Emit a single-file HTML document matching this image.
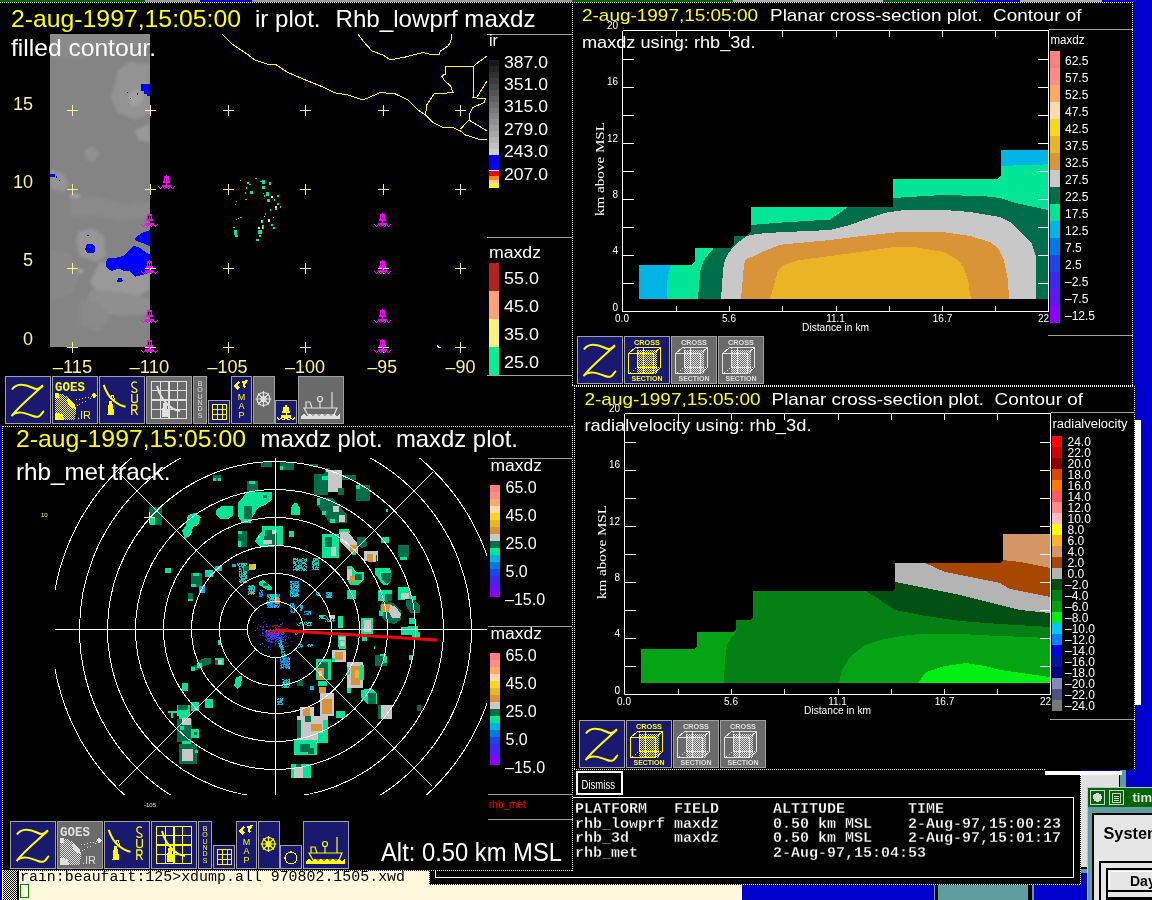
<!DOCTYPE html>
<html><head><meta charset="utf-8">
<style>
html,body{margin:0;padding:0;width:1152px;height:900px;overflow:hidden;background:#0000cd;}
svg{position:absolute;left:0;top:0;will-change:transform;}
text{font-family:"Liberation Sans",sans-serif;}
.mono{font-family:"Liberation Mono",monospace;}
</style></head><body>
<svg width="1152" height="900" viewBox="0 0 1152 900" shape-rendering="crispEdges">
<!-- defs -->
<defs>
<filter id="blur1" x="-20%" y="-20%" width="140%" height="140%"><feGaussianBlur stdDeviation="1.5"/></filter>
<filter id="blur2" x="-50%" y="-50%" width="200%" height="200%"><feGaussianBlur stdDeviation="2"/></filter>


<pattern id="dith_y" width="2" height="2" patternUnits="userSpaceOnUse"><rect width="1" height="1" fill="#ffff00"/><rect x="1" y="1" width="1" height="1" fill="#ffff00"/></pattern>
<pattern id="dith_w" width="2" height="2" patternUnits="userSpaceOnUse"><rect width="1" height="1" fill="#e0e0e0"/><rect x="1" y="1" width="1" height="1" fill="#e0e0e0"/></pattern>
<pattern id="dith_k" width="2" height="2" patternUnits="userSpaceOnUse"><rect width="2" height="2" fill="#fff8dc"/><rect width="1" height="1" fill="#000"/><rect x="1" y="1" width="1" height="1" fill="#000"/></pattern>
</defs>

<!-- bg -->
<rect x="934" y="883" width="100" height="17" fill="#5f9ea0"/>
<rect x="935" y="883" width="3" height="17" fill="#000"/>
<rect x="1028" y="883" width="4" height="17" fill="#000"/>
<rect x="0" y="870" width="742" height="30" fill="#fff8dc"/>
<rect x="3" y="870" width="14" height="30" fill="url(#dith_k)"/>
<rect x="17" y="870" width="1.5" height="30" fill="#000"/>
<text class="mono" x="20" y="881" font-size="14.9" fill="#000" textLength="385" lengthAdjust="spacingAndGlyphs">rain:beaufait:125&gt;xdump.all 970802.1505.xwd</text>
<rect x="20.5" y="884.5" width="8" height="13" fill="none" stroke="#008000" stroke-width="1"/>
<rect x="1081" y="775" width="39" height="93" fill="#e0e0e0"/>
<rect x="1081" y="867" width="7" height="2" fill="#000"/>
<rect x="1081" y="869" width="7" height="4" fill="#5f9ea0"/>
<rect x="1119" y="770" width="1" height="17" fill="#000"/>
<rect x="1120" y="770" width="5.5" height="17" fill="#5f9ea0"/>
<rect x="429" y="770" width="652" height="115" fill="#000"/>
<line x1="429" y1="884.5" x2="1081" y2="884.5" stroke="#fff" stroke-dasharray="1 1"/>
<line x1="1080.5" y1="775" x2="1080.5" y2="885" stroke="#fff" stroke-dasharray="1 1"/>
<line x1="429.5" y1="870" x2="429.5" y2="885" stroke="#fff" stroke-dasharray="1 1"/>
<path d="M435.5 797.5H1073.5V877.5H435.5Z" stroke="#fff" stroke-width="1.5" fill="none"/>
<rect x="1045" y="771" width="77" height="4" fill="#fff"/>
<rect x="577" y="772" width="44.5" height="22" fill="none" stroke="#fff" stroke-width="2"/>
<text x="581.5" y="788.5" font-size="13" fill="#fff" textLength="33.5" lengthAdjust="spacingAndGlyphs">Dismiss</text>
<text class="mono" x="575" y="813.0" font-size="15" font-weight="bold" fill="#fff" stroke="#000" stroke-width="0.3" xml:space="preserve">PLATFORM&#160;&#160;&#160;FIELD&#160;&#160;&#160;&#160;&#160;&#160;ALTITUDE&#160;&#160;&#160;&#160;&#160;&#160;&#160;TIME</text>
<text class="mono" x="575" y="827.7" font-size="15" font-weight="bold" fill="#fff" stroke="#000" stroke-width="0.3" xml:space="preserve">rhb_lowprf&#160;maxdz&#160;&#160;&#160;&#160;&#160;&#160;0.50&#160;km&#160;MSL&#160;&#160;&#160;&#160;2-Aug-97,15:00:23</text>
<text class="mono" x="575" y="842.4" font-size="15" font-weight="bold" fill="#fff" stroke="#000" stroke-width="0.3" xml:space="preserve">rhb_3d&#160;&#160;&#160;&#160;&#160;maxdz&#160;&#160;&#160;&#160;&#160;&#160;0.50&#160;km&#160;MSL&#160;&#160;&#160;&#160;2-Aug-97,15:01:17</text>
<text class="mono" x="575" y="857.1" font-size="15" font-weight="bold" fill="#fff" stroke="#000" stroke-width="0.3" xml:space="preserve">rhb_met&#160;&#160;&#160;&#160;&#160;&#160;&#160;&#160;&#160;&#160;&#160;&#160;&#160;&#160;&#160;2-Aug-97,15:04:53</text>
<!-- tl -->
<rect x="0" y="0" width="572" height="426" fill="#000"/>
<rect x="0" y="0" width="145" height="2" fill="#006400"/>
<rect x="145" y="0" width="55" height="2" fill="#fff" opacity="0.6"/>
<rect x="200" y="0" width="52" height="2" fill="#0000cd"/>
<rect x="252" y="0" width="320" height="2" fill="#fff" opacity="0.6"/>
<line x1="0" y1="2.5" x2="572" y2="2.5" stroke="#fff" stroke-dasharray="1 1"/>
<line x1="572.5" y1="2" x2="572.5" y2="426" stroke="#fff" stroke-dasharray="1 1"/>
<rect x="50" y="34" width="100" height="313" fill="#848484"/>
<defs><clipPath id="irclip"><rect x="50" y="34" width="100" height="313"/></clipPath></defs><g clip-path="url(#irclip)"><g filter="url(#blur1)" opacity="0.75"><path d="M50 34h100v8l-20 6-30 -2-20 14-30 -4z" fill="#8c8c8c"/><path d="M118 70l12-8 20 2v50l-15 6-18-8-6-14z" fill="#999"/><path d="M128 95l8-6 8 4-2 10-10 3z" fill="#aaa"/><path d="M135 130l15-6v18l-12 -2z" fill="#a0a0a0"/><path d="M85 150l8-4 6 8-5 8-8-2z" fill="#959595"/><path d="M50 170l12 2 8 12-6 8-14-4z" fill="#9a9a9a"/><path d="M70 200l25-4 30 8 25-2v15l-30 4-30-6-20 2z" fill="#8c8c8c"/><path d="M78 232l14-4 12 8 2 20-10 6-16-6-4-14z" fill="#9c9c9c"/><path d="M100 262l30 6 20 -6v28l-25 12-25-6-10-14z" fill="#a0a0a0"/><path d="M90 290l30 2 30 6v16l-30 2-35-8z" fill="#939393"/><path d="M50 250l20 4 10 20-8 20-22 6z" fill="#8a8a8a"/><path d="M80 300l20 4 10 15-12 12-18-6z" fill="#8c8c8c"/><path d="M70 194h10v4h-10z M78 269h5v4h-5z" fill="#b0b0b0"/></g></g>
<g fill="#0000ff"><path d="M141 84h9v12h-3v-2h-3v-3h-3z"/><rect x="127" y="92" width="1" height="1"/><rect x="137" y="93" width="1" height="2"/><rect x="130" y="98" width="1" height="1"/><rect x="50" y="174" width="5" height="3"/><rect x="56" y="176" width="1" height="2"/><rect x="59" y="180" width="1" height="1"/><path d="M87 244h6l2 3v5l-3 1h-5l-2-4z"/><rect x="87" y="234.5" width="2" height="1.5"/><path d="M150 230L142 232.7 135 238 136 241 145 243.7 150 246.5z"/><path d="M105.6 262L109 257.5 117.5 257.5 124 255.6 131 248.3 134 245.5 140.4 248.3 147 253 150 254.7 150 273 142 275 135 276.7 129.4 271 124 271 118.4 268.5 112 271 108.3 269.4 105.6 265.7z"/><path d="M118 278h4l1 3-3 1.5-3-1z"/></g>
<path d="M67 110.5H78M72.5 105V116" stroke="#faf096" stroke-width="1" fill="none"/>
<path d="M67 189.5H78M72.5 184V195" stroke="#faf096" stroke-width="1" fill="none"/>
<path d="M67 268.5H78M72.5 263V274" stroke="#faf096" stroke-width="1" fill="none"/>
<path d="M67 347.5H78M72.5 342V353" stroke="#faf096" stroke-width="1" fill="none"/>
<path d="M145 110.5H156M150.5 105V116" stroke="#faf096" stroke-width="1" fill="none"/>
<path d="M145 189.5H156M150.5 184V195" stroke="#faf096" stroke-width="1" fill="none"/>
<path d="M145 268.5H156M150.5 263V274" stroke="#faf096" stroke-width="1" fill="none"/>
<path d="M145 347.5H156M150.5 342V353" stroke="#faf096" stroke-width="1" fill="none"/>
<path d="M223 110.5H234M228.5 105V116" stroke="#faf096" stroke-width="1" fill="none"/>
<path d="M223 189.5H234M228.5 184V195" stroke="#faf096" stroke-width="1" fill="none"/>
<path d="M223 268.5H234M228.5 263V274" stroke="#faf096" stroke-width="1" fill="none"/>
<path d="M223 347.5H234M228.5 342V353" stroke="#faf096" stroke-width="1" fill="none"/>
<path d="M300 110.5H311M305.5 105V116" stroke="#faf096" stroke-width="1" fill="none"/>
<path d="M300 189.5H311M305.5 184V195" stroke="#faf096" stroke-width="1" fill="none"/>
<path d="M300 268.5H311M305.5 263V274" stroke="#faf096" stroke-width="1" fill="none"/>
<path d="M300 347.5H311M305.5 342V353" stroke="#faf096" stroke-width="1" fill="none"/>
<path d="M378 110.5H389M383.5 105V116" stroke="#faf096" stroke-width="1" fill="none"/>
<path d="M378 189.5H389M383.5 184V195" stroke="#faf096" stroke-width="1" fill="none"/>
<path d="M378 268.5H389M383.5 263V274" stroke="#faf096" stroke-width="1" fill="none"/>
<path d="M378 347.5H389M383.5 342V353" stroke="#faf096" stroke-width="1" fill="none"/>
<path d="M455 110.5H466M460.5 105V116" stroke="#faf096" stroke-width="1" fill="none"/>
<path d="M455 189.5H466M460.5 184V195" stroke="#faf096" stroke-width="1" fill="none"/>
<path d="M455 268.5H466M460.5 263V274" stroke="#faf096" stroke-width="1" fill="none"/>
<path d="M455 347.5H466M460.5 342V353" stroke="#faf096" stroke-width="1" fill="none"/>
<g transform="translate(166,175)"><g fill="#ff00ff">
 <rect x="0" y="0" width="1" height="1"/>
 <rect x="-2" y="1" width="5" height="6"/>
 <rect x="-1" y="3" width="1" height="3" fill="#000"/>
 <rect x="1" y="3" width="1" height="3" fill="#000"/>
 <rect x="-3" y="6" width="7" height="2"/>
 <rect x="0" y="8" width="1" height="2"/>
 <rect x="-4" y="10" width="9" height="1"/>
 <rect x="-3" y="11" width="7" height="1"/>
<rect x="-8" y="11" width="1" height="1"/><rect x="-4" y="11" width="1" height="1"/><rect x="4" y="11" width="1" height="1"/><rect x="8" y="11" width="1" height="1"/><rect x="-7" y="12" width="1" height="1"/><rect x="-5" y="12" width="1" height="1"/><rect x="-3" y="12" width="1" height="1"/><rect x="3" y="12" width="1" height="1"/><rect x="5" y="12" width="1" height="1"/><rect x="7" y="12" width="1" height="1"/><rect x="-6" y="13" width="1" height="1"/><rect x="-2" y="13" width="1" height="1"/><rect x="0" y="12" width="1" height="1"/><rect x="2" y="13" width="1" height="1"/><rect x="6" y="13" width="1" height="1"/><rect x="-1" y="12" width="1" height="1"/><rect x="1" y="12" width="1" height="1"/>
</g></g>
<g transform="translate(149,213)"><g fill="#ff00ff">
 <rect x="0" y="0" width="1" height="1"/>
 <rect x="-2" y="1" width="5" height="6"/>
 <rect x="-1" y="3" width="1" height="3" fill="#000"/>
 <rect x="1" y="3" width="1" height="3" fill="#000"/>
 <rect x="-3" y="6" width="7" height="2"/>
 <rect x="0" y="8" width="1" height="2"/>
 <rect x="-4" y="10" width="9" height="1"/>
 <rect x="-3" y="11" width="7" height="1"/>
<rect x="-8" y="11" width="1" height="1"/><rect x="-4" y="11" width="1" height="1"/><rect x="4" y="11" width="1" height="1"/><rect x="8" y="11" width="1" height="1"/><rect x="-7" y="12" width="1" height="1"/><rect x="-5" y="12" width="1" height="1"/><rect x="-3" y="12" width="1" height="1"/><rect x="3" y="12" width="1" height="1"/><rect x="5" y="12" width="1" height="1"/><rect x="7" y="12" width="1" height="1"/><rect x="-6" y="13" width="1" height="1"/><rect x="-2" y="13" width="1" height="1"/><rect x="0" y="12" width="1" height="1"/><rect x="2" y="13" width="1" height="1"/><rect x="6" y="13" width="1" height="1"/><rect x="-1" y="12" width="1" height="1"/><rect x="1" y="12" width="1" height="1"/>
</g></g>
<g transform="translate(149,260)"><g fill="#ff00ff">
 <rect x="0" y="0" width="1" height="1"/>
 <rect x="-2" y="1" width="5" height="6"/>
 <rect x="-1" y="3" width="1" height="3" fill="#000"/>
 <rect x="1" y="3" width="1" height="3" fill="#000"/>
 <rect x="-3" y="6" width="7" height="2"/>
 <rect x="0" y="8" width="1" height="2"/>
 <rect x="-4" y="10" width="9" height="1"/>
 <rect x="-3" y="11" width="7" height="1"/>
<rect x="-8" y="11" width="1" height="1"/><rect x="-4" y="11" width="1" height="1"/><rect x="4" y="11" width="1" height="1"/><rect x="8" y="11" width="1" height="1"/><rect x="-7" y="12" width="1" height="1"/><rect x="-5" y="12" width="1" height="1"/><rect x="-3" y="12" width="1" height="1"/><rect x="3" y="12" width="1" height="1"/><rect x="5" y="12" width="1" height="1"/><rect x="7" y="12" width="1" height="1"/><rect x="-6" y="13" width="1" height="1"/><rect x="-2" y="13" width="1" height="1"/><rect x="0" y="12" width="1" height="1"/><rect x="2" y="13" width="1" height="1"/><rect x="6" y="13" width="1" height="1"/><rect x="-1" y="12" width="1" height="1"/><rect x="1" y="12" width="1" height="1"/>
</g></g>
<g transform="translate(149,309)"><g fill="#ff00ff">
 <rect x="0" y="0" width="1" height="1"/>
 <rect x="-2" y="1" width="5" height="6"/>
 <rect x="-1" y="3" width="1" height="3" fill="#000"/>
 <rect x="1" y="3" width="1" height="3" fill="#000"/>
 <rect x="-3" y="6" width="7" height="2"/>
 <rect x="0" y="8" width="1" height="2"/>
 <rect x="-4" y="10" width="9" height="1"/>
 <rect x="-3" y="11" width="7" height="1"/>
<rect x="-8" y="11" width="1" height="1"/><rect x="-4" y="11" width="1" height="1"/><rect x="4" y="11" width="1" height="1"/><rect x="8" y="11" width="1" height="1"/><rect x="-7" y="12" width="1" height="1"/><rect x="-5" y="12" width="1" height="1"/><rect x="-3" y="12" width="1" height="1"/><rect x="3" y="12" width="1" height="1"/><rect x="5" y="12" width="1" height="1"/><rect x="7" y="12" width="1" height="1"/><rect x="-6" y="13" width="1" height="1"/><rect x="-2" y="13" width="1" height="1"/><rect x="0" y="12" width="1" height="1"/><rect x="2" y="13" width="1" height="1"/><rect x="6" y="13" width="1" height="1"/><rect x="-1" y="12" width="1" height="1"/><rect x="1" y="12" width="1" height="1"/>
</g></g>
<g transform="translate(149,339)"><g fill="#ff00ff">
 <rect x="0" y="0" width="1" height="1"/>
 <rect x="-2" y="1" width="5" height="6"/>
 <rect x="-1" y="3" width="1" height="3" fill="#000"/>
 <rect x="1" y="3" width="1" height="3" fill="#000"/>
 <rect x="-3" y="6" width="7" height="2"/>
 <rect x="0" y="8" width="1" height="2"/>
 <rect x="-4" y="10" width="9" height="1"/>
 <rect x="-3" y="11" width="7" height="1"/>
<rect x="-8" y="11" width="1" height="1"/><rect x="-4" y="11" width="1" height="1"/><rect x="4" y="11" width="1" height="1"/><rect x="8" y="11" width="1" height="1"/><rect x="-7" y="12" width="1" height="1"/><rect x="-5" y="12" width="1" height="1"/><rect x="-3" y="12" width="1" height="1"/><rect x="3" y="12" width="1" height="1"/><rect x="5" y="12" width="1" height="1"/><rect x="7" y="12" width="1" height="1"/><rect x="-6" y="13" width="1" height="1"/><rect x="-2" y="13" width="1" height="1"/><rect x="0" y="12" width="1" height="1"/><rect x="2" y="13" width="1" height="1"/><rect x="6" y="13" width="1" height="1"/><rect x="-1" y="12" width="1" height="1"/><rect x="1" y="12" width="1" height="1"/>
</g></g>
<g transform="translate(382,213)"><g fill="#ff00ff">
 <rect x="0" y="0" width="1" height="1"/>
 <rect x="-2" y="1" width="5" height="6"/>
 <rect x="-1" y="3" width="1" height="3" fill="#000"/>
 <rect x="1" y="3" width="1" height="3" fill="#000"/>
 <rect x="-3" y="6" width="7" height="2"/>
 <rect x="0" y="8" width="1" height="2"/>
 <rect x="-4" y="10" width="9" height="1"/>
 <rect x="-3" y="11" width="7" height="1"/>
<rect x="-8" y="11" width="1" height="1"/><rect x="-4" y="11" width="1" height="1"/><rect x="4" y="11" width="1" height="1"/><rect x="8" y="11" width="1" height="1"/><rect x="-7" y="12" width="1" height="1"/><rect x="-5" y="12" width="1" height="1"/><rect x="-3" y="12" width="1" height="1"/><rect x="3" y="12" width="1" height="1"/><rect x="5" y="12" width="1" height="1"/><rect x="7" y="12" width="1" height="1"/><rect x="-6" y="13" width="1" height="1"/><rect x="-2" y="13" width="1" height="1"/><rect x="0" y="12" width="1" height="1"/><rect x="2" y="13" width="1" height="1"/><rect x="6" y="13" width="1" height="1"/><rect x="-1" y="12" width="1" height="1"/><rect x="1" y="12" width="1" height="1"/>
</g></g>
<g transform="translate(382,260)"><g fill="#ff00ff">
 <rect x="0" y="0" width="1" height="1"/>
 <rect x="-2" y="1" width="5" height="6"/>
 <rect x="-1" y="3" width="1" height="3" fill="#000"/>
 <rect x="1" y="3" width="1" height="3" fill="#000"/>
 <rect x="-3" y="6" width="7" height="2"/>
 <rect x="0" y="8" width="1" height="2"/>
 <rect x="-4" y="10" width="9" height="1"/>
 <rect x="-3" y="11" width="7" height="1"/>
<rect x="-8" y="11" width="1" height="1"/><rect x="-4" y="11" width="1" height="1"/><rect x="4" y="11" width="1" height="1"/><rect x="8" y="11" width="1" height="1"/><rect x="-7" y="12" width="1" height="1"/><rect x="-5" y="12" width="1" height="1"/><rect x="-3" y="12" width="1" height="1"/><rect x="3" y="12" width="1" height="1"/><rect x="5" y="12" width="1" height="1"/><rect x="7" y="12" width="1" height="1"/><rect x="-6" y="13" width="1" height="1"/><rect x="-2" y="13" width="1" height="1"/><rect x="0" y="12" width="1" height="1"/><rect x="2" y="13" width="1" height="1"/><rect x="6" y="13" width="1" height="1"/><rect x="-1" y="12" width="1" height="1"/><rect x="1" y="12" width="1" height="1"/>
</g></g>
<g transform="translate(382,309)"><g fill="#ff00ff">
 <rect x="0" y="0" width="1" height="1"/>
 <rect x="-2" y="1" width="5" height="6"/>
 <rect x="-1" y="3" width="1" height="3" fill="#000"/>
 <rect x="1" y="3" width="1" height="3" fill="#000"/>
 <rect x="-3" y="6" width="7" height="2"/>
 <rect x="0" y="8" width="1" height="2"/>
 <rect x="-4" y="10" width="9" height="1"/>
 <rect x="-3" y="11" width="7" height="1"/>
<rect x="-8" y="11" width="1" height="1"/><rect x="-4" y="11" width="1" height="1"/><rect x="4" y="11" width="1" height="1"/><rect x="8" y="11" width="1" height="1"/><rect x="-7" y="12" width="1" height="1"/><rect x="-5" y="12" width="1" height="1"/><rect x="-3" y="12" width="1" height="1"/><rect x="3" y="12" width="1" height="1"/><rect x="5" y="12" width="1" height="1"/><rect x="7" y="12" width="1" height="1"/><rect x="-6" y="13" width="1" height="1"/><rect x="-2" y="13" width="1" height="1"/><rect x="0" y="12" width="1" height="1"/><rect x="2" y="13" width="1" height="1"/><rect x="6" y="13" width="1" height="1"/><rect x="-1" y="12" width="1" height="1"/><rect x="1" y="12" width="1" height="1"/>
</g></g>
<g transform="translate(382,339)"><g fill="#ff00ff">
 <rect x="0" y="0" width="1" height="1"/>
 <rect x="-2" y="1" width="5" height="6"/>
 <rect x="-1" y="3" width="1" height="3" fill="#000"/>
 <rect x="1" y="3" width="1" height="3" fill="#000"/>
 <rect x="-3" y="6" width="7" height="2"/>
 <rect x="0" y="8" width="1" height="2"/>
 <rect x="-4" y="10" width="9" height="1"/>
 <rect x="-3" y="11" width="7" height="1"/>
<rect x="-8" y="11" width="1" height="1"/><rect x="-4" y="11" width="1" height="1"/><rect x="4" y="11" width="1" height="1"/><rect x="8" y="11" width="1" height="1"/><rect x="-7" y="12" width="1" height="1"/><rect x="-5" y="12" width="1" height="1"/><rect x="-3" y="12" width="1" height="1"/><rect x="3" y="12" width="1" height="1"/><rect x="5" y="12" width="1" height="1"/><rect x="7" y="12" width="1" height="1"/><rect x="-6" y="13" width="1" height="1"/><rect x="-2" y="13" width="1" height="1"/><rect x="0" y="12" width="1" height="1"/><rect x="2" y="13" width="1" height="1"/><rect x="6" y="13" width="1" height="1"/><rect x="-1" y="12" width="1" height="1"/><rect x="1" y="12" width="1" height="1"/>
</g></g>
<g fill="#00e696"><rect x="240" y="180" width="1" height="1"/><rect x="255" y="178" width="2" height="1"/><rect x="247" y="182" width="2" height="2"/><rect x="249" y="184" width="2" height="1"/><rect x="246" y="187" width="1" height="2"/><rect x="250" y="191" width="3" height="3"/><rect x="245" y="192" width="1" height="2"/><rect x="245" y="199" width="2" height="1"/><rect x="236" y="201" width="1" height="1"/><rect x="235" y="204" width="1" height="1"/><rect x="262" y="180" width="3" height="4"/><rect x="260" y="181" width="2" height="1"/><rect x="269" y="182" width="2" height="3"/><rect x="262" y="186" width="3" height="3"/><rect x="266" y="192" width="3" height="4"/><rect x="263" y="193" width="1" height="1"/><rect x="264" y="195" width="1" height="2"/><rect x="277" y="195" width="2" height="2"/><rect x="274" y="199" width="1" height="2"/><rect x="267" y="199" width="3" height="3"/><rect x="277" y="203" width="2" height="2"/><rect x="280" y="206" width="1" height="2"/><rect x="275" y="207" width="2" height="3"/><rect x="270" y="209" width="1" height="2"/><rect x="265" y="213" width="1" height="2"/><rect x="240" y="217" width="2" height="1"/><rect x="238" y="218" width="1" height="1"/><rect x="236" y="219" width="1" height="1"/><rect x="273" y="217" width="1" height="1"/><rect x="271" y="224" width="2" height="2"/><rect x="273" y="227" width="2" height="2"/><rect x="262" y="225" width="2" height="4"/><rect x="258" y="230" width="4" height="4"/><rect x="259" y="235" width="2" height="2"/><rect x="256" y="239" width="3" height="2"/><rect x="233" y="227" width="2" height="1"/><rect x="234" y="230" width="3" height="5"/><rect x="235" y="235" width="3" height="2"/><rect x="261" y="220" width="2" height="3"/></g>
<g fill="#f0e68c"><rect x="271" y="196" width="2" height="2"/><rect x="275" y="206" width="2" height="2"/><rect x="264" y="216" width="1" height="1"/><rect x="268" y="219" width="2" height="3"/><rect x="261" y="220" width="1" height="2"/><rect x="258" y="227" width="2" height="2"/><rect x="262" y="227" width="1" height="2"/></g>
<g fill="none" stroke="#ffff00" stroke-width="1">
<polyline points="358,34 363,41 372,51 383,55 390.5,60 405.5,57 423,52.5 433,55 439,54.5 440.5,51 448,46 450.5,42.5 452,34"/>
<polyline points="222,34 232,44 247,54 255,60 267,64 275,64 287,72 303,79 320.5,86 335.5,93 348,95 363,100 380.5,92.5 395.5,94 408,100 418,110 425.5,115 433,122.5 443,127.5 453,127.5 460.5,131 465.5,135 478,139 487,139"/>
<polyline points="425.5,115 426.75,105 434,94 453,92.5 450.5,86 444,80 441.75,76 445.5,74 445.5,66 474,66 478,62.5 485.5,57 487,56"/>
<polyline points="474,66 473,97.5 485.5,99 484,102.5 473,107.5 469,115 469,120 460.5,129"/>
<polyline points="469,120 487,131"/>
<polyline points="477,97 487,81"/>
</g>
<path d="M437 345l2 3 2 -1" stroke="#ffff00" fill="none"/>
<text x="11" y="27" font-size="24" fill="#ffff00" textLength="230" lengthAdjust="spacingAndGlyphs">2-aug-1997,15:05:00</text>
<text x="255" y="27" font-size="24" fill="#fff" textLength="65.5" lengthAdjust="spacingAndGlyphs">ir plot.</text>
<text x="335.5" y="27" font-size="24" fill="#fff" textLength="200" lengthAdjust="spacingAndGlyphs">Rhb_lowprf maxdz</text>
<text x="11" y="56" font-size="24" fill="#fff" textLength="145" lengthAdjust="spacingAndGlyphs">filled contour.</text>
<text x="33" y="110" font-size="18" fill="#faf096" text-anchor="end">15</text>
<text x="33" y="188" font-size="18" fill="#faf096" text-anchor="end">10</text>
<text x="33" y="266" font-size="18" fill="#faf096" text-anchor="end">5</text>
<text x="33" y="345" font-size="18" fill="#faf096" text-anchor="end">0</text>
<text x="52.7" y="373" font-size="18" fill="#faf096" textLength="39.5" lengthAdjust="spacingAndGlyphs">&#8211;115</text>
<text x="129.6" y="373" font-size="18" fill="#faf096" textLength="39.6" lengthAdjust="spacingAndGlyphs">&#8211;110</text>
<text x="207.5" y="373" font-size="18" fill="#faf096" textLength="40.0" lengthAdjust="spacingAndGlyphs">&#8211;105</text>
<text x="285" y="373" font-size="18" fill="#faf096" textLength="40.0" lengthAdjust="spacingAndGlyphs">&#8211;100</text>
<text x="367.5" y="373" font-size="18" fill="#faf096" textLength="29.5" lengthAdjust="spacingAndGlyphs">&#8211;95</text>
<text x="445.5" y="373" font-size="18" fill="#faf096" textLength="30.0" lengthAdjust="spacingAndGlyphs">&#8211;90</text>
<rect x="487" y="34" width="85" height="1" fill="#a0a0a0"/>
<text x="489" y="46" font-size="16" fill="#fff">ir</text>
<defs><linearGradient id="irg" x1="0" y1="0" x2="0" y2="1"><stop offset="0" stop-color="#181818"/><stop offset="1" stop-color="#d0d0d0"/></linearGradient></defs>
<rect x="489" y="60.00" width="10" height="6.24" fill="rgb(24,24,24)"/>
<rect x="489" y="65.94" width="10" height="6.24" fill="rgb(36,36,36)"/>
<rect x="489" y="71.88" width="10" height="6.24" fill="rgb(48,48,48)"/>
<rect x="489" y="77.81" width="10" height="6.24" fill="rgb(60,60,60)"/>
<rect x="489" y="83.75" width="10" height="6.24" fill="rgb(72,72,72)"/>
<rect x="489" y="89.69" width="10" height="6.24" fill="rgb(84,84,84)"/>
<rect x="489" y="95.62" width="10" height="6.24" fill="rgb(96,96,96)"/>
<rect x="489" y="101.56" width="10" height="6.24" fill="rgb(108,108,108)"/>
<rect x="489" y="107.50" width="10" height="6.24" fill="rgb(120,120,120)"/>
<rect x="489" y="113.44" width="10" height="6.24" fill="rgb(132,132,132)"/>
<rect x="489" y="119.38" width="10" height="6.24" fill="rgb(144,144,144)"/>
<rect x="489" y="125.31" width="10" height="6.24" fill="rgb(156,156,156)"/>
<rect x="489" y="131.25" width="10" height="6.24" fill="rgb(168,168,168)"/>
<rect x="489" y="137.19" width="10" height="6.24" fill="rgb(180,180,180)"/>
<rect x="489" y="143.12" width="10" height="6.24" fill="rgb(192,192,192)"/>
<rect x="489" y="149.06" width="10" height="6.24" fill="rgb(205,205,205)"/>
<rect x="489" y="155" width="10" height="15" fill="#0000ff"/>
<rect x="489" y="170" width="10" height="1" fill="#fff"/>
<rect x="489" y="171" width="10" height="5" fill="#ff0000"/>
<rect x="489" y="176" width="10" height="4" fill="#ff8c00"/>
<rect x="489" y="180" width="10" height="3" fill="#ffc0cb"/>
<rect x="489" y="183" width="10" height="5" fill="#ffff00"/>
<text x="504" y="67.5" font-size="16" fill="#fff" textLength="44" lengthAdjust="spacingAndGlyphs">387.0</text>
<text x="504" y="89.9" font-size="16" fill="#fff" textLength="44" lengthAdjust="spacingAndGlyphs">351.0</text>
<text x="504" y="112.3" font-size="16" fill="#fff" textLength="44" lengthAdjust="spacingAndGlyphs">315.0</text>
<text x="504" y="134.7" font-size="16" fill="#fff" textLength="44" lengthAdjust="spacingAndGlyphs">279.0</text>
<text x="504" y="157.1" font-size="16" fill="#fff" textLength="44" lengthAdjust="spacingAndGlyphs">243.0</text>
<text x="504" y="179.5" font-size="16" fill="#fff" textLength="44" lengthAdjust="spacingAndGlyphs">207.0</text>
<rect x="487" y="237" width="85" height="1" fill="#a0a0a0"/>
<text x="489" y="257.5" font-size="16" fill="#fff" textLength="52" lengthAdjust="spacingAndGlyphs">maxdz</text>
<rect x="489" y="263" width="10" height="28" fill="#b22222"/>
<rect x="489" y="291" width="10" height="28" fill="#ffa07a"/>
<rect x="489" y="319" width="10" height="28" fill="#faf278"/>
<rect x="489" y="347" width="10" height="28" fill="#00f096"/>
<text x="504" y="284" font-size="16" fill="#fff" textLength="35" lengthAdjust="spacingAndGlyphs">55.0</text>
<text x="504" y="312" font-size="16" fill="#fff" textLength="35" lengthAdjust="spacingAndGlyphs">45.0</text>
<text x="504" y="340" font-size="16" fill="#fff" textLength="35" lengthAdjust="spacingAndGlyphs">35.0</text>
<text x="504" y="368" font-size="16" fill="#fff" textLength="35" lengthAdjust="spacingAndGlyphs">25.0</text>
<rect x="487" y="375" width="85" height="1" fill="#a0a0a0"/>
<g transform="translate(5,376)"><rect x="0.5" y="0.5" width="45" height="47" fill="#191970" stroke="#a0a0a0" stroke-width="1"/><path d="M7 13.5C11 7,20 8,27 11.5S35 11,38 9.5C28 19,14 30,6.5 40C12 34,20 37,28 40S36 37,39 35" stroke="#ffff00" stroke-width="2" fill="none" shape-rendering="auto"/></g>
<g transform="translate(52,376)"><rect x="0.5" y="0.5" width="45" height="47" fill="#191970" stroke="#a0a0a0" stroke-width="1"/><text x="3" y="15" font-size="13" font-weight="bold" fill="#ffff00" textLength="30" lengthAdjust="spacingAndGlyphs" style="font-family:Liberation Mono">GOES</text><path d="M3 17 C12 17,23 23,24 33 C24 38,23 42,22 44 H3Z" fill="url(#dith_y)"/><path d="M3 37 C7 36,12 38,12 44H3Z M3 17h4v5h-4z M14 22 C19 23,23 28,24 33 L19 32 C17 28,15 26,14 22Z" fill="#ffff00"/><path d="M24 24 L42 20 M22 31 L42 21" stroke="#ffff00" stroke-dasharray="1 2" fill="none"/><path d="M39 19l3 -2 3 2 -3 3z" fill="#ffff00"/><text x="25" y="43" font-size="10" fill="#ffff00" textLength="14" lengthAdjust="spacingAndGlyphs">.IR</text></g>
<g transform="translate(99,376)"><rect x="0.5" y="0.5" width="45" height="47" fill="#191970" stroke="#a0a0a0" stroke-width="1"/><path d="M4.7 8.9 C7 16,10 21,15 25 S22 30,26.6 30.7" stroke="#ffff00" stroke-width="2" fill="none" shape-rendering="auto"/><path d="M10 25 L8.4 39 H15.5 L13 25Z" fill="#ffff00"/><path d="M11 21 L14 19 L16 25" stroke="#ffff00" fill="none"/><g fill="none" stroke="#ffff00" stroke-width="1.3" shape-rendering="auto"><path d="M38 6.5C34 5,32 7,33 10S38 12,38 14.5 34 17,32.5 15"/><path d="M32.8 18V25C32.8 27,38.3 27,38.3 25V18"/><path d="M32.8 39V29H36.5C38.5 29,38.5 34,36.5 34H32.8M35.5 34L38.5 39"/></g></g>
<g transform="translate(146,376)"><rect x="0.5" y="0.5" width="45" height="47" fill="#6a6a6a" stroke="#a0a0a0" stroke-width="1"/><g stroke="#e0e0e0" fill="none" stroke-width="1.2"><rect x="5.5" y="5.5" width="35" height="37"/><line x1="14.2" y1="5.5" x2="14.2" y2="42.5"/><line x1="5.5" y1="14.8" x2="40.5" y2="14.8"/><line x1="23.0" y1="5.5" x2="23.0" y2="42.5"/><line x1="5.5" y1="24.0" x2="40.5" y2="24.0"/><line x1="31.8" y1="5.5" x2="31.8" y2="42.5"/><line x1="5.5" y1="33.2" x2="40.5" y2="33.2"/></g><path d="M11 10C13 18,17 24,22 29S30 34,34 35" stroke="#e0e0e0" stroke-width="2" fill="none" shape-rendering="auto"/><path d="M17 27L15.5 41H22.5L20.5 27Z" fill="#e0e0e0"/></g>
<g transform="translate(193,376)"><rect x="0.5" y="0.5" width="13" height="47" fill="#6a6a6a" stroke="#a0a0a0" stroke-width="1"/><g fill="#e0e0e0" font-size="7" text-anchor="middle"><text x="7" y="10.0">B</text><text x="7" y="16.3">O</text><text x="7" y="22.6">U</text><text x="7" y="28.9">N</text><text x="7" y="35.2">D</text><text x="7" y="41.5">S</text></g></g>
<g transform="translate(208,400)"><rect x="0.5" y="0.5" width="21" height="23" fill="#191970" stroke="#a0a0a0" stroke-width="1"/><g stroke="#ffff00" fill="none" stroke-width="1"><rect x="4.5" y="4.5" width="14" height="15"/><path d="M9.5 4.5V19.5M14 4.5V19.5M4.5 9.5H18.5M4.5 14.5H18.5"/></g></g>
<g transform="translate(231,376)"><rect x="0.5" y="0.5" width="20" height="47" fill="#191970" stroke="#a0a0a0" stroke-width="1"/><path d="M3 9 L7 5 L9 6 L7 9 L9 12 L6 14 L4 12Z M11 5 L17 4 L16 7 L14 8 L15 11 L13 12 L12 9Z" fill="#ffff00"/><g fill="#ffff00" font-size="9" text-anchor="middle"><text x="10.5" y="24">M</text><text x="10.5" y="33">A</text><text x="10.5" y="42">P</text></g></g>
<g transform="translate(253,376)"><rect x="0.5" y="0.5" width="21" height="47" fill="#6a6a6a" stroke="#a0a0a0" stroke-width="1"/><g stroke="#e0e0e0" fill="none" stroke-width="1.2" shape-rendering="auto"><circle cx="10.5" cy="23" r="6.5"/><circle cx="10.5" cy="23" r="2.5"/><path d="M10.5 15V31M2.5 23H18.5M5 17.5L16 28.5M16 17.5L5 28.5"/></g></g>
<g transform="translate(275,400)"><rect x="0.5" y="0.5" width="21" height="23" fill="#191970" stroke="#a0a0a0" stroke-width="1"/><g fill="#ffff00"><rect x="10" y="5" width="2" height="2"/><rect x="8" y="7" width="6" height="5"/><rect x="7" y="11" width="8" height="2"/><rect x="10.5" y="13" width="1" height="3"/><rect x="6" y="15" width="10" height="3"/></g><polyline points="2,17 4,20 6,18 8,20 11,18 14,20 16,18 18,20 20,17" stroke="#ffff00" fill="none"/></g>
<g transform="translate(298,376)"><rect x="0.5" y="0.5" width="45" height="47" fill="#6a6a6a" stroke="#a0a0a0" stroke-width="1"/><g stroke="#e0e0e0" fill="none" stroke-width="1.2" shape-rendering="auto"><path d="M6 32H39L36 39H10Z"/><path d="M8 32V26H12L14 32"/><circle cx="22" cy="23" r="2.5"/><path d="M22 25.5V32M34 16V32"/></g><path d="M3 40L6 38 9 40 12 38 15 40 18 38 21 40 24 38 27 40 30 38 33 40 36 38 39 40 42 38V43H3Z" fill="#e0e0e0"/></g>
<!-- tr -->
<rect x="572" y="0" width="161" height="2" fill="#006400"/>
<rect x="733" y="0" width="150" height="2" fill="#b0b0b0"/>
<rect x="883" y="0" width="91" height="2" fill="#006400"/>
<rect x="974" y="0" width="46" height="2" fill="#0000cd"/>
<rect x="1020" y="0" width="82" height="2" fill="#b0b0b0"/>
<rect x="572" y="2" width="561" height="384" fill="#000"/>
<line x1="572" y1="2.5" x2="1133" y2="2.5" stroke="#fff" stroke-dasharray="1 1"/>
<line x1="1132.5" y1="2" x2="1132.5" y2="386" stroke="#fff" stroke-dasharray="1 1"/>
<line x1="572" y1="385.5" x2="1133" y2="385.5" stroke="#fff" stroke-dasharray="1 1"/>
<line x1="572.5" y1="2" x2="572.5" y2="386" stroke="#fff" stroke-dasharray="1 1"/>
<polygon fill="#00e696" points="639,299 639,265 692,265 695,261 695,248 731,248 734,244 734,236 746,236 751,232 751,207 893,207 893,179 997,179 1001,175 1001,150 1048,150 1048,299"/>
<polygon fill="#00b4e6" points="639,265 671,265 668,275 667,285 666.5,299 639,299"/>
<polygon fill="#00b4e6" points="1001,150 1048,150 1048,164.4 1020,165 1001,166.4"/>
<polygon fill="#006e4b" points="698,299 699,285 700.5,270 703,262 708,255 713.8,248 731,248 734,244 734,236 746,236 751,232 751,225 780,222.6 830,219.5 848,207 893,207 893,198 942,195 982,196 1000,198 1016,203 1048,210 1048,299"/>
<polygon fill="#c8c8c8" points="721,299 722.7,275 723.6,266 725.3,259 728.9,252.8 732.4,248.3 736.9,243.4 742.2,239.4 746.7,235.9 753.8,234.6 764.4,233.2 780,232.3 830,230 850,225 866,219 884,213 904,210 950,210.4 970,212 1000,217 1010,222 1022,234 1032,244 1036,256 1036,299"/>
<polygon fill="#d89436" points="741,299 743.1,275 744,264.3 745.8,259 753.8,256.3 764.4,251 780,244.8 830,240 854,237 880,234 900,232 942,232 970,236 990,242 998,248 1004,260 1008,280 1009,299"/>
<polygon fill="#ebb425" points="770,299 774,285 778,270 783,265 800,260 830,256 860,252 894,247 914,247 944,252 958,260 964,268 968,280 971,299"/>
<g stroke="#fff" stroke-width="1" fill="none">
<path d="M622.5 30.5V311.5H1048.5V30.5H622.5"/>
<path d="M622.5 59.5h11M1048.5 59.5h-11"/>
<path d="M622.5 87.5h11M1048.5 87.5h-11"/>
<path d="M622.5 115.5h11M1048.5 115.5h-11"/>
<path d="M622.5 143.5h11M1048.5 143.5h-11"/>
<path d="M622.5 171.5h11M1048.5 171.5h-11"/>
<path d="M622.5 199.5h11M1048.5 199.5h-11"/>
<path d="M622.5 227.5h11M1048.5 227.5h-11"/>
<path d="M622.5 255.5h11M1048.5 255.5h-11"/>
<path d="M622.5 283.5h11M1048.5 283.5h-11"/>
<path d="M676.5 30.5v6M676.5 311.5v-6"/>
<path d="M729.5 30.5v6M729.5 311.5v-6"/>
<path d="M782.5 30.5v6M782.5 311.5v-6"/>
<path d="M836.5 30.5v6M836.5 311.5v-6"/>
<path d="M889.5 30.5v6M889.5 311.5v-6"/>
<path d="M942.5 30.5v6M942.5 311.5v-6"/>
<path d="M995.5 30.5v6M995.5 311.5v-6"/>
</g>
<text x="618" y="29.0" font-size="10" fill="#fff" text-anchor="end">20</text>
<text x="618" y="85.3" font-size="10" fill="#fff" text-anchor="end">16</text>
<text x="618" y="141.6" font-size="10" fill="#fff" text-anchor="end">12</text>
<text x="618" y="197.9" font-size="10" fill="#fff" text-anchor="end">8</text>
<text x="618" y="254.2" font-size="10" fill="#fff" text-anchor="end">4</text>
<text x="618" y="310.5" font-size="10" fill="#fff" text-anchor="end">0</text>
<text x="622" y="322" font-size="10" fill="#fff" text-anchor="middle">0.0</text>
<text x="729" y="322" font-size="10" fill="#fff" text-anchor="middle">5.6</text>
<text x="835.5" y="322" font-size="10" fill="#fff" text-anchor="middle">11.1</text>
<text x="942.5" y="322" font-size="10" fill="#fff" text-anchor="middle">16.7</text>
<text x="1038" y="322" font-size="10" fill="#fff">22</text>
<text x="802" y="331" font-size="10" fill="#fff" textLength="67" lengthAdjust="spacingAndGlyphs">Distance in km</text>
<text transform="translate(604,169) rotate(-90)" font-size="12.5" fill="#fff" text-anchor="middle" textLength="94" lengthAdjust="spacingAndGlyphs" style="font-family:Liberation Serif">km above MSL</text>
<text x="582" y="20.5" font-size="17" fill="#ffff00" textLength="176" lengthAdjust="spacingAndGlyphs">2-aug-1997,15:05:00</text>
<text x="770" y="20.5" font-size="17" fill="#fff" textLength="311.5" lengthAdjust="spacingAndGlyphs" style="white-space:pre">Planar cross-section plot.  Contour of</text>
<text x="582" y="47.5" font-size="17" fill="#fff" textLength="173.5" lengthAdjust="spacingAndGlyphs">maxdz using: rhb_3d.</text>
<rect x="1049" y="29" width="84" height="1" fill="#a0a0a0"/>
<text x="1050.5" y="44" font-size="12" fill="#fff" textLength="34" lengthAdjust="spacingAndGlyphs">maxdz</text>
<rect x="1050" y="51" width="10" height="17" fill="#ff7f7f"/>
<text x="1065" y="64.6" font-size="12" fill="#fff">62.5</text>
<rect x="1050" y="68" width="10" height="17" fill="#ff8c8c"/>
<text x="1065" y="81.6" font-size="12" fill="#fff">57.5</text>
<rect x="1050" y="85" width="10" height="17" fill="#ffaa64"/>
<text x="1065" y="98.6" font-size="12" fill="#fff">52.5</text>
<rect x="1050" y="102" width="10" height="17" fill="#ffdab0"/>
<text x="1065" y="115.6" font-size="12" fill="#fff">47.5</text>
<rect x="1050" y="119" width="10" height="17" fill="#f8d818"/>
<text x="1065" y="132.6" font-size="12" fill="#fff">42.5</text>
<rect x="1050" y="136" width="10" height="17" fill="#eab428"/>
<text x="1065" y="149.6" font-size="12" fill="#fff">37.5</text>
<rect x="1050" y="153" width="10" height="17" fill="#d89438"/>
<text x="1065" y="166.6" font-size="12" fill="#fff">32.5</text>
<rect x="1050" y="170" width="10" height="17" fill="#c8c8c8"/>
<text x="1065" y="183.6" font-size="12" fill="#fff">27.5</text>
<rect x="1050" y="187" width="10" height="17" fill="#006e4b"/>
<text x="1065" y="200.6" font-size="12" fill="#fff">22.5</text>
<rect x="1050" y="204" width="10" height="17" fill="#00e696"/>
<text x="1065" y="217.6" font-size="12" fill="#fff">17.5</text>
<rect x="1050" y="221" width="10" height="17" fill="#00b4e6"/>
<text x="1065" y="234.6" font-size="12" fill="#fff">12.5</text>
<rect x="1050" y="238" width="10" height="17" fill="#0078e6"/>
<text x="1065" y="251.6" font-size="12" fill="#fff">7.5</text>
<rect x="1050" y="255" width="10" height="17" fill="#1e46e6"/>
<text x="1065" y="268.6" font-size="12" fill="#fff">2.5</text>
<rect x="1050" y="272" width="10" height="17" fill="#3c28e6"/>
<text x="1065" y="285.6" font-size="12" fill="#fff">&#8211;2.5</text>
<rect x="1050" y="289" width="10" height="17" fill="#6414f0"/>
<text x="1065" y="302.6" font-size="12" fill="#fff">&#8211;7.5</text>
<rect x="1050" y="306" width="10" height="17" fill="#8c00ff"/>
<text x="1065" y="319.6" font-size="12" fill="#fff">&#8211;12.5</text>
<rect x="1048" y="335" width="85" height="1" fill="#a0a0a0"/>
<g transform="translate(577,336)"><rect x="0.5" y="0.5" width="45" height="47" fill="#191970" stroke="#a0a0a0" stroke-width="1"/><path d="M7 13.5C11 7,20 8,27 11.5S35 11,38 9.5C28 19,14 30,6.5 40C12 34,20 37,28 40S36 37,39 35" stroke="#ffff00" stroke-width="2" fill="none" shape-rendering="auto"/></g>
<g transform="translate(624,336)"><rect x="0.5" y="0.5" width="45" height="47" fill="#191970" stroke="#a0a0a0" stroke-width="1"/><text x="23" y="8.5" font-size="7.5" font-weight="bold" fill="#ffff00" text-anchor="middle" textLength="26" lengthAdjust="spacingAndGlyphs">CROSS</text><text x="23" y="45" font-size="7.5" font-weight="bold" fill="#ffff00" text-anchor="middle" textLength="31" lengthAdjust="spacingAndGlyphs">SECTION</text><rect x="13" y="14" width="20" height="24" fill="url(#dith_y)"/><g stroke="#ffff00" fill="none" stroke-width="1"><path d="M4.5 17.5H29.5V37.5H4.5Z M4.5 17.5L11.5 11.5H36.5L29.5 17.5 M36.5 11.5V31.5L29.5 37.5"/><path d="M13.5 11.5V31.5H36.5 M13.5 31.5L4.5 37.5" stroke-dasharray="1 1"/><path d="M19.5 11.5V37.5"/></g></g>
<g transform="translate(671,336)"><rect x="0.5" y="0.5" width="45" height="47" fill="#6a6a6a" stroke="#a0a0a0" stroke-width="1"/><text x="23" y="8.5" font-size="7.5" font-weight="bold" fill="#e0e0e0" text-anchor="middle" textLength="26" lengthAdjust="spacingAndGlyphs">CROSS</text><text x="23" y="45" font-size="7.5" font-weight="bold" fill="#e0e0e0" text-anchor="middle" textLength="31" lengthAdjust="spacingAndGlyphs">SECTION</text><rect x="13" y="14" width="20" height="24" fill="url(#dith_w)"/><g stroke="#e0e0e0" fill="none" stroke-width="1"><path d="M4.5 17.5H29.5V37.5H4.5Z M4.5 17.5L11.5 11.5H36.5L29.5 17.5 M36.5 11.5V31.5L29.5 37.5"/><path d="M13.5 11.5V31.5H36.5 M13.5 31.5L4.5 37.5" stroke-dasharray="1 1"/><path d="M19.5 11.5V37.5"/></g></g>
<g transform="translate(718,336)"><rect x="0.5" y="0.5" width="45" height="47" fill="#6a6a6a" stroke="#a0a0a0" stroke-width="1"/><text x="23" y="8.5" font-size="7.5" font-weight="bold" fill="#e0e0e0" text-anchor="middle" textLength="26" lengthAdjust="spacingAndGlyphs">CROSS</text><text x="23" y="45" font-size="7.5" font-weight="bold" fill="#e0e0e0" text-anchor="middle" textLength="31" lengthAdjust="spacingAndGlyphs">SECTION</text><rect x="13" y="14" width="20" height="24" fill="url(#dith_w)"/><g stroke="#e0e0e0" fill="none" stroke-width="1"><path d="M4.5 17.5H29.5V37.5H4.5Z M4.5 17.5L11.5 11.5H36.5L29.5 17.5 M36.5 11.5V31.5L29.5 37.5"/><path d="M13.5 11.5V31.5H36.5 M13.5 31.5L4.5 37.5" stroke-dasharray="1 1"/><path d="M19.5 11.5V37.5"/></g></g>
<!-- mr -->
<rect x="1135" y="420" width="6" height="285" fill="#fff"/>
<rect x="572" y="386" width="563" height="384" fill="#000"/>
<line x1="574" y1="386.5" x2="1135" y2="386.5" stroke="#fff" stroke-dasharray="1 1"/>
<line x1="1134.5" y1="386" x2="1134.5" y2="770" stroke="#fff" stroke-dasharray="1 1"/>
<line x1="574.5" y1="386" x2="574.5" y2="770" stroke="#fff" stroke-dasharray="1 1"/>
<line x1="574" y1="769.5" x2="1045" y2="769.5" stroke="#fff" stroke-dasharray="1 1"/>
<polygon fill="#048014" points="641,683 641,649 694,649 697,646 697,632 733,632 736,629 736,620 750,620 753,617 753,591 892,591 895,588 895,563 1000,563 1003,560 1003,534 1050,534 1050,683"/>
<polygon fill="#04a414" points="641,683 641,649 694,649 697,646 697,632 733,632 736,629 737,629 735,633 731,638 727,645 725,660 724,683"/>
<polygon fill="#04a414" points="839,683 842,670 850,657 865,645 880,640 900,636 920,634 960,634 1000,636 1050,638 1050,683"/>
<polygon fill="#00f014" points="918,683 926,672 945,666 966,663 985,666 1000,670 1050,677 1050,683"/>
<polygon fill="#035014" points="866,591 892,591 895,588 895,563 1003,563 1003,534 1050,534 1050,627 1000,624 960,621 920,615 895,610 880,600"/>
<polygon fill="#b4b4b4" points="895,582 895,563 1000,563 1003,560 1003,534 1050,534 1050,613 1020,610 1000,605 960,595 920,587"/>
<polygon fill="#a84800" points="925,563 1000,563 1003,560 1003,534 1050,534 1050,597 1030,593 1010,589 1000,583 960,575 945,572"/>
<polygon fill="#d49664" points="1003,534 1050,534 1050,568 1020,562 1003,560"/>
<g stroke="#fff" stroke-width="1" fill="none">
<path d="M624.5 413.5V694.5H1050.5V413.5H624.5"/>
<path d="M624.5 442.5h11M1050.5 442.5h-11"/>
<path d="M624.5 470.5h11M1050.5 470.5h-11"/>
<path d="M624.5 498.5h11M1050.5 498.5h-11"/>
<path d="M624.5 526.5h11M1050.5 526.5h-11"/>
<path d="M624.5 554.5h11M1050.5 554.5h-11"/>
<path d="M624.5 582.5h11M1050.5 582.5h-11"/>
<path d="M624.5 610.5h11M1050.5 610.5h-11"/>
<path d="M624.5 638.5h11M1050.5 638.5h-11"/>
<path d="M624.5 666.5h11M1050.5 666.5h-11"/>
<path d="M678.5 413.5v6M678.5 694.5v-6"/>
<path d="M731.5 413.5v6M731.5 694.5v-6"/>
<path d="M784.5 413.5v6M784.5 694.5v-6"/>
<path d="M838.5 413.5v6M838.5 694.5v-6"/>
<path d="M891.5 413.5v6M891.5 694.5v-6"/>
<path d="M944.5 413.5v6M944.5 694.5v-6"/>
<path d="M997.5 413.5v6M997.5 694.5v-6"/>
</g>
<text x="620" y="412.0" font-size="10" fill="#fff" text-anchor="end">20</text>
<text x="620" y="468.3" font-size="10" fill="#fff" text-anchor="end">16</text>
<text x="620" y="524.6" font-size="10" fill="#fff" text-anchor="end">12</text>
<text x="620" y="580.9" font-size="10" fill="#fff" text-anchor="end">8</text>
<text x="620" y="637.2" font-size="10" fill="#fff" text-anchor="end">4</text>
<text x="620" y="693.5" font-size="10" fill="#fff" text-anchor="end">0</text>
<text x="624" y="705" font-size="10" fill="#fff" text-anchor="middle">0.0</text>
<text x="731" y="705" font-size="10" fill="#fff" text-anchor="middle">5.6</text>
<text x="837.5" y="705" font-size="10" fill="#fff" text-anchor="middle">11.1</text>
<text x="944.5" y="705" font-size="10" fill="#fff" text-anchor="middle">16.7</text>
<text x="1040" y="705" font-size="10" fill="#fff">22</text>
<text x="804" y="714" font-size="10" fill="#fff" textLength="67" lengthAdjust="spacingAndGlyphs">Distance in km</text>
<text transform="translate(606,552) rotate(-90)" font-size="12.5" fill="#fff" text-anchor="middle" textLength="94" lengthAdjust="spacingAndGlyphs" style="font-family:Liberation Serif">km above MSL</text>
<text x="584.5" y="404.7" font-size="17" fill="#ffff00" textLength="176" lengthAdjust="spacingAndGlyphs">2-aug-1997,15:05:00</text>
<text x="771.5" y="404.7" font-size="17" fill="#fff" textLength="311.5" lengthAdjust="spacingAndGlyphs" style="white-space:pre">Planar cross-section plot.  Contour of</text>
<text x="584.5" y="430.8" font-size="17" fill="#fff" textLength="227" lengthAdjust="spacingAndGlyphs">radialvelocity using: rhb_3d.</text>
<rect x="1051" y="412" width="84" height="1" fill="#a0a0a0"/>
<text x="1052.5" y="427.7" font-size="12" fill="#fff" textLength="75" lengthAdjust="spacingAndGlyphs">radialvelocity</text>
<rect x="1052" y="436" width="10" height="11" fill="#ff0000"/>
<text x="1067.5" y="445.5" font-size="12" fill="#fff">24.0</text>
<rect x="1052" y="447" width="10" height="11" fill="#d00000"/>
<text x="1067.5" y="456.5" font-size="12" fill="#fff">22.0</text>
<rect x="1052" y="458" width="10" height="11" fill="#880000"/>
<text x="1067.5" y="467.5" font-size="12" fill="#fff">20.0</text>
<rect x="1052" y="469" width="10" height="11" fill="#d84800"/>
<text x="1067.5" y="478.5" font-size="12" fill="#fff">18.0</text>
<rect x="1052" y="480" width="10" height="11" fill="#ff7800"/>
<text x="1067.5" y="489.5" font-size="12" fill="#fff">16.0</text>
<rect x="1052" y="491" width="10" height="11" fill="#ff5a5a"/>
<text x="1067.5" y="500.5" font-size="12" fill="#fff">14.0</text>
<rect x="1052" y="502" width="10" height="11" fill="#ff8c8c"/>
<text x="1067.5" y="511.5" font-size="12" fill="#fff">12.0</text>
<rect x="1052" y="513" width="10" height="11" fill="#ffbebe"/>
<text x="1067.5" y="522.5" font-size="12" fill="#fff">10.0</text>
<rect x="1052" y="524" width="10" height="11" fill="#ffff00"/>
<text x="1067.5" y="533.5" font-size="12" fill="#fff">8.0</text>
<rect x="1052" y="535" width="10" height="11" fill="#ffb428"/>
<text x="1067.5" y="544.5" font-size="12" fill="#fff">6.0</text>
<rect x="1052" y="546" width="10" height="11" fill="#d49664"/>
<text x="1067.5" y="555.5" font-size="12" fill="#fff">4.0</text>
<rect x="1052" y="557" width="10" height="11" fill="#a84800"/>
<text x="1067.5" y="566.5" font-size="12" fill="#fff">2.0</text>
<rect x="1052" y="568" width="10" height="11" fill="#b4b4b4"/>
<text x="1067.5" y="577.5" font-size="12" fill="#fff">0.0</text>
<rect x="1052" y="579" width="10" height="11" fill="#005014"/>
<text x="1065" y="588.5" font-size="12" fill="#fff">&#8211;2.0</text>
<rect x="1052" y="590" width="10" height="11" fill="#008014"/>
<text x="1065" y="599.5" font-size="12" fill="#fff">&#8211;4.0</text>
<rect x="1052" y="601" width="10" height="11" fill="#00a014"/>
<text x="1065" y="610.5" font-size="12" fill="#fff">&#8211;6.0</text>
<rect x="1052" y="612" width="10" height="11" fill="#00f014"/>
<text x="1065" y="621.5" font-size="12" fill="#fff">&#8211;8.0</text>
<rect x="1052" y="623" width="10" height="11" fill="#00c8ff"/>
<text x="1065" y="632.5" font-size="12" fill="#fff">&#8211;10.0</text>
<rect x="1052" y="634" width="10" height="11" fill="#0082ff"/>
<text x="1065" y="643.5" font-size="12" fill="#fff">&#8211;12.0</text>
<rect x="1052" y="645" width="10" height="11" fill="#0000e0"/>
<text x="1065" y="654.5" font-size="12" fill="#fff">&#8211;14.0</text>
<rect x="1052" y="656" width="10" height="11" fill="#0014a0"/>
<text x="1065" y="665.5" font-size="12" fill="#fff">&#8211;16.0</text>
<rect x="1052" y="667" width="10" height="11" fill="#000080"/>
<text x="1065" y="676.5" font-size="12" fill="#fff">&#8211;18.0</text>
<rect x="1052" y="678" width="10" height="11" fill="#8888b8"/>
<text x="1065" y="687.5" font-size="12" fill="#fff">&#8211;20.0</text>
<rect x="1052" y="689" width="10" height="11" fill="#505080"/>
<text x="1065" y="698.5" font-size="12" fill="#fff">&#8211;22.0</text>
<rect x="1052" y="700" width="10" height="11" fill="#787878"/>
<text x="1065" y="709.5" font-size="12" fill="#fff">&#8211;24.0</text>
<rect x="1050" y="719" width="85" height="1" fill="#a0a0a0"/>
<g transform="translate(579,720)"><rect x="0.5" y="0.5" width="45" height="47" fill="#191970" stroke="#a0a0a0" stroke-width="1"/><path d="M7 13.5C11 7,20 8,27 11.5S35 11,38 9.5C28 19,14 30,6.5 40C12 34,20 37,28 40S36 37,39 35" stroke="#ffff00" stroke-width="2" fill="none" shape-rendering="auto"/></g>
<g transform="translate(626,720)"><rect x="0.5" y="0.5" width="45" height="47" fill="#191970" stroke="#a0a0a0" stroke-width="1"/><text x="23" y="8.5" font-size="7.5" font-weight="bold" fill="#ffff00" text-anchor="middle" textLength="26" lengthAdjust="spacingAndGlyphs">CROSS</text><text x="23" y="45" font-size="7.5" font-weight="bold" fill="#ffff00" text-anchor="middle" textLength="31" lengthAdjust="spacingAndGlyphs">SECTION</text><rect x="13" y="14" width="20" height="24" fill="url(#dith_y)"/><g stroke="#ffff00" fill="none" stroke-width="1"><path d="M4.5 17.5H29.5V37.5H4.5Z M4.5 17.5L11.5 11.5H36.5L29.5 17.5 M36.5 11.5V31.5L29.5 37.5"/><path d="M13.5 11.5V31.5H36.5 M13.5 31.5L4.5 37.5" stroke-dasharray="1 1"/><path d="M19.5 11.5V37.5"/></g></g>
<g transform="translate(673,720)"><rect x="0.5" y="0.5" width="45" height="47" fill="#6a6a6a" stroke="#a0a0a0" stroke-width="1"/><text x="23" y="8.5" font-size="7.5" font-weight="bold" fill="#e0e0e0" text-anchor="middle" textLength="26" lengthAdjust="spacingAndGlyphs">CROSS</text><text x="23" y="45" font-size="7.5" font-weight="bold" fill="#e0e0e0" text-anchor="middle" textLength="31" lengthAdjust="spacingAndGlyphs">SECTION</text><rect x="13" y="14" width="20" height="24" fill="url(#dith_w)"/><g stroke="#e0e0e0" fill="none" stroke-width="1"><path d="M4.5 17.5H29.5V37.5H4.5Z M4.5 17.5L11.5 11.5H36.5L29.5 17.5 M36.5 11.5V31.5L29.5 37.5"/><path d="M13.5 11.5V31.5H36.5 M13.5 31.5L4.5 37.5" stroke-dasharray="1 1"/><path d="M19.5 11.5V37.5"/></g></g>
<g transform="translate(720,720)"><rect x="0.5" y="0.5" width="45" height="47" fill="#6a6a6a" stroke="#a0a0a0" stroke-width="1"/><text x="23" y="8.5" font-size="7.5" font-weight="bold" fill="#e0e0e0" text-anchor="middle" textLength="26" lengthAdjust="spacingAndGlyphs">CROSS</text><text x="23" y="45" font-size="7.5" font-weight="bold" fill="#e0e0e0" text-anchor="middle" textLength="31" lengthAdjust="spacingAndGlyphs">SECTION</text><rect x="13" y="14" width="20" height="24" fill="url(#dith_w)"/><g stroke="#e0e0e0" fill="none" stroke-width="1"><path d="M4.5 17.5H29.5V37.5H4.5Z M4.5 17.5L11.5 11.5H36.5L29.5 17.5 M36.5 11.5V31.5L29.5 37.5"/><path d="M13.5 11.5V31.5H36.5 M13.5 31.5L4.5 37.5" stroke-dasharray="1 1"/><path d="M19.5 11.5V37.5"/></g></g>
<!-- bl -->
<rect x="0" y="426" width="573" height="445" fill="#000"/>
<line x1="3" y1="426.5" x2="573" y2="426.5" stroke="#fff" stroke-dasharray="1 1"/>
<line x1="2.5" y1="426" x2="2.5" y2="871" stroke="#fff" stroke-dasharray="1 1"/>
<line x1="572.5" y1="426" x2="572.5" y2="871" stroke="#fff" stroke-dasharray="1 1"/>
<line x1="3" y1="870.5" x2="573" y2="870.5" stroke="#fff" stroke-dasharray="1 1"/>
<rect x="0" y="426" width="2" height="474" fill="#0000cd"/>
<g>
<rect x="280.0" y="462.0" width="14.0" height="8.0" fill="#006e4b"/>
<rect x="280.0" y="466.0" width="3.0" height="4.0" fill="#00e696"/>
<rect x="261.0" y="462.0" width="11.0" height="5.0" fill="#006e4b"/>
<rect x="308.0" y="464.0" width="10.0" height="2.0" fill="#006e4b"/>
<rect x="213.0" y="475.0" width="8.0" height="6.0" fill="#006e4b"/>
<rect x="213.0" y="478.0" width="3.0" height="3.0" fill="#00e696"/>
<rect x="218.0" y="478.0" width="3.0" height="3.0" fill="#00e696"/>
<rect x="247.0" y="481.0" width="11.0" height="11.0" fill="#006e4b"/>
<rect x="249.0" y="481.0" width="6.0" height="3.0" fill="#00e696"/>
<polygon fill="#00e696" points="247,492 272,492 272,500 265,505 258,508 252,518 251,523 242,523 238,516 238,502 243,497"/>
<rect x="243.5" y="506.0" width="8.5" height="13.0" fill="#006e4b"/>
<rect x="263.0" y="495.0" width="4.0" height="3.0" fill="#006e4b"/>
<polygon fill="#00e696" points="216,510 222,506 233,506 233,516 228,519 220,519 216,514"/>
<polygon fill="#00e696" points="188,515 195,513 201,517 198,525 193,527 191,535 185,539 182,531 186,525"/>
<polygon fill="#00e696" points="291,508 294,503 297,503 300,508 300,515 291,515"/>
<polygon fill="#006e4b" points="318,475 324,475 326,468 330,468 330,491 325,491 321,488 314,487 314,479"/>
<rect x="317.0" y="475.0" width="4.0" height="4.0" fill="#00e696"/>
<rect x="314.0" y="479.0" width="3.0" height="6.0" fill="#00e696"/>
<rect x="326.0" y="470.0" width="2.0" height="2.0" fill="#c8c8c8"/>
<rect x="328.0" y="470.0" width="14.0" height="22.0" fill="#c8c8c8"/>
<rect x="314.0" y="474.0" width="14.0" height="21.0" fill="#006e4b"/>
<rect x="342.0" y="475.0" width="14.0" height="5.0" fill="#006e4b"/>
<rect x="338.0" y="488.0" width="6.0" height="7.0" fill="#006e4b"/>
<rect x="322.0" y="476.0" width="6.0" height="4.0" fill="#00e696"/>
<rect x="356.0" y="485.0" width="14.0" height="16.0" fill="#006e4b"/>
<rect x="356.0" y="485.0" width="4.0" height="4.0" fill="#00e696"/>
<polygon fill="#006e4b" points="317,498 333,498 347,515 347,523 330,523 317,505"/>
<rect x="333.0" y="506.0" width="6.0" height="6.0" fill="#c8c8c8"/>
<rect x="339.0" y="515.0" width="6.0" height="7.0" fill="#c8c8c8"/>
<rect x="322.0" y="511.0" width="4.0" height="4.0" fill="#00e696"/>
<rect x="330.0" y="519.0" width="5.0" height="4.0" fill="#00e696"/>
<rect x="317.0" y="498.0" width="3.0" height="7.0" fill="#00e696"/>
<rect x="386.0" y="509.0" width="2.0" height="3.0" fill="#00e696"/>
<rect x="276.0" y="526.0" width="7.0" height="19.0" fill="#00e696"/>
<rect x="276.0" y="530.0" width="3.0" height="5.0" fill="#006e4b"/>
<rect x="289.0" y="531.0" width="5.0" height="6.0" fill="#00e696"/>
<rect x="322.0" y="534.0" width="17.0" height="24.0" fill="#00e696"/>
<rect x="325.0" y="537.0" width="7.0" height="10.0" fill="#006e4b"/>
<rect x="331.0" y="547.0" width="5.0" height="9.0" fill="#c8c8c8"/>
<polygon fill="#00e696" points="339,529 349,529 350,533 339,534"/>
<polygon fill="#c8c8c8" points="340,532 348,532 358,544 358,553 351,553 340,541"/>
<rect x="350.0" y="545.0" width="7.0" height="7.0" fill="#d89436"/>
<polygon fill="#006e4b" points="357,537 366,537 367,546 362,548 357,546"/>
<rect x="352.0" y="552.0" width="4.0" height="3.0" fill="#00e696"/>
<rect x="381.0" y="537.0" width="8.0" height="6.0" fill="#00e696"/>
<rect x="398.0" y="545.0" width="11.0" height="12.0" fill="#006e4b"/>
<rect x="400.0" y="557.0" width="7.0" height="3.0" fill="#00e696"/>
<rect x="364.0" y="551.0" width="14.0" height="10.0" fill="#c8c8c8"/>
<rect x="367.0" y="554.0" width="6.0" height="7.0" fill="#d89436"/>
<rect x="373.0" y="555.0" width="4.0" height="6.0" fill="#006e4b"/>
<rect x="238.0" y="531.0" width="9.0" height="16.0" fill="#006e4b"/>
<rect x="238.0" y="531.0" width="4.0" height="3.0" fill="#00e696"/>
<rect x="238.0" y="541.0" width="3.0" height="6.0" fill="#00e696"/>
<polygon fill="#00e696" points="262,526 276,526 280,530 283,530 283,534 280,535 280,546 268,547 259,546 255,541 258,536 262,531"/>
<polygon fill="#006e4b" points="265,530 272,530 277,533 277,545 270,545 263,541 265,535"/>
<rect x="272.0" y="530.0" width="3.0" height="4.0" fill="#c8c8c8"/>
<rect x="263.0" y="540.0" width="9.0" height="4.0" fill="#c8c8c8"/>
<rect x="258.0" y="536.0" width="2.0" height="2.0" fill="#c8c8c8"/>
<rect x="148.6" y="507.0" width="13.8" height="18.0" fill="#006e4b"/>
<rect x="150.0" y="517.0" width="5.0" height="8.0" fill="#00e696"/>
<rect x="165.0" y="568.0" width="6.0" height="5.0" fill="#00e696"/>
<rect x="191.0" y="573.0" width="11.0" height="14.0" fill="#006e4b"/>
<rect x="193.0" y="573.0" width="6.0" height="3.0" fill="#00e696"/>
<rect x="191.0" y="584.0" width="5.0" height="3.0" fill="#00e696"/>
<rect x="188.0" y="593.0" width="5.0" height="8.0" fill="#006e4b"/>
<rect x="188.0" y="599.0" width="5.0" height="2.0" fill="#00e696"/>
<rect x="205.0" y="570.0" width="8.0" height="7.0" fill="#00e696"/>
<rect x="205.0" y="573.0" width="2.0" height="4.0" fill="#00b4e6"/>
<rect x="215.0" y="566.0" width="6.5" height="5.0" fill="#00b4e6"/>
<rect x="217.0" y="567.0" width="3.0" height="3.0" fill="#00e696"/>
<rect x="199.0" y="585.5" width="5.5" height="7.5" fill="#00b4e6"/>
<rect x="239" y="563" width="1" height="1" fill="#00e696"/>
<rect x="240" y="563" width="1" height="1" fill="#00b4e6"/>
<rect x="241" y="563" width="1" height="1" fill="#00e696"/>
<rect x="242" y="563" width="1" height="1" fill="#00b4e6"/>
<rect x="243" y="563" width="1" height="1" fill="#00e696"/>
<rect x="244" y="563" width="1" height="1" fill="#00b4e6"/>
<rect x="245" y="563" width="1" height="1" fill="#00b4e6"/>
<rect x="246" y="563" width="1" height="1" fill="#00e696"/>
<rect x="239" y="564" width="1" height="1" fill="#00e696"/>
<rect x="241" y="564" width="1" height="1" fill="#00e696"/>
<rect x="242" y="564" width="1" height="1" fill="#00e696"/>
<rect x="243" y="564" width="1" height="1" fill="#00e696"/>
<rect x="244" y="564" width="1" height="1" fill="#00e696"/>
<rect x="246" y="564" width="1" height="1" fill="#00b4e6"/>
<rect x="241" y="565" width="1" height="1" fill="#00b4e6"/>
<rect x="243" y="565" width="1" height="1" fill="#00b4e6"/>
<rect x="244" y="565" width="1" height="1" fill="#00e696"/>
<rect x="245" y="565" width="1" height="1" fill="#00b4e6"/>
<rect x="239" y="566" width="1" height="1" fill="#00b4e6"/>
<rect x="240" y="566" width="1" height="1" fill="#00b4e6"/>
<rect x="241" y="566" width="1" height="1" fill="#00b4e6"/>
<rect x="242" y="566" width="1" height="1" fill="#00b4e6"/>
<rect x="243" y="566" width="1" height="1" fill="#00e696"/>
<rect x="246" y="566" width="1" height="1" fill="#00e696"/>
<rect x="239" y="567" width="1" height="1" fill="#00b4e6"/>
<rect x="242" y="567" width="1" height="1" fill="#00e696"/>
<rect x="243" y="567" width="1" height="1" fill="#00b4e6"/>
<rect x="244" y="567" width="1" height="1" fill="#00e696"/>
<rect x="245" y="567" width="1" height="1" fill="#00b4e6"/>
<rect x="246" y="567" width="1" height="1" fill="#00e696"/>
<rect x="239" y="568" width="1" height="1" fill="#00e696"/>
<rect x="240" y="568" width="1" height="1" fill="#00b4e6"/>
<rect x="243" y="568" width="1" height="1" fill="#00e696"/>
<rect x="244" y="568" width="1" height="1" fill="#00b4e6"/>
<rect x="245" y="568" width="1" height="1" fill="#00b4e6"/>
<rect x="246" y="568" width="1" height="1" fill="#00e696"/>
<rect x="239" y="569" width="1" height="1" fill="#00e696"/>
<rect x="240" y="569" width="1" height="1" fill="#00e696"/>
<rect x="243" y="569" width="1" height="1" fill="#00b4e6"/>
<rect x="244" y="569" width="1" height="1" fill="#00e696"/>
<rect x="246" y="569" width="1" height="1" fill="#00b4e6"/>
<rect x="241" y="570" width="1" height="1" fill="#00b4e6"/>
<rect x="243" y="570" width="1" height="1" fill="#00e696"/>
<rect x="244" y="570" width="1" height="1" fill="#00b4e6"/>
<rect x="245" y="570" width="1" height="1" fill="#00e696"/>
<rect x="239" y="571" width="1" height="1" fill="#00b4e6"/>
<rect x="240" y="571" width="1" height="1" fill="#00b4e6"/>
<rect x="241" y="571" width="1" height="1" fill="#00b4e6"/>
<rect x="243" y="571" width="1" height="1" fill="#00b4e6"/>
<rect x="244" y="571" width="1" height="1" fill="#00e696"/>
<rect x="245" y="571" width="1" height="1" fill="#00b4e6"/>
<rect x="246" y="571" width="1" height="1" fill="#00b4e6"/>
<rect x="239" y="572" width="1" height="1" fill="#00b4e6"/>
<rect x="241" y="572" width="1" height="1" fill="#00e696"/>
<rect x="243" y="572" width="1" height="1" fill="#00b4e6"/>
<rect x="244" y="572" width="1" height="1" fill="#00b4e6"/>
<rect x="245" y="572" width="1" height="1" fill="#00b4e6"/>
<rect x="246" y="572" width="1" height="1" fill="#00e696"/>
<rect x="239" y="573" width="1" height="1" fill="#00b4e6"/>
<rect x="241" y="573" width="1" height="1" fill="#00b4e6"/>
<rect x="242" y="573" width="1" height="1" fill="#00e696"/>
<rect x="244" y="573" width="1" height="1" fill="#00e696"/>
<rect x="245" y="573" width="1" height="1" fill="#00e696"/>
<rect x="246" y="573" width="1" height="1" fill="#00b4e6"/>
<rect x="239" y="574" width="1" height="1" fill="#00e696"/>
<rect x="240" y="574" width="1" height="1" fill="#00e696"/>
<rect x="241" y="574" width="1" height="1" fill="#00b4e6"/>
<rect x="243" y="574" width="1" height="1" fill="#00e696"/>
<rect x="244" y="574" width="1" height="1" fill="#00e696"/>
<rect x="245" y="574" width="1" height="1" fill="#00e696"/>
<rect x="239" y="575" width="1" height="1" fill="#00e696"/>
<rect x="241" y="575" width="1" height="1" fill="#00e696"/>
<rect x="242" y="575" width="1" height="1" fill="#00e696"/>
<rect x="244" y="575" width="1" height="1" fill="#00e696"/>
<rect x="246" y="575" width="1" height="1" fill="#00e696"/>
<rect x="239" y="576" width="1" height="1" fill="#00b4e6"/>
<rect x="240" y="576" width="1" height="1" fill="#00b4e6"/>
<rect x="241" y="576" width="1" height="1" fill="#00b4e6"/>
<rect x="242" y="576" width="1" height="1" fill="#00b4e6"/>
<rect x="243" y="576" width="1" height="1" fill="#00e696"/>
<rect x="244" y="576" width="1" height="1" fill="#00b4e6"/>
<rect x="245" y="576" width="1" height="1" fill="#00e696"/>
<rect x="246" y="576" width="1" height="1" fill="#00b4e6"/>
<rect x="240" y="577" width="1" height="1" fill="#00b4e6"/>
<rect x="241" y="577" width="1" height="1" fill="#00e696"/>
<rect x="245" y="577" width="1" height="1" fill="#00e696"/>
<rect x="246" y="577" width="1" height="1" fill="#00e696"/>
<rect x="241" y="578" width="1" height="1" fill="#00e696"/>
<rect x="242" y="578" width="1" height="1" fill="#00e696"/>
<rect x="243" y="578" width="1" height="1" fill="#00b4e6"/>
<rect x="244" y="578" width="1" height="1" fill="#00e696"/>
<rect x="245" y="578" width="1" height="1" fill="#00b4e6"/>
<rect x="246" y="578" width="1" height="1" fill="#00e696"/>
<rect x="239" y="579" width="1" height="1" fill="#00b4e6"/>
<rect x="241" y="579" width="1" height="1" fill="#00e696"/>
<rect x="242" y="579" width="1" height="1" fill="#00e696"/>
<rect x="243" y="579" width="1" height="1" fill="#00e696"/>
<rect x="244" y="579" width="1" height="1" fill="#00b4e6"/>
<rect x="240" y="580" width="1" height="1" fill="#00b4e6"/>
<rect x="241" y="580" width="1" height="1" fill="#00b4e6"/>
<rect x="242" y="580" width="1" height="1" fill="#00b4e6"/>
<rect x="243" y="580" width="1" height="1" fill="#00b4e6"/>
<rect x="245" y="580" width="1" height="1" fill="#00e696"/>
<rect x="239" y="581" width="1" height="1" fill="#00e696"/>
<rect x="240" y="581" width="1" height="1" fill="#00e696"/>
<rect x="242" y="581" width="1" height="1" fill="#00b4e6"/>
<rect x="243" y="581" width="1" height="1" fill="#00b4e6"/>
<rect x="244" y="581" width="1" height="1" fill="#00b4e6"/>
<rect x="245" y="581" width="1" height="1" fill="#00b4e6"/>
<rect x="246" y="581" width="1" height="1" fill="#00e696"/>
<rect x="240" y="582" width="1" height="1" fill="#00e696"/>
<rect x="241" y="582" width="1" height="1" fill="#00b4e6"/>
<rect x="243" y="582" width="1" height="1" fill="#00e696"/>
<rect x="244" y="582" width="1" height="1" fill="#00b4e6"/>
<rect x="245" y="582" width="1" height="1" fill="#00e696"/>
<rect x="246" y="582" width="1" height="1" fill="#00b4e6"/>
<rect x="243.5" y="566.0" width="5.5" height="5.0" fill="#006e4b"/>
<rect x="237" y="563" width="1" height="1" fill="#00b4e6"/>
<rect x="239" y="563" width="1" height="1" fill="#00b4e6"/>
<rect x="237" y="564" width="1" height="1" fill="#00b4e6"/>
<rect x="238" y="564" width="1" height="1" fill="#00b4e6"/>
<rect x="239" y="564" width="1" height="1" fill="#00b4e6"/>
<rect x="238" y="565" width="1" height="1" fill="#00b4e6"/>
<rect x="249.0" y="564.0" width="6.0" height="6.0" fill="#eab428"/>
<rect x="254.0" y="564.0" width="2.0" height="5.0" fill="#c8c8c8"/>
<rect x="232.0" y="564.0" width="4.0" height="3.0" fill="#00b4e6"/>
<polygon fill="#00e696" points="259,582 263,580 272,587 272,590 268,590 259,585"/>
<rect x="263.0" y="583.0" width="5.0" height="3.0" fill="#006e4b"/>
<rect x="249" y="585" width="1" height="1" fill="#00e696"/>
<rect x="251" y="585" width="1" height="1" fill="#00b4e6"/>
<rect x="252" y="585" width="1" height="1" fill="#00e696"/>
<rect x="253" y="585" width="1" height="1" fill="#00e696"/>
<rect x="248" y="586" width="1" height="1" fill="#00e696"/>
<rect x="249" y="586" width="1" height="1" fill="#00e696"/>
<rect x="250" y="586" width="1" height="1" fill="#00e696"/>
<rect x="251" y="586" width="1" height="1" fill="#00b4e6"/>
<rect x="252" y="586" width="1" height="1" fill="#00b4e6"/>
<rect x="253" y="586" width="1" height="1" fill="#00b4e6"/>
<rect x="254" y="586" width="1" height="1" fill="#00e696"/>
<rect x="249" y="587" width="1" height="1" fill="#00b4e6"/>
<rect x="250" y="587" width="1" height="1" fill="#00b4e6"/>
<rect x="251" y="587" width="1" height="1" fill="#00b4e6"/>
<rect x="252" y="587" width="1" height="1" fill="#00e696"/>
<rect x="254" y="587" width="1" height="1" fill="#00b4e6"/>
<rect x="248" y="588" width="1" height="1" fill="#00e696"/>
<rect x="249" y="588" width="1" height="1" fill="#00e696"/>
<rect x="250" y="588" width="1" height="1" fill="#00e696"/>
<rect x="251" y="588" width="1" height="1" fill="#00e696"/>
<rect x="252" y="588" width="1" height="1" fill="#00b4e6"/>
<rect x="254" y="588" width="1" height="1" fill="#00b4e6"/>
<rect x="248" y="589" width="1" height="1" fill="#00b4e6"/>
<rect x="249" y="589" width="1" height="1" fill="#00b4e6"/>
<rect x="250" y="589" width="1" height="1" fill="#00b4e6"/>
<rect x="251" y="589" width="1" height="1" fill="#00e696"/>
<rect x="252" y="589" width="1" height="1" fill="#00b4e6"/>
<rect x="253" y="589" width="1" height="1" fill="#00b4e6"/>
<rect x="254" y="589" width="1" height="1" fill="#00b4e6"/>
<rect x="249" y="590" width="1" height="1" fill="#00e696"/>
<rect x="251" y="590" width="1" height="1" fill="#00e696"/>
<rect x="253" y="590" width="1" height="1" fill="#00e696"/>
<rect x="254" y="590" width="1" height="1" fill="#00b4e6"/>
<rect x="248" y="591" width="1" height="1" fill="#00b4e6"/>
<rect x="249" y="591" width="1" height="1" fill="#00b4e6"/>
<rect x="250" y="591" width="1" height="1" fill="#00e696"/>
<rect x="251" y="591" width="1" height="1" fill="#00b4e6"/>
<rect x="252" y="591" width="1" height="1" fill="#00b4e6"/>
<rect x="253" y="591" width="1" height="1" fill="#00b4e6"/>
<rect x="254" y="591" width="1" height="1" fill="#00e696"/>
<rect x="248" y="592" width="1" height="1" fill="#00b4e6"/>
<rect x="250" y="592" width="1" height="1" fill="#00b4e6"/>
<rect x="251" y="592" width="1" height="1" fill="#00b4e6"/>
<rect x="252" y="592" width="1" height="1" fill="#00e696"/>
<rect x="253" y="592" width="1" height="1" fill="#00b4e6"/>
<rect x="248" y="593" width="1" height="1" fill="#00b4e6"/>
<rect x="249" y="593" width="1" height="1" fill="#00b4e6"/>
<rect x="250" y="593" width="1" height="1" fill="#00e696"/>
<rect x="251" y="593" width="1" height="1" fill="#00b4e6"/>
<rect x="252" y="593" width="1" height="1" fill="#00b4e6"/>
<rect x="253" y="593" width="1" height="1" fill="#00e696"/>
<rect x="254" y="593" width="1" height="1" fill="#00e696"/>
<rect x="248" y="594" width="1" height="1" fill="#00e696"/>
<rect x="251" y="594" width="1" height="1" fill="#00b4e6"/>
<rect x="253" y="594" width="1" height="1" fill="#00b4e6"/>
<rect x="250.0" y="592.0" width="4.0" height="2.0" fill="#d89436"/>
<rect x="260" y="590" width="1" height="1" fill="#00b4e6"/>
<rect x="262" y="590" width="1" height="1" fill="#00b4e6"/>
<rect x="261" y="591" width="1" height="1" fill="#00b4e6"/>
<rect x="259" y="592" width="1" height="1" fill="#00b4e6"/>
<rect x="261" y="592" width="1" height="1" fill="#00b4e6"/>
<rect x="262" y="592" width="1" height="1" fill="#0078e6"/>
<rect x="259" y="593" width="1" height="1" fill="#00b4e6"/>
<rect x="260" y="593" width="1" height="1" fill="#0078e6"/>
<rect x="262" y="593" width="1" height="1" fill="#0078e6"/>
<rect x="259" y="594" width="1" height="1" fill="#0078e6"/>
<rect x="260" y="594" width="1" height="1" fill="#0078e6"/>
<rect x="261" y="594" width="1" height="1" fill="#0078e6"/>
<rect x="262" y="594" width="1" height="1" fill="#00b4e6"/>
<rect x="259" y="595" width="1" height="1" fill="#0078e6"/>
<rect x="260" y="595" width="1" height="1" fill="#0078e6"/>
<rect x="261" y="595" width="1" height="1" fill="#0078e6"/>
<rect x="262" y="595" width="1" height="1" fill="#0078e6"/>
<rect x="259" y="596" width="1" height="1" fill="#0078e6"/>
<rect x="260" y="596" width="1" height="1" fill="#0078e6"/>
<rect x="261" y="596" width="1" height="1" fill="#0078e6"/>
<rect x="267" y="594" width="1" height="1" fill="#00b4e6"/>
<rect x="268" y="594" width="1" height="1" fill="#0078e6"/>
<rect x="269" y="594" width="1" height="1" fill="#0078e6"/>
<rect x="270" y="594" width="1" height="1" fill="#00b4e6"/>
<rect x="271" y="594" width="1" height="1" fill="#00b4e6"/>
<rect x="272" y="594" width="1" height="1" fill="#0078e6"/>
<rect x="273" y="594" width="1" height="1" fill="#0078e6"/>
<rect x="274" y="594" width="1" height="1" fill="#00b4e6"/>
<rect x="275" y="594" width="1" height="1" fill="#00b4e6"/>
<rect x="276" y="594" width="1" height="1" fill="#00b4e6"/>
<rect x="277" y="594" width="1" height="1" fill="#0078e6"/>
<rect x="279" y="594" width="1" height="1" fill="#00b4e6"/>
<rect x="267" y="595" width="1" height="1" fill="#00b4e6"/>
<rect x="268" y="595" width="1" height="1" fill="#0078e6"/>
<rect x="269" y="595" width="1" height="1" fill="#00b4e6"/>
<rect x="270" y="595" width="1" height="1" fill="#00b4e6"/>
<rect x="271" y="595" width="1" height="1" fill="#00b4e6"/>
<rect x="272" y="595" width="1" height="1" fill="#0078e6"/>
<rect x="274" y="595" width="1" height="1" fill="#00b4e6"/>
<rect x="275" y="595" width="1" height="1" fill="#00b4e6"/>
<rect x="276" y="595" width="1" height="1" fill="#00b4e6"/>
<rect x="277" y="595" width="1" height="1" fill="#00b4e6"/>
<rect x="278" y="595" width="1" height="1" fill="#0078e6"/>
<rect x="279" y="595" width="1" height="1" fill="#00b4e6"/>
<rect x="267" y="596" width="1" height="1" fill="#00b4e6"/>
<rect x="268" y="596" width="1" height="1" fill="#00b4e6"/>
<rect x="270" y="596" width="1" height="1" fill="#0078e6"/>
<rect x="272" y="596" width="1" height="1" fill="#00b4e6"/>
<rect x="273" y="596" width="1" height="1" fill="#00b4e6"/>
<rect x="274" y="596" width="1" height="1" fill="#00b4e6"/>
<rect x="275" y="596" width="1" height="1" fill="#00b4e6"/>
<rect x="276" y="596" width="1" height="1" fill="#00b4e6"/>
<rect x="277" y="596" width="1" height="1" fill="#00b4e6"/>
<rect x="278" y="596" width="1" height="1" fill="#0078e6"/>
<rect x="279" y="596" width="1" height="1" fill="#0078e6"/>
<rect x="268" y="597" width="1" height="1" fill="#00b4e6"/>
<rect x="269" y="597" width="1" height="1" fill="#0078e6"/>
<rect x="271" y="597" width="1" height="1" fill="#00b4e6"/>
<rect x="272" y="597" width="1" height="1" fill="#00b4e6"/>
<rect x="274" y="597" width="1" height="1" fill="#0078e6"/>
<rect x="275" y="597" width="1" height="1" fill="#0078e6"/>
<rect x="278" y="597" width="1" height="1" fill="#00b4e6"/>
<rect x="267" y="598" width="1" height="1" fill="#0078e6"/>
<rect x="269" y="598" width="1" height="1" fill="#0078e6"/>
<rect x="271" y="598" width="1" height="1" fill="#00b4e6"/>
<rect x="272" y="598" width="1" height="1" fill="#00b4e6"/>
<rect x="273" y="598" width="1" height="1" fill="#00b4e6"/>
<rect x="275" y="598" width="1" height="1" fill="#0078e6"/>
<rect x="276" y="598" width="1" height="1" fill="#00b4e6"/>
<rect x="277" y="598" width="1" height="1" fill="#00b4e6"/>
<rect x="279" y="598" width="1" height="1" fill="#00b4e6"/>
<rect x="269" y="599" width="1" height="1" fill="#0078e6"/>
<rect x="272" y="599" width="1" height="1" fill="#00b4e6"/>
<rect x="273" y="599" width="1" height="1" fill="#00b4e6"/>
<rect x="274" y="599" width="1" height="1" fill="#00b4e6"/>
<rect x="275" y="599" width="1" height="1" fill="#00b4e6"/>
<rect x="276" y="599" width="1" height="1" fill="#00b4e6"/>
<rect x="278" y="599" width="1" height="1" fill="#0078e6"/>
<rect x="279" y="599" width="1" height="1" fill="#00b4e6"/>
<rect x="267" y="600" width="1" height="1" fill="#00b4e6"/>
<rect x="269" y="600" width="1" height="1" fill="#00b4e6"/>
<rect x="270" y="600" width="1" height="1" fill="#0078e6"/>
<rect x="272" y="600" width="1" height="1" fill="#00b4e6"/>
<rect x="274" y="600" width="1" height="1" fill="#00b4e6"/>
<rect x="275" y="600" width="1" height="1" fill="#00b4e6"/>
<rect x="277" y="600" width="1" height="1" fill="#00b4e6"/>
<rect x="278" y="600" width="1" height="1" fill="#0078e6"/>
<rect x="279" y="600" width="1" height="1" fill="#00b4e6"/>
<rect x="267" y="601" width="1" height="1" fill="#0078e6"/>
<rect x="268" y="601" width="1" height="1" fill="#0078e6"/>
<rect x="269" y="601" width="1" height="1" fill="#0078e6"/>
<rect x="270" y="601" width="1" height="1" fill="#00b4e6"/>
<rect x="271" y="601" width="1" height="1" fill="#00b4e6"/>
<rect x="272" y="601" width="1" height="1" fill="#00b4e6"/>
<rect x="273" y="601" width="1" height="1" fill="#0078e6"/>
<rect x="275" y="601" width="1" height="1" fill="#0078e6"/>
<rect x="276" y="601" width="1" height="1" fill="#00b4e6"/>
<rect x="279" y="601" width="1" height="1" fill="#0078e6"/>
<rect x="267" y="602" width="1" height="1" fill="#0078e6"/>
<rect x="268" y="602" width="1" height="1" fill="#00b4e6"/>
<rect x="269" y="602" width="1" height="1" fill="#00b4e6"/>
<rect x="270" y="602" width="1" height="1" fill="#00b4e6"/>
<rect x="271" y="602" width="1" height="1" fill="#00b4e6"/>
<rect x="272" y="602" width="1" height="1" fill="#00b4e6"/>
<rect x="273" y="602" width="1" height="1" fill="#0078e6"/>
<rect x="274" y="602" width="1" height="1" fill="#00b4e6"/>
<rect x="275" y="602" width="1" height="1" fill="#0078e6"/>
<rect x="276" y="602" width="1" height="1" fill="#00b4e6"/>
<rect x="277" y="602" width="1" height="1" fill="#00b4e6"/>
<rect x="278" y="602" width="1" height="1" fill="#0078e6"/>
<rect x="279" y="602" width="1" height="1" fill="#00b4e6"/>
<rect x="267" y="603" width="1" height="1" fill="#0078e6"/>
<rect x="268" y="603" width="1" height="1" fill="#00b4e6"/>
<rect x="269" y="603" width="1" height="1" fill="#00b4e6"/>
<rect x="270" y="603" width="1" height="1" fill="#00b4e6"/>
<rect x="271" y="603" width="1" height="1" fill="#00b4e6"/>
<rect x="272" y="603" width="1" height="1" fill="#0078e6"/>
<rect x="275" y="603" width="1" height="1" fill="#00b4e6"/>
<rect x="276" y="603" width="1" height="1" fill="#0078e6"/>
<rect x="277" y="603" width="1" height="1" fill="#0078e6"/>
<rect x="278" y="603" width="1" height="1" fill="#00b4e6"/>
<rect x="279" y="603" width="1" height="1" fill="#00b4e6"/>
<rect x="267" y="604" width="1" height="1" fill="#00b4e6"/>
<rect x="268" y="604" width="1" height="1" fill="#00b4e6"/>
<rect x="269" y="604" width="1" height="1" fill="#00b4e6"/>
<rect x="270" y="604" width="1" height="1" fill="#0078e6"/>
<rect x="271" y="604" width="1" height="1" fill="#00b4e6"/>
<rect x="272" y="604" width="1" height="1" fill="#0078e6"/>
<rect x="273" y="604" width="1" height="1" fill="#0078e6"/>
<rect x="274" y="604" width="1" height="1" fill="#0078e6"/>
<rect x="277" y="604" width="1" height="1" fill="#0078e6"/>
<rect x="279" y="604" width="1" height="1" fill="#0078e6"/>
<rect x="267" y="605" width="1" height="1" fill="#0078e6"/>
<rect x="268" y="605" width="1" height="1" fill="#0078e6"/>
<rect x="269" y="605" width="1" height="1" fill="#0078e6"/>
<rect x="270" y="605" width="1" height="1" fill="#00b4e6"/>
<rect x="271" y="605" width="1" height="1" fill="#0078e6"/>
<rect x="272" y="605" width="1" height="1" fill="#00b4e6"/>
<rect x="274" y="605" width="1" height="1" fill="#00b4e6"/>
<rect x="275" y="605" width="1" height="1" fill="#00b4e6"/>
<rect x="276" y="605" width="1" height="1" fill="#0078e6"/>
<rect x="277" y="605" width="1" height="1" fill="#0078e6"/>
<rect x="279" y="605" width="1" height="1" fill="#0078e6"/>
<rect x="268" y="606" width="1" height="1" fill="#00b4e6"/>
<rect x="270" y="606" width="1" height="1" fill="#0078e6"/>
<rect x="271" y="606" width="1" height="1" fill="#00b4e6"/>
<rect x="272" y="606" width="1" height="1" fill="#00b4e6"/>
<rect x="274" y="606" width="1" height="1" fill="#00b4e6"/>
<rect x="275" y="606" width="1" height="1" fill="#00b4e6"/>
<rect x="276" y="606" width="1" height="1" fill="#00b4e6"/>
<rect x="278" y="606" width="1" height="1" fill="#00b4e6"/>
<rect x="267" y="607" width="1" height="1" fill="#00b4e6"/>
<rect x="268" y="607" width="1" height="1" fill="#0078e6"/>
<rect x="269" y="607" width="1" height="1" fill="#00b4e6"/>
<rect x="270" y="607" width="1" height="1" fill="#00b4e6"/>
<rect x="271" y="607" width="1" height="1" fill="#0078e6"/>
<rect x="272" y="607" width="1" height="1" fill="#00b4e6"/>
<rect x="274" y="607" width="1" height="1" fill="#00b4e6"/>
<rect x="275" y="607" width="1" height="1" fill="#00b4e6"/>
<rect x="277" y="607" width="1" height="1" fill="#00b4e6"/>
<rect x="278" y="607" width="1" height="1" fill="#0078e6"/>
<rect x="275.0" y="597.0" width="4.0" height="7.0" fill="#d89436"/>
<rect x="270" y="594" width="1" height="1" fill="#00e696"/>
<rect x="271" y="594" width="1" height="1" fill="#00e696"/>
<rect x="273" y="594" width="1" height="1" fill="#00e696"/>
<rect x="270" y="595" width="1" height="1" fill="#00e696"/>
<rect x="271" y="595" width="1" height="1" fill="#00e696"/>
<rect x="272" y="595" width="1" height="1" fill="#00e696"/>
<rect x="273" y="595" width="1" height="1" fill="#00e696"/>
<rect x="270" y="596" width="1" height="1" fill="#00e696"/>
<rect x="271" y="596" width="1" height="1" fill="#00e696"/>
<rect x="272" y="596" width="1" height="1" fill="#00e696"/>
<rect x="273" y="596" width="1" height="1" fill="#00e696"/>
<rect x="271" y="597" width="1" height="1" fill="#00e696"/>
<rect x="273" y="597" width="1" height="1" fill="#00e696"/>
<rect x="270" y="598" width="1" height="1" fill="#00e696"/>
<rect x="271" y="598" width="1" height="1" fill="#00e696"/>
<rect x="272" y="598" width="1" height="1" fill="#00e696"/>
<rect x="270" y="599" width="1" height="1" fill="#00e696"/>
<rect x="271" y="599" width="1" height="1" fill="#00e696"/>
<rect x="272" y="599" width="1" height="1" fill="#00e696"/>
<rect x="273" y="599" width="1" height="1" fill="#00e696"/>
<rect x="217.5" y="640.0" width="3.5" height="5.0" fill="#00e696"/>
<rect x="293" y="558" width="1" height="1" fill="#00b4e6"/>
<rect x="294" y="558" width="1" height="1" fill="#00b4e6"/>
<rect x="295" y="558" width="1" height="1" fill="#00e696"/>
<rect x="297" y="558" width="1" height="1" fill="#00e696"/>
<rect x="302" y="558" width="1" height="1" fill="#00b4e6"/>
<rect x="303" y="558" width="1" height="1" fill="#00e696"/>
<rect x="306" y="558" width="1" height="1" fill="#00b4e6"/>
<rect x="293" y="559" width="1" height="1" fill="#00e696"/>
<rect x="294" y="559" width="1" height="1" fill="#00e696"/>
<rect x="295" y="559" width="1" height="1" fill="#00e696"/>
<rect x="296" y="559" width="1" height="1" fill="#00e696"/>
<rect x="297" y="559" width="1" height="1" fill="#00e696"/>
<rect x="299" y="559" width="1" height="1" fill="#00e696"/>
<rect x="300" y="559" width="1" height="1" fill="#00b4e6"/>
<rect x="301" y="559" width="1" height="1" fill="#00b4e6"/>
<rect x="304" y="559" width="1" height="1" fill="#00e696"/>
<rect x="305" y="559" width="1" height="1" fill="#00b4e6"/>
<rect x="306" y="559" width="1" height="1" fill="#00e696"/>
<rect x="293" y="560" width="1" height="1" fill="#00b4e6"/>
<rect x="297" y="560" width="1" height="1" fill="#00e696"/>
<rect x="298" y="560" width="1" height="1" fill="#00b4e6"/>
<rect x="299" y="560" width="1" height="1" fill="#00e696"/>
<rect x="300" y="560" width="1" height="1" fill="#00b4e6"/>
<rect x="301" y="560" width="1" height="1" fill="#00b4e6"/>
<rect x="302" y="560" width="1" height="1" fill="#00b4e6"/>
<rect x="304" y="560" width="1" height="1" fill="#00e696"/>
<rect x="306" y="560" width="1" height="1" fill="#00e696"/>
<rect x="293" y="561" width="1" height="1" fill="#00e696"/>
<rect x="294" y="561" width="1" height="1" fill="#00e696"/>
<rect x="296" y="561" width="1" height="1" fill="#00b4e6"/>
<rect x="297" y="561" width="1" height="1" fill="#00b4e6"/>
<rect x="299" y="561" width="1" height="1" fill="#00e696"/>
<rect x="300" y="561" width="1" height="1" fill="#00b4e6"/>
<rect x="301" y="561" width="1" height="1" fill="#00b4e6"/>
<rect x="305" y="561" width="1" height="1" fill="#00b4e6"/>
<rect x="306" y="561" width="1" height="1" fill="#00b4e6"/>
<rect x="293" y="562" width="1" height="1" fill="#00b4e6"/>
<rect x="294" y="562" width="1" height="1" fill="#00e696"/>
<rect x="295" y="562" width="1" height="1" fill="#00e696"/>
<rect x="298" y="562" width="1" height="1" fill="#00e696"/>
<rect x="301" y="562" width="1" height="1" fill="#00b4e6"/>
<rect x="302" y="562" width="1" height="1" fill="#00b4e6"/>
<rect x="303" y="562" width="1" height="1" fill="#00e696"/>
<rect x="304" y="562" width="1" height="1" fill="#00e696"/>
<rect x="293" y="563" width="1" height="1" fill="#00b4e6"/>
<rect x="294" y="563" width="1" height="1" fill="#00e696"/>
<rect x="295" y="563" width="1" height="1" fill="#00e696"/>
<rect x="298" y="563" width="1" height="1" fill="#00b4e6"/>
<rect x="300" y="563" width="1" height="1" fill="#00b4e6"/>
<rect x="302" y="563" width="1" height="1" fill="#00e696"/>
<rect x="303" y="563" width="1" height="1" fill="#00e696"/>
<rect x="304" y="563" width="1" height="1" fill="#00b4e6"/>
<rect x="305" y="563" width="1" height="1" fill="#00e696"/>
<rect x="295" y="564" width="1" height="1" fill="#00e696"/>
<rect x="296" y="564" width="1" height="1" fill="#00b4e6"/>
<rect x="299" y="564" width="1" height="1" fill="#00b4e6"/>
<rect x="301" y="564" width="1" height="1" fill="#00b4e6"/>
<rect x="305" y="564" width="1" height="1" fill="#00b4e6"/>
<rect x="306" y="564" width="1" height="1" fill="#00b4e6"/>
<rect x="294" y="565" width="1" height="1" fill="#00e696"/>
<rect x="295" y="565" width="1" height="1" fill="#00e696"/>
<rect x="297" y="565" width="1" height="1" fill="#00b4e6"/>
<rect x="298" y="565" width="1" height="1" fill="#00e696"/>
<rect x="299" y="565" width="1" height="1" fill="#00b4e6"/>
<rect x="300" y="565" width="1" height="1" fill="#00e696"/>
<rect x="301" y="565" width="1" height="1" fill="#00e696"/>
<rect x="304" y="565" width="1" height="1" fill="#00e696"/>
<rect x="293" y="566" width="1" height="1" fill="#00b4e6"/>
<rect x="296" y="566" width="1" height="1" fill="#00b4e6"/>
<rect x="297" y="566" width="1" height="1" fill="#00b4e6"/>
<rect x="298" y="566" width="1" height="1" fill="#00e696"/>
<rect x="299" y="566" width="1" height="1" fill="#00b4e6"/>
<rect x="301" y="566" width="1" height="1" fill="#00e696"/>
<rect x="303" y="566" width="1" height="1" fill="#00b4e6"/>
<rect x="305" y="566" width="1" height="1" fill="#00e696"/>
<rect x="306" y="566" width="1" height="1" fill="#00e696"/>
<rect x="293" y="567" width="1" height="1" fill="#00e696"/>
<rect x="295" y="567" width="1" height="1" fill="#00e696"/>
<rect x="296" y="567" width="1" height="1" fill="#00b4e6"/>
<rect x="298" y="567" width="1" height="1" fill="#00e696"/>
<rect x="300" y="567" width="1" height="1" fill="#00e696"/>
<rect x="301" y="567" width="1" height="1" fill="#00b4e6"/>
<rect x="302" y="567" width="1" height="1" fill="#00b4e6"/>
<rect x="306" y="567" width="1" height="1" fill="#00b4e6"/>
<rect x="295" y="568" width="1" height="1" fill="#00b4e6"/>
<rect x="296" y="568" width="1" height="1" fill="#00b4e6"/>
<rect x="297" y="568" width="1" height="1" fill="#00b4e6"/>
<rect x="298" y="568" width="1" height="1" fill="#00b4e6"/>
<rect x="299" y="568" width="1" height="1" fill="#00b4e6"/>
<rect x="300" y="568" width="1" height="1" fill="#00b4e6"/>
<rect x="301" y="568" width="1" height="1" fill="#00b4e6"/>
<rect x="302" y="568" width="1" height="1" fill="#00b4e6"/>
<rect x="304" y="568" width="1" height="1" fill="#00b4e6"/>
<rect x="293" y="569" width="1" height="1" fill="#00e696"/>
<rect x="294" y="569" width="1" height="1" fill="#00e696"/>
<rect x="295" y="569" width="1" height="1" fill="#00e696"/>
<rect x="296" y="569" width="1" height="1" fill="#00e696"/>
<rect x="297" y="569" width="1" height="1" fill="#00e696"/>
<rect x="298" y="569" width="1" height="1" fill="#00e696"/>
<rect x="302" y="569" width="1" height="1" fill="#00b4e6"/>
<rect x="303" y="569" width="1" height="1" fill="#00b4e6"/>
<rect x="304" y="569" width="1" height="1" fill="#00e696"/>
<rect x="305" y="569" width="1" height="1" fill="#00b4e6"/>
<rect x="293" y="570" width="1" height="1" fill="#00b4e6"/>
<rect x="296" y="570" width="1" height="1" fill="#00b4e6"/>
<rect x="297" y="570" width="1" height="1" fill="#00e696"/>
<rect x="299" y="570" width="1" height="1" fill="#00b4e6"/>
<rect x="301" y="570" width="1" height="1" fill="#00b4e6"/>
<rect x="303" y="570" width="1" height="1" fill="#00b4e6"/>
<rect x="304" y="570" width="1" height="1" fill="#00e696"/>
<rect x="306" y="570" width="1" height="1" fill="#00b4e6"/>
<rect x="313" y="558" width="1" height="1" fill="#00e696"/>
<rect x="314" y="558" width="1" height="1" fill="#00e696"/>
<rect x="315" y="558" width="1" height="1" fill="#00e696"/>
<rect x="316" y="558" width="1" height="1" fill="#00b4e6"/>
<rect x="317" y="558" width="1" height="1" fill="#00b4e6"/>
<rect x="318" y="558" width="1" height="1" fill="#00e696"/>
<rect x="313" y="559" width="1" height="1" fill="#00e696"/>
<rect x="315" y="559" width="1" height="1" fill="#00e696"/>
<rect x="316" y="559" width="1" height="1" fill="#00e696"/>
<rect x="317" y="559" width="1" height="1" fill="#00e696"/>
<rect x="313" y="560" width="1" height="1" fill="#00e696"/>
<rect x="314" y="560" width="1" height="1" fill="#00b4e6"/>
<rect x="315" y="560" width="1" height="1" fill="#00b4e6"/>
<rect x="316" y="560" width="1" height="1" fill="#00b4e6"/>
<rect x="318" y="560" width="1" height="1" fill="#00e696"/>
<rect x="312" y="561" width="1" height="1" fill="#00b4e6"/>
<rect x="313" y="561" width="1" height="1" fill="#00e696"/>
<rect x="314" y="561" width="1" height="1" fill="#00e696"/>
<rect x="318" y="561" width="1" height="1" fill="#00b4e6"/>
<rect x="312" y="562" width="1" height="1" fill="#00e696"/>
<rect x="313" y="562" width="1" height="1" fill="#00b4e6"/>
<rect x="315" y="562" width="1" height="1" fill="#00b4e6"/>
<rect x="316" y="562" width="1" height="1" fill="#00b4e6"/>
<rect x="317" y="562" width="1" height="1" fill="#00b4e6"/>
<rect x="318" y="562" width="1" height="1" fill="#00e696"/>
<rect x="312" y="563" width="1" height="1" fill="#00e696"/>
<rect x="314" y="563" width="1" height="1" fill="#00e696"/>
<rect x="315" y="563" width="1" height="1" fill="#00b4e6"/>
<rect x="316" y="563" width="1" height="1" fill="#00e696"/>
<rect x="317" y="563" width="1" height="1" fill="#00e696"/>
<rect x="318" y="563" width="1" height="1" fill="#00b4e6"/>
<rect x="312" y="564" width="1" height="1" fill="#00b4e6"/>
<rect x="313" y="564" width="1" height="1" fill="#00e696"/>
<rect x="314" y="564" width="1" height="1" fill="#00b4e6"/>
<rect x="315" y="564" width="1" height="1" fill="#00e696"/>
<rect x="316" y="564" width="1" height="1" fill="#00b4e6"/>
<rect x="318" y="564" width="1" height="1" fill="#00e696"/>
<rect x="313" y="565" width="1" height="1" fill="#00e696"/>
<rect x="314" y="565" width="1" height="1" fill="#00e696"/>
<rect x="316" y="565" width="1" height="1" fill="#00b4e6"/>
<rect x="318" y="565" width="1" height="1" fill="#00b4e6"/>
<rect x="312" y="566" width="1" height="1" fill="#00b4e6"/>
<rect x="313" y="566" width="1" height="1" fill="#00e696"/>
<rect x="316" y="566" width="1" height="1" fill="#00e696"/>
<rect x="312" y="567" width="1" height="1" fill="#00b4e6"/>
<rect x="313" y="567" width="1" height="1" fill="#00e696"/>
<rect x="315" y="567" width="1" height="1" fill="#00e696"/>
<rect x="316" y="567" width="1" height="1" fill="#00e696"/>
<rect x="317" y="567" width="1" height="1" fill="#00b4e6"/>
<rect x="318" y="567" width="1" height="1" fill="#00e696"/>
<rect x="313" y="568" width="1" height="1" fill="#00e696"/>
<rect x="315" y="568" width="1" height="1" fill="#00b4e6"/>
<rect x="317" y="568" width="1" height="1" fill="#00e696"/>
<rect x="312" y="569" width="1" height="1" fill="#00b4e6"/>
<rect x="313" y="569" width="1" height="1" fill="#00b4e6"/>
<rect x="314" y="569" width="1" height="1" fill="#00b4e6"/>
<rect x="315" y="569" width="1" height="1" fill="#00e696"/>
<rect x="316" y="569" width="1" height="1" fill="#00b4e6"/>
<rect x="317" y="569" width="1" height="1" fill="#00e696"/>
<rect x="318" y="569" width="1" height="1" fill="#00e696"/>
<polygon fill="#00e696" points="347,566 352,566 356,572 364,572 364,580 358,585 350,585 347,578"/>
<rect x="347.0" y="569.0" width="5.0" height="11.0" fill="#c8c8c8"/>
<rect x="350.0" y="576.0" width="6.0" height="6.0" fill="#d89436"/>
<rect x="355.0" y="574.0" width="7.0" height="6.0" fill="#006e4b"/>
<rect x="367.5" y="555.0" width="7.5" height="7.0" fill="#d89436"/>
<rect x="373.0" y="555.0" width="3.0" height="7.0" fill="#c8c8c8"/>
<polygon fill="#00e696" points="375,568 390,568 392,575 388,585 383,585 375,574"/>
<polygon fill="#006e4b" points="381,573 392,573 391,582 386,584 382,580"/>
<rect x="347.0" y="590.0" width="9.0" height="9.0" fill="#00e696"/>
<rect x="378.0" y="590.0" width="14.0" height="11.0" fill="#00e696"/>
<rect x="385.0" y="594.0" width="7.0" height="7.0" fill="#006e4b"/>
<polygon fill="#006e4b" points="381,603 386,601 394,603 401,611 401,620 394,624 386,622 379,613"/>
<rect x="381.0" y="604.0" width="10.0" height="8.0" fill="#d89436"/>
<polygon fill="#c8c8c8" points="390,605 396,607 401,614 400,618 392,618 389,612"/>
<rect x="379.0" y="611.0" width="4.0" height="5.0" fill="#00e696"/>
<polygon fill="#00e696" points="398,587 408,587 411,592 411,599 398,600"/>
<rect x="401.0" y="593.0" width="8.0" height="6.0" fill="#c8c8c8"/>
<polygon fill="#006e4b" points="406,600 413,599 420,606 420,613 410,613 406,606"/>
<rect x="412.0" y="596.0" width="4.0" height="4.0" fill="#00e696"/>
<rect x="409.0" y="617.6" width="6.0" height="6.4" fill="#00e696"/>
<rect x="401.0" y="627.0" width="8.0" height="8.0" fill="#00e696"/>
<rect x="412.0" y="632.0" width="8.0" height="8.0" fill="#00e696"/>
<rect x="290" y="581" width="1" height="1" fill="#00b4e6"/>
<rect x="291" y="581" width="1" height="1" fill="#00e696"/>
<rect x="292" y="581" width="1" height="1" fill="#00b4e6"/>
<rect x="293" y="581" width="1" height="1" fill="#0078e6"/>
<rect x="294" y="581" width="1" height="1" fill="#0078e6"/>
<rect x="295" y="581" width="1" height="1" fill="#00b4e6"/>
<rect x="296" y="581" width="1" height="1" fill="#0078e6"/>
<rect x="297" y="581" width="1" height="1" fill="#0078e6"/>
<rect x="298" y="581" width="1" height="1" fill="#00b4e6"/>
<rect x="290" y="582" width="1" height="1" fill="#00e696"/>
<rect x="291" y="582" width="1" height="1" fill="#00b4e6"/>
<rect x="294" y="582" width="1" height="1" fill="#0078e6"/>
<rect x="295" y="582" width="1" height="1" fill="#0078e6"/>
<rect x="297" y="582" width="1" height="1" fill="#00b4e6"/>
<rect x="298" y="582" width="1" height="1" fill="#0078e6"/>
<rect x="291" y="583" width="1" height="1" fill="#0078e6"/>
<rect x="292" y="583" width="1" height="1" fill="#00b4e6"/>
<rect x="293" y="583" width="1" height="1" fill="#00e696"/>
<rect x="294" y="583" width="1" height="1" fill="#0078e6"/>
<rect x="295" y="583" width="1" height="1" fill="#00e696"/>
<rect x="296" y="583" width="1" height="1" fill="#0078e6"/>
<rect x="297" y="583" width="1" height="1" fill="#00e696"/>
<rect x="298" y="583" width="1" height="1" fill="#0078e6"/>
<rect x="290" y="584" width="1" height="1" fill="#00e696"/>
<rect x="291" y="584" width="1" height="1" fill="#00b4e6"/>
<rect x="292" y="584" width="1" height="1" fill="#0078e6"/>
<rect x="293" y="584" width="1" height="1" fill="#00b4e6"/>
<rect x="294" y="584" width="1" height="1" fill="#0078e6"/>
<rect x="295" y="584" width="1" height="1" fill="#0078e6"/>
<rect x="298" y="584" width="1" height="1" fill="#00e696"/>
<rect x="291" y="585" width="1" height="1" fill="#00e696"/>
<rect x="293" y="585" width="1" height="1" fill="#0078e6"/>
<rect x="294" y="585" width="1" height="1" fill="#00e696"/>
<rect x="295" y="585" width="1" height="1" fill="#00e696"/>
<rect x="296" y="585" width="1" height="1" fill="#00b4e6"/>
<rect x="297" y="585" width="1" height="1" fill="#00b4e6"/>
<rect x="298" y="585" width="1" height="1" fill="#00e696"/>
<rect x="290" y="586" width="1" height="1" fill="#00e696"/>
<rect x="291" y="586" width="1" height="1" fill="#00e696"/>
<rect x="293" y="586" width="1" height="1" fill="#0078e6"/>
<rect x="294" y="586" width="1" height="1" fill="#00b4e6"/>
<rect x="296" y="586" width="1" height="1" fill="#00e696"/>
<rect x="297" y="586" width="1" height="1" fill="#00b4e6"/>
<rect x="298" y="586" width="1" height="1" fill="#0078e6"/>
<rect x="290" y="587" width="1" height="1" fill="#0078e6"/>
<rect x="291" y="587" width="1" height="1" fill="#00b4e6"/>
<rect x="292" y="587" width="1" height="1" fill="#0078e6"/>
<rect x="293" y="587" width="1" height="1" fill="#00e696"/>
<rect x="295" y="587" width="1" height="1" fill="#00e696"/>
<rect x="296" y="587" width="1" height="1" fill="#00e696"/>
<rect x="297" y="587" width="1" height="1" fill="#00e696"/>
<rect x="298" y="587" width="1" height="1" fill="#00e696"/>
<rect x="290" y="588" width="1" height="1" fill="#00b4e6"/>
<rect x="291" y="588" width="1" height="1" fill="#00e696"/>
<rect x="292" y="588" width="1" height="1" fill="#00e696"/>
<rect x="294" y="588" width="1" height="1" fill="#0078e6"/>
<rect x="297" y="588" width="1" height="1" fill="#00b4e6"/>
<rect x="291" y="589" width="1" height="1" fill="#00b4e6"/>
<rect x="292" y="589" width="1" height="1" fill="#0078e6"/>
<rect x="293" y="589" width="1" height="1" fill="#00b4e6"/>
<rect x="294" y="589" width="1" height="1" fill="#00e696"/>
<rect x="295" y="589" width="1" height="1" fill="#00b4e6"/>
<rect x="296" y="589" width="1" height="1" fill="#00b4e6"/>
<rect x="297" y="589" width="1" height="1" fill="#0078e6"/>
<rect x="298" y="589" width="1" height="1" fill="#0078e6"/>
<rect x="290" y="590" width="1" height="1" fill="#00e696"/>
<rect x="291" y="590" width="1" height="1" fill="#0078e6"/>
<rect x="292" y="590" width="1" height="1" fill="#0078e6"/>
<rect x="293" y="590" width="1" height="1" fill="#00e696"/>
<rect x="294" y="590" width="1" height="1" fill="#0078e6"/>
<rect x="295" y="590" width="1" height="1" fill="#00e696"/>
<rect x="296" y="590" width="1" height="1" fill="#00b4e6"/>
<rect x="297" y="590" width="1" height="1" fill="#0078e6"/>
<rect x="298" y="590" width="1" height="1" fill="#00b4e6"/>
<rect x="290" y="591" width="1" height="1" fill="#00b4e6"/>
<rect x="292" y="591" width="1" height="1" fill="#00e696"/>
<rect x="293" y="591" width="1" height="1" fill="#0078e6"/>
<rect x="294" y="591" width="1" height="1" fill="#0078e6"/>
<rect x="296" y="591" width="1" height="1" fill="#00b4e6"/>
<rect x="297" y="591" width="1" height="1" fill="#0078e6"/>
<rect x="298" y="591" width="1" height="1" fill="#00e696"/>
<rect x="290" y="592" width="1" height="1" fill="#00b4e6"/>
<rect x="291" y="592" width="1" height="1" fill="#00e696"/>
<rect x="292" y="592" width="1" height="1" fill="#0078e6"/>
<rect x="293" y="592" width="1" height="1" fill="#00e696"/>
<rect x="294" y="592" width="1" height="1" fill="#0078e6"/>
<rect x="295" y="592" width="1" height="1" fill="#0078e6"/>
<rect x="296" y="592" width="1" height="1" fill="#00b4e6"/>
<rect x="297" y="592" width="1" height="1" fill="#0078e6"/>
<rect x="290" y="593" width="1" height="1" fill="#00e696"/>
<rect x="291" y="593" width="1" height="1" fill="#0078e6"/>
<rect x="292" y="593" width="1" height="1" fill="#00e696"/>
<rect x="293" y="593" width="1" height="1" fill="#00b4e6"/>
<rect x="294" y="593" width="1" height="1" fill="#0078e6"/>
<rect x="295" y="593" width="1" height="1" fill="#00b4e6"/>
<rect x="296" y="593" width="1" height="1" fill="#00e696"/>
<rect x="297" y="593" width="1" height="1" fill="#00e696"/>
<rect x="290" y="594" width="1" height="1" fill="#00b4e6"/>
<rect x="292" y="594" width="1" height="1" fill="#0078e6"/>
<rect x="293" y="594" width="1" height="1" fill="#0078e6"/>
<rect x="294" y="594" width="1" height="1" fill="#0078e6"/>
<rect x="295" y="594" width="1" height="1" fill="#00e696"/>
<rect x="296" y="594" width="1" height="1" fill="#00b4e6"/>
<rect x="297" y="594" width="1" height="1" fill="#00b4e6"/>
<rect x="298" y="594" width="1" height="1" fill="#00e696"/>
<rect x="290" y="595" width="1" height="1" fill="#00e696"/>
<rect x="292" y="595" width="1" height="1" fill="#0078e6"/>
<rect x="293" y="595" width="1" height="1" fill="#00e696"/>
<rect x="294" y="595" width="1" height="1" fill="#00e696"/>
<rect x="295" y="595" width="1" height="1" fill="#00e696"/>
<rect x="296" y="595" width="1" height="1" fill="#00e696"/>
<rect x="297" y="595" width="1" height="1" fill="#00e696"/>
<rect x="298" y="595" width="1" height="1" fill="#0078e6"/>
<rect x="290" y="596" width="1" height="1" fill="#0078e6"/>
<rect x="291" y="596" width="1" height="1" fill="#0078e6"/>
<rect x="292" y="596" width="1" height="1" fill="#00e696"/>
<rect x="294" y="596" width="1" height="1" fill="#00e696"/>
<rect x="295" y="596" width="1" height="1" fill="#00b4e6"/>
<rect x="296" y="596" width="1" height="1" fill="#0078e6"/>
<rect x="298" y="596" width="1" height="1" fill="#0078e6"/>
<rect x="326" y="592" width="1" height="1" fill="#00b4e6"/>
<rect x="327" y="592" width="1" height="1" fill="#00b4e6"/>
<rect x="328" y="592" width="1" height="1" fill="#00b4e6"/>
<rect x="329" y="592" width="1" height="1" fill="#00b4e6"/>
<rect x="330" y="592" width="1" height="1" fill="#00b4e6"/>
<rect x="331" y="592" width="1" height="1" fill="#00b4e6"/>
<rect x="326" y="593" width="1" height="1" fill="#00b4e6"/>
<rect x="327" y="593" width="1" height="1" fill="#00b4e6"/>
<rect x="329" y="593" width="1" height="1" fill="#00b4e6"/>
<rect x="330" y="593" width="1" height="1" fill="#00b4e6"/>
<rect x="331" y="593" width="1" height="1" fill="#00b4e6"/>
<rect x="327" y="594" width="1" height="1" fill="#00b4e6"/>
<rect x="328" y="594" width="1" height="1" fill="#00b4e6"/>
<rect x="329" y="594" width="1" height="1" fill="#00b4e6"/>
<rect x="330" y="594" width="1" height="1" fill="#00b4e6"/>
<rect x="331" y="594" width="1" height="1" fill="#00b4e6"/>
<rect x="326" y="595" width="1" height="1" fill="#00b4e6"/>
<rect x="328" y="595" width="1" height="1" fill="#00b4e6"/>
<rect x="329" y="595" width="1" height="1" fill="#00b4e6"/>
<rect x="330" y="595" width="1" height="1" fill="#00b4e6"/>
<rect x="331" y="595" width="1" height="1" fill="#00b4e6"/>
<rect x="326" y="596" width="1" height="1" fill="#00b4e6"/>
<rect x="327" y="596" width="1" height="1" fill="#00b4e6"/>
<rect x="328" y="596" width="1" height="1" fill="#00b4e6"/>
<rect x="329" y="596" width="1" height="1" fill="#00b4e6"/>
<rect x="330" y="596" width="1" height="1" fill="#00b4e6"/>
<rect x="326" y="597" width="1" height="1" fill="#00b4e6"/>
<rect x="327" y="597" width="1" height="1" fill="#00b4e6"/>
<rect x="328" y="597" width="1" height="1" fill="#00b4e6"/>
<rect x="329" y="597" width="1" height="1" fill="#00b4e6"/>
<rect x="330" y="597" width="1" height="1" fill="#00b4e6"/>
<rect x="331" y="597" width="1" height="1" fill="#00b4e6"/>
<rect x="316" y="592" width="1" height="1" fill="#00b4e6"/>
<rect x="317" y="592" width="1" height="1" fill="#00b4e6"/>
<rect x="318" y="592" width="1" height="1" fill="#00b4e6"/>
<rect x="316" y="593" width="1" height="1" fill="#00b4e6"/>
<rect x="318" y="593" width="1" height="1" fill="#00b4e6"/>
<rect x="319" y="593" width="1" height="1" fill="#00b4e6"/>
<rect x="316" y="594" width="1" height="1" fill="#00b4e6"/>
<rect x="317" y="594" width="1" height="1" fill="#00b4e6"/>
<rect x="318" y="594" width="1" height="1" fill="#00b4e6"/>
<rect x="319" y="594" width="1" height="1" fill="#00b4e6"/>
<rect x="317" y="595" width="1" height="1" fill="#00b4e6"/>
<rect x="318" y="595" width="1" height="1" fill="#00b4e6"/>
<rect x="319" y="595" width="1" height="1" fill="#00b4e6"/>
<rect x="290" y="603" width="1" height="1" fill="#0078e6"/>
<rect x="291" y="603" width="1" height="1" fill="#0078e6"/>
<rect x="292" y="603" width="1" height="1" fill="#0078e6"/>
<rect x="293" y="603" width="1" height="1" fill="#00b4e6"/>
<rect x="290" y="604" width="1" height="1" fill="#00b4e6"/>
<rect x="292" y="604" width="1" height="1" fill="#00b4e6"/>
<rect x="293" y="604" width="1" height="1" fill="#00b4e6"/>
<rect x="290" y="605" width="1" height="1" fill="#00b4e6"/>
<rect x="292" y="605" width="1" height="1" fill="#00b4e6"/>
<rect x="293" y="605" width="1" height="1" fill="#0078e6"/>
<rect x="294" y="605" width="1" height="1" fill="#0078e6"/>
<rect x="290" y="606" width="1" height="1" fill="#00b4e6"/>
<rect x="291" y="606" width="1" height="1" fill="#00b4e6"/>
<rect x="292" y="606" width="1" height="1" fill="#0078e6"/>
<rect x="293" y="606" width="1" height="1" fill="#0078e6"/>
<rect x="294" y="606" width="1" height="1" fill="#00b4e6"/>
<rect x="290" y="607" width="1" height="1" fill="#00b4e6"/>
<rect x="291" y="607" width="1" height="1" fill="#0078e6"/>
<rect x="292" y="607" width="1" height="1" fill="#00b4e6"/>
<rect x="294" y="607" width="1" height="1" fill="#00b4e6"/>
<rect x="290" y="608" width="1" height="1" fill="#0078e6"/>
<rect x="293" y="608" width="1" height="1" fill="#0078e6"/>
<rect x="294" y="608" width="1" height="1" fill="#0078e6"/>
<rect x="291" y="609" width="1" height="1" fill="#00b4e6"/>
<rect x="294" y="609" width="1" height="1" fill="#0078e6"/>
<rect x="290" y="610" width="1" height="1" fill="#0078e6"/>
<rect x="291" y="610" width="1" height="1" fill="#00b4e6"/>
<rect x="294" y="610" width="1" height="1" fill="#00b4e6"/>
<rect x="290" y="611" width="1" height="1" fill="#0078e6"/>
<rect x="291" y="611" width="1" height="1" fill="#0078e6"/>
<rect x="292" y="611" width="1" height="1" fill="#0078e6"/>
<rect x="294" y="611" width="1" height="1" fill="#0078e6"/>
<rect x="291" y="612" width="1" height="1" fill="#00b4e6"/>
<rect x="292" y="612" width="1" height="1" fill="#0078e6"/>
<rect x="293" y="612" width="1" height="1" fill="#00b4e6"/>
<rect x="294" y="612" width="1" height="1" fill="#00b4e6"/>
<rect x="300" y="605" width="1" height="1" fill="#00b4e6"/>
<rect x="301" y="605" width="1" height="1" fill="#00b4e6"/>
<rect x="302" y="605" width="1" height="1" fill="#00b4e6"/>
<rect x="300" y="606" width="1" height="1" fill="#00b4e6"/>
<rect x="301" y="606" width="1" height="1" fill="#00b4e6"/>
<rect x="302" y="606" width="1" height="1" fill="#00b4e6"/>
<rect x="300" y="607" width="1" height="1" fill="#00b4e6"/>
<rect x="301" y="607" width="1" height="1" fill="#00b4e6"/>
<rect x="302" y="607" width="1" height="1" fill="#00b4e6"/>
<rect x="301" y="608" width="1" height="1" fill="#00b4e6"/>
<rect x="302" y="608" width="1" height="1" fill="#00b4e6"/>
<rect x="300" y="609" width="1" height="1" fill="#00b4e6"/>
<rect x="301" y="609" width="1" height="1" fill="#00b4e6"/>
<rect x="300" y="610" width="1" height="1" fill="#00b4e6"/>
<rect x="301" y="610" width="1" height="1" fill="#00b4e6"/>
<rect x="304" y="611" width="1" height="1" fill="#00b4e6"/>
<rect x="305" y="611" width="1" height="1" fill="#0078e6"/>
<rect x="306" y="611" width="1" height="1" fill="#00b4e6"/>
<rect x="307" y="611" width="1" height="1" fill="#0078e6"/>
<rect x="308" y="611" width="1" height="1" fill="#0078e6"/>
<rect x="309" y="611" width="1" height="1" fill="#00b4e6"/>
<rect x="310" y="611" width="1" height="1" fill="#00b4e6"/>
<rect x="304" y="612" width="1" height="1" fill="#0078e6"/>
<rect x="308" y="612" width="1" height="1" fill="#00b4e6"/>
<rect x="309" y="612" width="1" height="1" fill="#00b4e6"/>
<rect x="310" y="612" width="1" height="1" fill="#00b4e6"/>
<rect x="306" y="613" width="1" height="1" fill="#0078e6"/>
<rect x="307" y="613" width="1" height="1" fill="#0078e6"/>
<rect x="308" y="613" width="1" height="1" fill="#0078e6"/>
<rect x="310" y="613" width="1" height="1" fill="#00b4e6"/>
<rect x="304" y="614" width="1" height="1" fill="#0078e6"/>
<rect x="305" y="614" width="1" height="1" fill="#00b4e6"/>
<rect x="306" y="614" width="1" height="1" fill="#0078e6"/>
<rect x="307" y="614" width="1" height="1" fill="#00b4e6"/>
<rect x="308" y="614" width="1" height="1" fill="#00b4e6"/>
<rect x="310" y="614" width="1" height="1" fill="#0078e6"/>
<rect x="300" y="622" width="1" height="1" fill="#00e696"/>
<rect x="301" y="622" width="1" height="1" fill="#00e696"/>
<rect x="302" y="622" width="1" height="1" fill="#00e696"/>
<rect x="304" y="622" width="1" height="1" fill="#00e696"/>
<rect x="306" y="622" width="1" height="1" fill="#00b4e6"/>
<rect x="308" y="622" width="1" height="1" fill="#00e696"/>
<rect x="309" y="622" width="1" height="1" fill="#00e696"/>
<rect x="310" y="622" width="1" height="1" fill="#00e696"/>
<rect x="311" y="622" width="1" height="1" fill="#00e696"/>
<rect x="299" y="623" width="1" height="1" fill="#00b4e6"/>
<rect x="300" y="623" width="1" height="1" fill="#00e696"/>
<rect x="302" y="623" width="1" height="1" fill="#00e696"/>
<rect x="304" y="623" width="1" height="1" fill="#00b4e6"/>
<rect x="307" y="623" width="1" height="1" fill="#00e696"/>
<rect x="308" y="623" width="1" height="1" fill="#00b4e6"/>
<rect x="310" y="623" width="1" height="1" fill="#00e696"/>
<rect x="297" y="624" width="1" height="1" fill="#00e696"/>
<rect x="302" y="624" width="1" height="1" fill="#00b4e6"/>
<rect x="305" y="624" width="1" height="1" fill="#00b4e6"/>
<rect x="306" y="624" width="1" height="1" fill="#00e696"/>
<rect x="310" y="624" width="1" height="1" fill="#00b4e6"/>
<rect x="298" y="625" width="1" height="1" fill="#00b4e6"/>
<rect x="299" y="625" width="1" height="1" fill="#00b4e6"/>
<rect x="302" y="625" width="1" height="1" fill="#00e696"/>
<rect x="303" y="625" width="1" height="1" fill="#00b4e6"/>
<rect x="307" y="625" width="1" height="1" fill="#00e696"/>
<rect x="308" y="625" width="1" height="1" fill="#00e696"/>
<rect x="309" y="625" width="1" height="1" fill="#00e696"/>
<rect x="310" y="625" width="1" height="1" fill="#00b4e6"/>
<rect x="311" y="625" width="1" height="1" fill="#00b4e6"/>
<rect x="319" y="615" width="1" height="1" fill="#00e696"/>
<rect x="320" y="615" width="1" height="1" fill="#00e696"/>
<rect x="321" y="615" width="1" height="1" fill="#00e696"/>
<rect x="322" y="615" width="1" height="1" fill="#00e696"/>
<rect x="323" y="615" width="1" height="1" fill="#00e696"/>
<rect x="324" y="615" width="1" height="1" fill="#00e696"/>
<rect x="319" y="616" width="1" height="1" fill="#00e696"/>
<rect x="320" y="616" width="1" height="1" fill="#00e696"/>
<rect x="321" y="616" width="1" height="1" fill="#00e696"/>
<rect x="322" y="616" width="1" height="1" fill="#00e696"/>
<rect x="323" y="616" width="1" height="1" fill="#00e696"/>
<rect x="320" y="617" width="1" height="1" fill="#00e696"/>
<rect x="321" y="617" width="1" height="1" fill="#00e696"/>
<rect x="322" y="617" width="1" height="1" fill="#00e696"/>
<rect x="319" y="618" width="1" height="1" fill="#00e696"/>
<rect x="321" y="618" width="1" height="1" fill="#00e696"/>
<rect x="322" y="618" width="1" height="1" fill="#00e696"/>
<rect x="323" y="618" width="1" height="1" fill="#00e696"/>
<rect x="324" y="618" width="1" height="1" fill="#00e696"/>
<rect x="325" y="615" width="1" height="1" fill="#00b4e6"/>
<rect x="329" y="615" width="1" height="1" fill="#00b4e6"/>
<rect x="331" y="615" width="1" height="1" fill="#00b4e6"/>
<rect x="326" y="616" width="1" height="1" fill="#00b4e6"/>
<rect x="329" y="616" width="1" height="1" fill="#00b4e6"/>
<rect x="330" y="616" width="1" height="1" fill="#00b4e6"/>
<rect x="331" y="616" width="1" height="1" fill="#00b4e6"/>
<rect x="332" y="616" width="1" height="1" fill="#00b4e6"/>
<rect x="333" y="616" width="1" height="1" fill="#00b4e6"/>
<rect x="334" y="616" width="1" height="1" fill="#00b4e6"/>
<rect x="327" y="617" width="1" height="1" fill="#00b4e6"/>
<rect x="329" y="617" width="1" height="1" fill="#00b4e6"/>
<rect x="333" y="617" width="1" height="1" fill="#00b4e6"/>
<rect x="334" y="617" width="1" height="1" fill="#00b4e6"/>
<rect x="325" y="618" width="1" height="1" fill="#00b4e6"/>
<rect x="327" y="618" width="1" height="1" fill="#00b4e6"/>
<rect x="333" y="618" width="1" height="1" fill="#00b4e6"/>
<rect x="334" y="618" width="1" height="1" fill="#00b4e6"/>
<rect x="326" y="619" width="1" height="1" fill="#00b4e6"/>
<rect x="328" y="619" width="1" height="1" fill="#00b4e6"/>
<rect x="330" y="619" width="1" height="1" fill="#00b4e6"/>
<rect x="331" y="619" width="1" height="1" fill="#00b4e6"/>
<rect x="333" y="619" width="1" height="1" fill="#00b4e6"/>
<rect x="327" y="620" width="1" height="1" fill="#00b4e6"/>
<rect x="329" y="620" width="1" height="1" fill="#00b4e6"/>
<rect x="332" y="620" width="1" height="1" fill="#00b4e6"/>
<rect x="333" y="620" width="1" height="1" fill="#00b4e6"/>
<rect x="334" y="620" width="1" height="1" fill="#00b4e6"/>
<rect x="325" y="621" width="1" height="1" fill="#00b4e6"/>
<rect x="327" y="621" width="1" height="1" fill="#00b4e6"/>
<rect x="328" y="621" width="1" height="1" fill="#00b4e6"/>
<rect x="329" y="621" width="1" height="1" fill="#00b4e6"/>
<rect x="330" y="621" width="1" height="1" fill="#00b4e6"/>
<rect x="331" y="621" width="1" height="1" fill="#00b4e6"/>
<rect x="333" y="621" width="1" height="1" fill="#00b4e6"/>
<rect x="330.0" y="615.0" width="5.0" height="4.0" fill="#c8c8c8"/>
<rect x="338.0" y="616.0" width="5.0" height="12.0" fill="#00e696"/>
<rect x="361.0" y="618.0" width="12.0" height="16.0" fill="#00e696"/>
<rect x="364.0" y="620.0" width="7.0" height="12.0" fill="#c8c8c8"/>
<rect x="361.5" y="634.0" width="5.5" height="6.7" fill="#00e696"/>
<rect x="338.0" y="635.0" width="8.0" height="12.0" fill="#00e696"/>
<rect x="339.0" y="637.0" width="6.0" height="8.0" fill="#c8c8c8"/>
<rect x="308" y="644" width="1" height="1" fill="#00b4e6"/>
<rect x="309" y="644" width="1" height="1" fill="#00b4e6"/>
<rect x="311" y="644" width="1" height="1" fill="#00b4e6"/>
<rect x="312" y="644" width="1" height="1" fill="#00b4e6"/>
<rect x="307" y="645" width="1" height="1" fill="#00b4e6"/>
<rect x="308" y="645" width="1" height="1" fill="#00b4e6"/>
<rect x="310" y="645" width="1" height="1" fill="#00b4e6"/>
<rect x="311" y="645" width="1" height="1" fill="#00b4e6"/>
<rect x="312" y="645" width="1" height="1" fill="#00b4e6"/>
<rect x="308" y="646" width="1" height="1" fill="#00b4e6"/>
<rect x="310" y="646" width="1" height="1" fill="#00b4e6"/>
<rect x="298" y="644" width="1" height="1" fill="#00b4e6"/>
<rect x="299" y="644" width="1" height="1" fill="#00b4e6"/>
<rect x="300" y="644" width="1" height="1" fill="#00b4e6"/>
<rect x="301" y="644" width="1" height="1" fill="#00b4e6"/>
<rect x="298" y="645" width="1" height="1" fill="#00b4e6"/>
<rect x="300" y="645" width="1" height="1" fill="#00b4e6"/>
<rect x="302" y="645" width="1" height="1" fill="#00b4e6"/>
<rect x="300" y="646" width="1" height="1" fill="#00b4e6"/>
<rect x="301" y="646" width="1" height="1" fill="#00b4e6"/>
<rect x="302" y="646" width="1" height="1" fill="#00b4e6"/>
<rect x="298" y="647" width="1" height="1" fill="#00b4e6"/>
<rect x="299" y="647" width="1" height="1" fill="#00b4e6"/>
<rect x="301" y="647" width="1" height="1" fill="#00b4e6"/>
<rect x="295" y="633" width="1" height="1" fill="#00b4e6"/>
<rect x="297" y="633" width="1" height="1" fill="#00b4e6"/>
<rect x="295" y="634" width="1" height="1" fill="#00b4e6"/>
<rect x="296" y="634" width="1" height="1" fill="#00b4e6"/>
<rect x="373.5" y="646.0" width="1.9" height="3.0" fill="#00e696"/>
<rect x="375.0" y="654.6" width="11.0" height="10.4" fill="#006e4b"/>
<rect x="380.0" y="654.0" width="6.0" height="6.0" fill="#00e696"/>
<rect x="409.0" y="654.6" width="3.5" height="5.4" fill="#00e696"/>
<rect x="164.5" y="568.0" width="6.3" height="4.0" fill="#00e696"/>
<polygon fill="#006e4b" points="199,660 205,658 211,658 211,664 204,666 200,669 191,671 191,666 197,665"/>
<rect x="197.0" y="663.0" width="5.0" height="5.0" fill="#00e696"/>
<rect x="191.0" y="667.0" width="4.0" height="4.0" fill="#00e696"/>
<rect x="215.0" y="658.0" width="9.0" height="7.0" fill="#00e696"/>
<rect x="218.0" y="660.0" width="4.0" height="4.0" fill="#c8c8c8"/>
<rect x="215.0" y="660.0" width="3.0" height="5.0" fill="#006e4b"/>
<polygon fill="#00e696" points="236,677 242,676 241,686 237,689 234,686"/>
<rect x="182.0" y="683.0" width="6.0" height="8.0" fill="#00e696"/>
<rect x="205.0" y="699.0" width="8.0" height="9.0" fill="#00e696"/>
<rect x="191.0" y="702.0" width="8.0" height="8.6" fill="#00e696"/>
<rect x="177.0" y="705.0" width="13.0" height="11.0" fill="#00e696"/>
<rect x="178.0" y="705.0" width="10.0" height="5.0" fill="#006e4b"/>
<rect x="168.0" y="711.0" width="12.0" height="2.0" fill="#00e696"/>
<rect x="171.0" y="713.0" width="2.0" height="5.0" fill="#00e696"/>
<rect x="179.0" y="712.0" width="8.5" height="7.0" fill="#00e696"/>
<rect x="177.0" y="719.0" width="15.0" height="22.5" fill="#006e4b"/>
<rect x="182.0" y="718.0" width="9.0" height="7.0" fill="#c8c8c8"/>
<rect x="191.0" y="729.0" width="8.0" height="9.0" fill="#00e696"/>
<rect x="194.0" y="732.0" width="3.0" height="3.0" fill="#006e4b"/>
<rect x="180.0" y="726.0" width="4.0" height="4.0" fill="#00e696"/>
<rect x="182.0" y="741.0" width="9.0" height="4.0" fill="#00e696"/>
<rect x="179.0" y="744.0" width="18.0" height="20.0" fill="#006e4b"/>
<rect x="182.0" y="749.0" width="11.0" height="11.5" fill="#c8c8c8"/>
<rect x="195.0" y="750.0" width="3.0" height="3.0" fill="#00e696"/>
<rect x="278" y="698" width="1" height="1" fill="#00b4e6"/>
<rect x="280" y="698" width="1" height="1" fill="#00b4e6"/>
<rect x="282" y="698" width="1" height="1" fill="#00b4e6"/>
<rect x="277" y="699" width="1" height="1" fill="#00b4e6"/>
<rect x="278" y="699" width="1" height="1" fill="#00b4e6"/>
<rect x="280" y="699" width="1" height="1" fill="#00b4e6"/>
<rect x="281" y="699" width="1" height="1" fill="#00b4e6"/>
<rect x="282" y="699" width="1" height="1" fill="#00b4e6"/>
<rect x="280" y="700" width="1" height="1" fill="#00b4e6"/>
<rect x="281" y="700" width="1" height="1" fill="#00b4e6"/>
<rect x="282" y="700" width="1" height="1" fill="#00b4e6"/>
<rect x="277" y="701" width="1" height="1" fill="#00b4e6"/>
<rect x="278" y="701" width="1" height="1" fill="#00b4e6"/>
<rect x="279" y="701" width="1" height="1" fill="#00b4e6"/>
<rect x="280" y="701" width="1" height="1" fill="#00b4e6"/>
<rect x="281" y="701" width="1" height="1" fill="#00b4e6"/>
<rect x="277" y="702" width="1" height="1" fill="#00b4e6"/>
<rect x="278" y="702" width="1" height="1" fill="#00b4e6"/>
<rect x="279" y="702" width="1" height="1" fill="#00b4e6"/>
<rect x="280" y="702" width="1" height="1" fill="#00b4e6"/>
<rect x="281" y="702" width="1" height="1" fill="#00b4e6"/>
<rect x="278" y="703" width="1" height="1" fill="#00b4e6"/>
<rect x="282" y="703" width="1" height="1" fill="#00b4e6"/>
<rect x="277" y="704" width="1" height="1" fill="#00b4e6"/>
<rect x="278" y="704" width="1" height="1" fill="#00b4e6"/>
<rect x="279" y="704" width="1" height="1" fill="#00b4e6"/>
<rect x="280" y="704" width="1" height="1" fill="#00b4e6"/>
<rect x="281" y="704" width="1" height="1" fill="#00b4e6"/>
<rect x="282" y="704" width="1" height="1" fill="#00b4e6"/>
<rect x="282" y="679" width="1" height="1" fill="#00e696"/>
<rect x="283" y="679" width="1" height="1" fill="#00e696"/>
<rect x="286" y="679" width="1" height="1" fill="#00b4e6"/>
<rect x="288" y="679" width="1" height="1" fill="#00b4e6"/>
<rect x="289" y="679" width="1" height="1" fill="#00b4e6"/>
<rect x="284" y="680" width="1" height="1" fill="#00e696"/>
<rect x="285" y="680" width="1" height="1" fill="#00b4e6"/>
<rect x="286" y="680" width="1" height="1" fill="#00b4e6"/>
<rect x="287" y="680" width="1" height="1" fill="#00b4e6"/>
<rect x="289" y="680" width="1" height="1" fill="#00b4e6"/>
<rect x="283" y="681" width="1" height="1" fill="#00b4e6"/>
<rect x="284" y="681" width="1" height="1" fill="#00b4e6"/>
<rect x="286" y="681" width="1" height="1" fill="#00b4e6"/>
<rect x="288" y="681" width="1" height="1" fill="#00b4e6"/>
<rect x="289" y="681" width="1" height="1" fill="#00e696"/>
<rect x="282" y="682" width="1" height="1" fill="#00b4e6"/>
<rect x="283" y="682" width="1" height="1" fill="#00e696"/>
<rect x="284" y="682" width="1" height="1" fill="#00b4e6"/>
<rect x="285" y="682" width="1" height="1" fill="#00b4e6"/>
<rect x="286" y="682" width="1" height="1" fill="#00b4e6"/>
<rect x="288" y="682" width="1" height="1" fill="#00e696"/>
<rect x="289" y="682" width="1" height="1" fill="#00e696"/>
<rect x="283" y="683" width="1" height="1" fill="#00b4e6"/>
<rect x="284" y="683" width="1" height="1" fill="#00b4e6"/>
<rect x="286" y="683" width="1" height="1" fill="#00e696"/>
<rect x="287" y="683" width="1" height="1" fill="#00e696"/>
<rect x="288" y="683" width="1" height="1" fill="#00b4e6"/>
<rect x="289" y="683" width="1" height="1" fill="#00e696"/>
<rect x="282" y="684" width="1" height="1" fill="#00e696"/>
<rect x="284" y="684" width="1" height="1" fill="#00b4e6"/>
<rect x="289" y="684" width="1" height="1" fill="#00e696"/>
<rect x="282" y="685" width="1" height="1" fill="#00e696"/>
<rect x="284" y="685" width="1" height="1" fill="#00b4e6"/>
<rect x="285" y="685" width="1" height="1" fill="#00e696"/>
<rect x="286" y="685" width="1" height="1" fill="#00e696"/>
<rect x="289" y="685" width="1" height="1" fill="#00e696"/>
<rect x="283" y="686" width="1" height="1" fill="#00e696"/>
<rect x="284" y="686" width="1" height="1" fill="#00b4e6"/>
<rect x="285" y="686" width="1" height="1" fill="#00e696"/>
<rect x="286" y="686" width="1" height="1" fill="#00e696"/>
<rect x="288" y="686" width="1" height="1" fill="#00b4e6"/>
<rect x="282" y="687" width="1" height="1" fill="#00e696"/>
<rect x="284" y="687" width="1" height="1" fill="#00e696"/>
<rect x="285" y="687" width="1" height="1" fill="#00b4e6"/>
<rect x="286" y="687" width="1" height="1" fill="#00e696"/>
<rect x="287" y="687" width="1" height="1" fill="#00e696"/>
<rect x="288" y="687" width="1" height="1" fill="#00b4e6"/>
<rect x="338.7" y="640.0" width="6.9" height="8.6" fill="#00e696"/>
<rect x="340.0" y="641.0" width="5.0" height="5.0" fill="#c8c8c8"/>
<rect x="332.0" y="650.0" width="13.6" height="12.0" fill="#c8c8c8"/>
<rect x="335.0" y="652.0" width="8.0" height="8.0" fill="#d89436"/>
<rect x="332.0" y="658.0" width="3.0" height="4.0" fill="#00e696"/>
<rect x="347.0" y="662.0" width="16.0" height="26.0" fill="#c8c8c8"/>
<rect x="351.0" y="666.0" width="9.0" height="19.0" fill="#d89436"/>
<rect x="355.0" y="670.0" width="4.0" height="8.0" fill="#eab428"/>
<rect x="360.0" y="665.0" width="4.0" height="15.0" fill="#00e696"/>
<rect x="347.0" y="667.0" width="3.0" height="8.0" fill="#00e696"/>
<rect x="347.0" y="688.0" width="3.7" height="5.0" fill="#00e696"/>
<polygon fill="#00e696" points="361,690 372,688 377,694 377,704 367,704 361,698"/>
<rect x="368.0" y="693.0" width="8.0" height="11.0" fill="#006e4b"/>
<rect x="375.0" y="655.5" width="12.0" height="10.5" fill="#006e4b"/>
<rect x="383.0" y="656.0" width="4.0" height="7.0" fill="#00e696"/>
<rect x="378.0" y="705.0" width="14.0" height="14.0" fill="#c8c8c8"/>
<rect x="378.0" y="705.0" width="3.0" height="14.0" fill="#006e4b"/>
<rect x="297.0" y="679.6" width="6.0" height="6.0" fill="#006e4b"/>
<rect x="310.0" y="685.6" width="3.7" height="4.4" fill="#00b4e6"/>
<rect x="316.0" y="659.0" width="15.0" height="21.0" fill="#00e696"/>
<rect x="318.0" y="662.0" width="10.0" height="17.0" fill="#006e4b"/>
<rect x="317.0" y="668.0" width="7.0" height="12.0" fill="#d89436"/>
<rect x="319.0" y="671.0" width="3.0" height="5.0" fill="#c8c8c8"/>
<rect x="319.0" y="686.5" width="7.0" height="6.0" fill="#d89436"/>
<rect x="318.0" y="681.0" width="9.0" height="5.0" fill="#00e696"/>
<rect x="319.7" y="693.0" width="13.8" height="23.0" fill="#c8c8c8"/>
<rect x="322.0" y="698.5" width="10.0" height="15.5" fill="#d89436"/>
<rect x="336.0" y="710.6" width="9.0" height="7.4" fill="#00e696"/>
<rect x="300.0" y="707.0" width="13.7" height="9.6" fill="#c8c8c8"/>
<rect x="302.5" y="708.0" width="7.5" height="8.0" fill="#d89436"/>
<rect x="297.0" y="716.0" width="31.0" height="27.0" fill="#c8c8c8"/>
<rect x="311.0" y="724.0" width="10.5" height="7.0" fill="#d89436"/>
<rect x="297.0" y="720.0" width="4.0" height="18.0" fill="#006e4b"/>
<rect x="305.0" y="716.0" width="6.0" height="6.0" fill="#006e4b"/>
<rect x="323.0" y="720.0" width="5.0" height="13.0" fill="#00e696"/>
<rect x="318.0" y="733.0" width="10.0" height="10.0" fill="#00e696"/>
<rect x="294.0" y="740.0" width="23.0" height="14.5" fill="#00e696"/>
<rect x="300.0" y="744.0" width="10.0" height="8.0" fill="#006e4b"/>
<rect x="308.0" y="748.0" width="6.0" height="6.0" fill="#006e4b"/>
<rect x="291.0" y="764.0" width="20.0" height="13.7" fill="#00e696"/>
<rect x="294.0" y="767.0" width="9.0" height="10.7" fill="#c8c8c8"/>
<rect x="296.0" y="764.0" width="5.0" height="3.0" fill="#006e4b"/>
<rect x="417.0" y="705.0" width="3.5" height="5.6" fill="#006e4b"/>
<rect x="408.0" y="626.0" width="10.0" height="9.0" fill="#00e696"/>
<rect x="266" y="630" width="1" height="1" fill="#0078e6"/>
<rect x="269" y="630" width="1" height="1" fill="#0078e6"/>
<rect x="270" y="630" width="1" height="1" fill="#0078e6"/>
<rect x="271" y="630" width="1" height="1" fill="#0078e6"/>
<rect x="273" y="630" width="1" height="1" fill="#1e46e6"/>
<rect x="274" y="630" width="1" height="1" fill="#0078e6"/>
<rect x="277" y="630" width="1" height="1" fill="#3c28e6"/>
<rect x="281" y="630" width="1" height="1" fill="#3c28e6"/>
<rect x="283" y="630" width="1" height="1" fill="#3c28e6"/>
<rect x="266" y="631" width="1" height="1" fill="#6414f0"/>
<rect x="269" y="631" width="1" height="1" fill="#0078e6"/>
<rect x="273" y="631" width="1" height="1" fill="#3c28e6"/>
<rect x="274" y="631" width="1" height="1" fill="#1e46e6"/>
<rect x="275" y="631" width="1" height="1" fill="#0078e6"/>
<rect x="279" y="631" width="1" height="1" fill="#6414f0"/>
<rect x="281" y="631" width="1" height="1" fill="#0078e6"/>
<rect x="283" y="631" width="1" height="1" fill="#1e46e6"/>
<rect x="266" y="632" width="1" height="1" fill="#3c28e6"/>
<rect x="268" y="632" width="1" height="1" fill="#6414f0"/>
<rect x="270" y="632" width="1" height="1" fill="#3c28e6"/>
<rect x="272" y="632" width="1" height="1" fill="#3c28e6"/>
<rect x="274" y="632" width="1" height="1" fill="#1e46e6"/>
<rect x="275" y="632" width="1" height="1" fill="#1e46e6"/>
<rect x="276" y="632" width="1" height="1" fill="#3c28e6"/>
<rect x="278" y="632" width="1" height="1" fill="#6414f0"/>
<rect x="280" y="632" width="1" height="1" fill="#3c28e6"/>
<rect x="282" y="632" width="1" height="1" fill="#0078e6"/>
<rect x="283" y="632" width="1" height="1" fill="#0078e6"/>
<rect x="266" y="633" width="1" height="1" fill="#6414f0"/>
<rect x="267" y="633" width="1" height="1" fill="#3c28e6"/>
<rect x="268" y="633" width="1" height="1" fill="#3c28e6"/>
<rect x="270" y="633" width="1" height="1" fill="#0078e6"/>
<rect x="271" y="633" width="1" height="1" fill="#3c28e6"/>
<rect x="272" y="633" width="1" height="1" fill="#3c28e6"/>
<rect x="276" y="633" width="1" height="1" fill="#6414f0"/>
<rect x="277" y="633" width="1" height="1" fill="#1e46e6"/>
<rect x="278" y="633" width="1" height="1" fill="#0078e6"/>
<rect x="279" y="633" width="1" height="1" fill="#1e46e6"/>
<rect x="280" y="633" width="1" height="1" fill="#3c28e6"/>
<rect x="281" y="633" width="1" height="1" fill="#0078e6"/>
<rect x="283" y="633" width="1" height="1" fill="#1e46e6"/>
<rect x="266" y="634" width="1" height="1" fill="#3c28e6"/>
<rect x="267" y="634" width="1" height="1" fill="#0078e6"/>
<rect x="268" y="634" width="1" height="1" fill="#0078e6"/>
<rect x="269" y="634" width="1" height="1" fill="#3c28e6"/>
<rect x="270" y="634" width="1" height="1" fill="#6414f0"/>
<rect x="271" y="634" width="1" height="1" fill="#6414f0"/>
<rect x="273" y="634" width="1" height="1" fill="#6414f0"/>
<rect x="274" y="634" width="1" height="1" fill="#0078e6"/>
<rect x="275" y="634" width="1" height="1" fill="#3c28e6"/>
<rect x="278" y="634" width="1" height="1" fill="#3c28e6"/>
<rect x="279" y="634" width="1" height="1" fill="#0078e6"/>
<rect x="281" y="634" width="1" height="1" fill="#3c28e6"/>
<rect x="282" y="634" width="1" height="1" fill="#0078e6"/>
<rect x="283" y="634" width="1" height="1" fill="#0078e6"/>
<rect x="266" y="635" width="1" height="1" fill="#3c28e6"/>
<rect x="267" y="635" width="1" height="1" fill="#3c28e6"/>
<rect x="271" y="635" width="1" height="1" fill="#6414f0"/>
<rect x="273" y="635" width="1" height="1" fill="#3c28e6"/>
<rect x="274" y="635" width="1" height="1" fill="#3c28e6"/>
<rect x="275" y="635" width="1" height="1" fill="#1e46e6"/>
<rect x="276" y="635" width="1" height="1" fill="#0078e6"/>
<rect x="278" y="635" width="1" height="1" fill="#6414f0"/>
<rect x="266" y="636" width="1" height="1" fill="#3c28e6"/>
<rect x="268" y="636" width="1" height="1" fill="#1e46e6"/>
<rect x="271" y="636" width="1" height="1" fill="#3c28e6"/>
<rect x="272" y="636" width="1" height="1" fill="#1e46e6"/>
<rect x="273" y="636" width="1" height="1" fill="#3c28e6"/>
<rect x="274" y="636" width="1" height="1" fill="#0078e6"/>
<rect x="275" y="636" width="1" height="1" fill="#3c28e6"/>
<rect x="281" y="636" width="1" height="1" fill="#3c28e6"/>
<rect x="266" y="637" width="1" height="1" fill="#3c28e6"/>
<rect x="270" y="637" width="1" height="1" fill="#0078e6"/>
<rect x="271" y="637" width="1" height="1" fill="#3c28e6"/>
<rect x="272" y="637" width="1" height="1" fill="#3c28e6"/>
<rect x="276" y="637" width="1" height="1" fill="#0078e6"/>
<rect x="277" y="637" width="1" height="1" fill="#3c28e6"/>
<rect x="279" y="637" width="1" height="1" fill="#0078e6"/>
<rect x="280" y="637" width="1" height="1" fill="#0078e6"/>
<rect x="281" y="637" width="1" height="1" fill="#3c28e6"/>
<rect x="282" y="637" width="1" height="1" fill="#3c28e6"/>
<rect x="283" y="637" width="1" height="1" fill="#0078e6"/>
<rect x="267" y="638" width="1" height="1" fill="#3c28e6"/>
<rect x="268" y="638" width="1" height="1" fill="#6414f0"/>
<rect x="270" y="638" width="1" height="1" fill="#6414f0"/>
<rect x="272" y="638" width="1" height="1" fill="#3c28e6"/>
<rect x="273" y="638" width="1" height="1" fill="#6414f0"/>
<rect x="274" y="638" width="1" height="1" fill="#1e46e6"/>
<rect x="275" y="638" width="1" height="1" fill="#3c28e6"/>
<rect x="278" y="638" width="1" height="1" fill="#6414f0"/>
<rect x="279" y="638" width="1" height="1" fill="#0078e6"/>
<rect x="281" y="638" width="1" height="1" fill="#6414f0"/>
<rect x="282" y="638" width="1" height="1" fill="#3c28e6"/>
<rect x="267" y="639" width="1" height="1" fill="#6414f0"/>
<rect x="268" y="639" width="1" height="1" fill="#3c28e6"/>
<rect x="269" y="639" width="1" height="1" fill="#6414f0"/>
<rect x="271" y="639" width="1" height="1" fill="#0078e6"/>
<rect x="272" y="639" width="1" height="1" fill="#1e46e6"/>
<rect x="276" y="639" width="1" height="1" fill="#3c28e6"/>
<rect x="277" y="639" width="1" height="1" fill="#0078e6"/>
<rect x="278" y="639" width="1" height="1" fill="#1e46e6"/>
<rect x="280" y="639" width="1" height="1" fill="#0078e6"/>
<rect x="281" y="639" width="1" height="1" fill="#6414f0"/>
<rect x="282" y="639" width="1" height="1" fill="#6414f0"/>
<rect x="283" y="639" width="1" height="1" fill="#1e46e6"/>
<rect x="266" y="640" width="1" height="1" fill="#6414f0"/>
<rect x="269" y="640" width="1" height="1" fill="#3c28e6"/>
<rect x="275" y="640" width="1" height="1" fill="#3c28e6"/>
<rect x="276" y="640" width="1" height="1" fill="#3c28e6"/>
<rect x="279" y="640" width="1" height="1" fill="#6414f0"/>
<rect x="280" y="640" width="1" height="1" fill="#1e46e6"/>
<rect x="267" y="641" width="1" height="1" fill="#6414f0"/>
<rect x="268" y="641" width="1" height="1" fill="#3c28e6"/>
<rect x="269" y="641" width="1" height="1" fill="#3c28e6"/>
<rect x="270" y="641" width="1" height="1" fill="#3c28e6"/>
<rect x="271" y="641" width="1" height="1" fill="#0078e6"/>
<rect x="275" y="641" width="1" height="1" fill="#1e46e6"/>
<rect x="277" y="641" width="1" height="1" fill="#3c28e6"/>
<rect x="278" y="641" width="1" height="1" fill="#3c28e6"/>
<rect x="283" y="641" width="1" height="1" fill="#3c28e6"/>
<rect x="263" y="626" width="1" height="1" fill="#3c28e6"/>
<rect x="266" y="626" width="1" height="1" fill="#6414f0"/>
<rect x="267" y="626" width="1" height="1" fill="#6414f0"/>
<rect x="263" y="627" width="1" height="1" fill="#3c28e6"/>
<rect x="262" y="630" width="1" height="1" fill="#3c28e6"/>
<rect x="267" y="630" width="1" height="1" fill="#6414f0"/>
<rect x="265" y="631" width="1" height="1" fill="#6414f0"/>
<rect x="262" y="632" width="1" height="1" fill="#6414f0"/>
<rect x="263" y="633" width="1" height="1" fill="#3c28e6"/>
<rect x="267" y="633" width="1" height="1" fill="#3c28e6"/>
<rect x="262" y="635" width="1" height="1" fill="#3c28e6"/>
<rect x="265" y="635" width="1" height="1" fill="#6414f0"/>
<rect x="266" y="635" width="1" height="1" fill="#6414f0"/>
<rect x="267" y="635" width="1" height="1" fill="#3c28e6"/>
<rect x="272.0" y="642.0" width="1.0" height="1.0" fill="#6414f0"/>
<rect x="265.0" y="636.0" width="1.0" height="1.0" fill="#6414f0"/>
<rect x="281.0" y="640.0" width="1.0" height="1.0" fill="#3c28e6"/>
<rect x="275.0" y="635.0" width="1.0" height="1.0" fill="#3c28e6"/>
<rect x="288.0" y="637.0" width="1.0" height="1.0" fill="#6414f0"/>
<rect x="283.0" y="645.0" width="1.0" height="1.0" fill="#3c28e6"/>
<rect x="280.0" y="631.0" width="1.0" height="1.0" fill="#3c28e6"/>
<rect x="276.0" y="635.0" width="1.0" height="1.0" fill="#6414f0"/>
<rect x="263.0" y="629.0" width="1.0" height="1.0" fill="#0078e6"/>
<rect x="282.0" y="623.0" width="1.0" height="1.0" fill="#3c28e6"/>
<rect x="272.0" y="642.0" width="1.0" height="1.0" fill="#3c28e6"/>
<rect x="279.0" y="619.0" width="1.0" height="1.0" fill="#3c28e6"/>
<rect x="279.0" y="633.0" width="1.0" height="1.0" fill="#0078e6"/>
<rect x="280.0" y="638.0" width="1.0" height="1.0" fill="#3c28e6"/>
<rect x="280.0" y="638.0" width="1.0" height="1.0" fill="#0078e6"/>
<rect x="282.0" y="641.0" width="1.0" height="1.0" fill="#3c28e6"/>
<rect x="275.0" y="635.0" width="1.0" height="1.0" fill="#6414f0"/>
<rect x="274.0" y="632.0" width="1.0" height="1.0" fill="#1e46e6"/>
<rect x="288.0" y="645.0" width="1.0" height="1.0" fill="#6414f0"/>
<rect x="276.0" y="635.0" width="1.0" height="1.0" fill="#3c28e6"/>
<rect x="276.0" y="634.0" width="1.0" height="1.0" fill="#6414f0"/>
<rect x="275.0" y="635.0" width="1.0" height="1.0" fill="#6414f0"/>
<rect x="274.0" y="636.0" width="1.0" height="1.0" fill="#3c28e6"/>
<rect x="278.0" y="632.0" width="1.0" height="1.0" fill="#1e46e6"/>
<rect x="278.0" y="634.0" width="1.0" height="1.0" fill="#0078e6"/>
<rect x="274.0" y="636.0" width="1.0" height="1.0" fill="#6414f0"/>
<rect x="270.0" y="644.0" width="1.0" height="1.0" fill="#3c28e6"/>
<rect x="276.0" y="637.0" width="1.0" height="1.0" fill="#1e46e6"/>
<rect x="281.0" y="636.0" width="1.0" height="1.0" fill="#3c28e6"/>
<rect x="260.0" y="644.0" width="1.0" height="1.0" fill="#1e46e6"/>
<rect x="275.0" y="631.0" width="1.0" height="1.0" fill="#3c28e6"/>
<rect x="279.0" y="637.0" width="1.0" height="1.0" fill="#6414f0"/>
<rect x="268.0" y="647.0" width="1.0" height="1.0" fill="#0078e6"/>
<rect x="284.0" y="633.0" width="1.0" height="1.0" fill="#6414f0"/>
<rect x="253.0" y="622.0" width="1.0" height="1.0" fill="#1e46e6"/>
<rect x="275.0" y="636.0" width="1.0" height="1.0" fill="#6414f0"/>
<rect x="275.0" y="633.0" width="1.0" height="1.0" fill="#3c28e6"/>
<rect x="287.0" y="646.0" width="1.0" height="1.0" fill="#1e46e6"/>
<rect x="280.0" y="632.0" width="1.0" height="1.0" fill="#3c28e6"/>
<rect x="262.0" y="643.0" width="1.0" height="1.0" fill="#0078e6"/>
<rect x="276.0" y="637.0" width="1.0" height="1.0" fill="#6414f0"/>
<rect x="284.0" y="636.0" width="1.0" height="1.0" fill="#1e46e6"/>
<rect x="278.0" y="635.0" width="1.0" height="1.0" fill="#1e46e6"/>
<rect x="277.0" y="635.0" width="1.0" height="1.0" fill="#0078e6"/>
<rect x="275.0" y="637.0" width="1.0" height="1.0" fill="#3c28e6"/>
<rect x="266.0" y="634.0" width="1.0" height="1.0" fill="#3c28e6"/>
<rect x="269.0" y="635.0" width="1.0" height="1.0" fill="#6414f0"/>
<rect x="276.0" y="635.0" width="1.0" height="1.0" fill="#6414f0"/>
<rect x="288.0" y="637.0" width="1.0" height="1.0" fill="#1e46e6"/>
<rect x="265.0" y="639.0" width="1.0" height="1.0" fill="#6414f0"/>
<rect x="279.0" y="636.0" width="1.0" height="1.0" fill="#6414f0"/>
<rect x="275.0" y="643.0" width="1.0" height="1.0" fill="#1e46e6"/>
<rect x="285.0" y="630.0" width="1.0" height="1.0" fill="#6414f0"/>
<rect x="272.0" y="634.0" width="1.0" height="1.0" fill="#6414f0"/>
<rect x="275.0" y="635.0" width="1.0" height="1.0" fill="#6414f0"/>
<rect x="274.0" y="633.0" width="1.0" height="1.0" fill="#6414f0"/>
<rect x="269.0" y="640.0" width="1.0" height="1.0" fill="#3c28e6"/>
<rect x="278.0" y="633.0" width="1.0" height="1.0" fill="#6414f0"/>
<rect x="258.0" y="624.0" width="1.0" height="1.0" fill="#3c28e6"/>
<rect x="274.0" y="642.0" width="1.0" height="1.0" fill="#3c28e6"/>
<rect x="271.0" y="633.0" width="1.0" height="1.0" fill="#0078e6"/>
<rect x="275.0" y="640.0" width="1.0" height="1.0" fill="#1e46e6"/>
<rect x="275.0" y="635.0" width="1.0" height="1.0" fill="#3c28e6"/>
<rect x="274.0" y="635.0" width="1.0" height="1.0" fill="#0078e6"/>
<rect x="276.0" y="636.0" width="1.0" height="1.0" fill="#1e46e6"/>
<rect x="275.0" y="627.0" width="1.0" height="1.0" fill="#6414f0"/>
<rect x="274.0" y="635.0" width="1.0" height="1.0" fill="#3c28e6"/>
<rect x="268.0" y="639.0" width="1.0" height="1.0" fill="#3c28e6"/>
<rect x="275.0" y="636.0" width="1.0" height="1.0" fill="#6414f0"/>
<rect x="278.0" y="635.0" width="1.0" height="1.0" fill="#0078e6"/>
<rect x="289.0" y="629.0" width="1.0" height="1.0" fill="#3c28e6"/>
<rect x="260.0" y="626.0" width="1.0" height="1.0" fill="#6414f0"/>
<rect x="280.0" y="637.0" width="1.0" height="1.0" fill="#6414f0"/>
<rect x="274.0" y="637.0" width="1.0" height="1.0" fill="#3c28e6"/>
<rect x="285.0" y="643.0" width="1.0" height="1.0" fill="#3c28e6"/>
<rect x="271.0" y="633.0" width="1.0" height="1.0" fill="#0078e6"/>
<rect x="262.0" y="629.0" width="1.0" height="1.0" fill="#6414f0"/>
<rect x="279.0" y="629.0" width="1.0" height="1.0" fill="#3c28e6"/>
<rect x="276.0" y="635.0" width="1.0" height="1.0" fill="#6414f0"/>
<rect x="268.0" y="635.0" width="1.0" height="1.0" fill="#1e46e6"/>
<rect x="277.0" y="630.0" width="1.0" height="1.0" fill="#1e46e6"/>
<rect x="270.0" y="632.0" width="1.0" height="1.0" fill="#0078e6"/>
<rect x="265.0" y="632.0" width="1.0" height="1.0" fill="#3c28e6"/>
<rect x="278.0" y="641.0" width="1.0" height="1.0" fill="#3c28e6"/>
<rect x="272.0" y="635.0" width="1.0" height="1.0" fill="#0078e6"/>
<rect x="281.0" y="637.0" width="1.0" height="1.0" fill="#6414f0"/>
<rect x="276.0" y="636.0" width="1.0" height="1.0" fill="#6414f0"/>
<rect x="277.0" y="637.0" width="1.0" height="1.0" fill="#6414f0"/>
<rect x="275.0" y="636.0" width="1.0" height="1.0" fill="#3c28e6"/>
<rect x="255.0" y="630.0" width="1.0" height="1.0" fill="#0078e6"/>
<rect x="285.0" y="635.0" width="1.0" height="1.0" fill="#1e46e6"/>
<rect x="275.0" y="636.0" width="1.0" height="1.0" fill="#0078e6"/>
<rect x="284.0" y="643.0" width="1.0" height="1.0" fill="#3c28e6"/>
<rect x="280.0" y="626.0" width="1.0" height="1.0" fill="#6414f0"/>
<rect x="276.0" y="635.0" width="1.0" height="1.0" fill="#0078e6"/>
<rect x="275.0" y="644.0" width="1.0" height="1.0" fill="#3c28e6"/>
<rect x="264.0" y="646.0" width="1.0" height="1.0" fill="#1e46e6"/>
<rect x="269.0" y="655.0" width="1.0" height="1.0" fill="#0078e6"/>
<rect x="278.0" y="631.0" width="1.0" height="1.0" fill="#6414f0"/>
<rect x="286.0" y="642.0" width="1.0" height="1.0" fill="#1e46e6"/>
<rect x="285.0" y="640.0" width="1.0" height="1.0" fill="#3c28e6"/>
<rect x="278.0" y="631.0" width="1.0" height="1.0" fill="#3c28e6"/>
<rect x="275.0" y="636.0" width="1.0" height="1.0" fill="#3c28e6"/>
<rect x="279.0" y="634.0" width="1.0" height="1.0" fill="#6414f0"/>
<rect x="280.0" y="638.0" width="1.0" height="1.0" fill="#0078e6"/>
<rect x="268.0" y="646.0" width="1.0" height="1.0" fill="#3c28e6"/>
<rect x="276.0" y="639.0" width="1.0" height="1.0" fill="#6414f0"/>
<rect x="272.0" y="641.0" width="1.0" height="1.0" fill="#3c28e6"/>
<rect x="257.0" y="628.0" width="1.0" height="1.0" fill="#1e46e6"/>
<rect x="265.0" y="639.0" width="1.0" height="1.0" fill="#1e46e6"/>
<rect x="271.0" y="636.0" width="1.0" height="1.0" fill="#0078e6"/>
<rect x="296.0" y="623.0" width="1.0" height="1.0" fill="#3c28e6"/>
<rect x="276.0" y="636.0" width="1.0" height="1.0" fill="#0078e6"/>
<rect x="274.0" y="636.0" width="1.0" height="1.0" fill="#3c28e6"/>
<rect x="276.0" y="635.0" width="1.0" height="1.0" fill="#3c28e6"/>
<rect x="266.0" y="634.0" width="1.0" height="1.0" fill="#6414f0"/>
<rect x="269.0" y="633.0" width="1.0" height="1.0" fill="#1e46e6"/>
<rect x="281.0" y="624.0" width="1.0" height="1.0" fill="#3c28e6"/>
<rect x="263.0" y="635.0" width="1.0" height="1.0" fill="#6414f0"/>
<rect x="273.0" y="633.0" width="1.0" height="1.0" fill="#3c28e6"/>
<rect x="291.0" y="641.0" width="1.0" height="1.0" fill="#6414f0"/>
<rect x="273.0" y="639.0" width="1.0" height="1.0" fill="#1e46e6"/>
<rect x="275.0" y="633.0" width="1.0" height="1.0" fill="#0078e6"/>
<rect x="274.0" y="634.0" width="1.0" height="1.0" fill="#6414f0"/>
<rect x="275.0" y="632.0" width="1.0" height="1.0" fill="#3c28e6"/>
<rect x="270.0" y="636.0" width="1.0" height="1.0" fill="#6414f0"/>
<rect x="271.0" y="642.0" width="1.0" height="1.0" fill="#1e46e6"/>
<rect x="274.0" y="634.0" width="1.0" height="1.0" fill="#3c28e6"/>
<rect x="274.0" y="636.0" width="1.0" height="1.0" fill="#6414f0"/>
<rect x="279.0" y="634.0" width="1.0" height="1.0" fill="#3c28e6"/>
<rect x="276.0" y="628.0" width="1.0" height="1.0" fill="#6414f0"/>
<rect x="276.0" y="635.0" width="1.0" height="1.0" fill="#6414f0"/>
<rect x="286.0" y="628.0" width="1.0" height="1.0" fill="#6414f0"/>
<rect x="273.0" y="638.0" width="1.0" height="1.0" fill="#6414f0"/>
<rect x="278.0" y="628.0" width="1.0" height="1.0" fill="#3c28e6"/>
<rect x="276.0" y="639.0" width="1.0" height="1.0" fill="#3c28e6"/>
<rect x="280.0" y="635.0" width="1.0" height="1.0" fill="#3c28e6"/>
<rect x="272.0" y="638.0" width="1.0" height="1.0" fill="#6414f0"/>
<rect x="275.0" y="638.0" width="1.0" height="1.0" fill="#1e46e6"/>
<rect x="275.0" y="635.0" width="1.0" height="1.0" fill="#1e46e6"/>
<rect x="275.0" y="635.0" width="1.0" height="1.0" fill="#6414f0"/>
<rect x="276.0" y="630.0" width="1.0" height="1.0" fill="#6414f0"/>
<rect x="274.0" y="635.0" width="1.0" height="1.0" fill="#6414f0"/>
<rect x="276.0" y="637.0" width="1.0" height="1.0" fill="#1e46e6"/>
<rect x="276.0" y="637.0" width="1.0" height="1.0" fill="#6414f0"/>
<rect x="260.0" y="635.0" width="1.0" height="1.0" fill="#3c28e6"/>
<rect x="276.0" y="636.0" width="1.0" height="1.0" fill="#1e46e6"/>
<rect x="271.0" y="632.0" width="1.0" height="1.0" fill="#6414f0"/>
<rect x="274.0" y="636.0" width="1.0" height="1.0" fill="#1e46e6"/>
<rect x="264.0" y="621.0" width="1.0" height="1.0" fill="#6414f0"/>
<rect x="275.0" y="636.0" width="1.0" height="1.0" fill="#3c28e6"/>
<rect x="276.0" y="633.0" width="1.0" height="1.0" fill="#3c28e6"/>
<rect x="280.0" y="635.0" width="1.0" height="1.0" fill="#6414f0"/>
<rect x="266.0" y="624.0" width="1.0" height="1.0" fill="#3c28e6"/>
<rect x="287.0" y="628.0" width="1.0" height="1.0" fill="#3c28e6"/>
<rect x="280.0" y="624.0" width="1.0" height="1.0" fill="#0078e6"/>
<rect x="269.0" y="638.0" width="1.0" height="1.0" fill="#1e46e6"/>
<rect x="280.0" y="640.0" width="1.0" height="1.0" fill="#6414f0"/>
<rect x="276.0" y="636.0" width="1.0" height="1.0" fill="#6414f0"/>
<rect x="262.0" y="633.0" width="1.0" height="1.0" fill="#3c28e6"/>
<rect x="273.0" y="634.0" width="1.0" height="1.0" fill="#3c28e6"/>
<rect x="278.0" y="631.0" width="1.0" height="1.0" fill="#6414f0"/>
<rect x="270.0" y="641.0" width="1.0" height="1.0" fill="#3c28e6"/>
<rect x="273.0" y="629.0" width="1.0" height="1.0" fill="#6414f0"/>
<rect x="292.0" y="632.0" width="1.0" height="1.0" fill="#1e46e6"/>
<rect x="286.0" y="636.0" width="1.0" height="1.0" fill="#3c28e6"/>
<rect x="272.0" y="637.0" width="1.0" height="1.0" fill="#3c28e6"/>
<rect x="276.0" y="637.0" width="1.0" height="1.0" fill="#6414f0"/>
<rect x="255.0" y="646.0" width="1.0" height="1.0" fill="#1e46e6"/>
<rect x="275.0" y="636.0" width="1.0" height="1.0" fill="#3c28e6"/>
<rect x="279.0" y="637.0" width="1.0" height="1.0" fill="#0078e6"/>
<rect x="285.0" y="639.0" width="1.0" height="1.0" fill="#6414f0"/>
<rect x="272.0" y="630.0" width="1.0" height="1.0" fill="#3c28e6"/>
<rect x="275.0" y="631.0" width="1.0" height="1.0" fill="#6414f0"/>
<rect x="270.0" y="629.0" width="1.0" height="1.0" fill="#0078e6"/>
<rect x="275.0" y="636.0" width="1.0" height="1.0" fill="#1e46e6"/>
<rect x="274.0" y="635.0" width="1.0" height="1.0" fill="#0078e6"/>
<rect x="276.0" y="636.0" width="1.0" height="1.0" fill="#6414f0"/>
<rect x="285.0" y="646.0" width="1.0" height="1.0" fill="#0078e6"/>
<rect x="270.0" y="649.0" width="1.0" height="1.0" fill="#1e46e6"/>
<rect x="276.0" y="632.0" width="1.0" height="1.0" fill="#3c28e6"/>
<rect x="276.0" y="637.0" width="1.0" height="1.0" fill="#0078e6"/>
<rect x="278.0" y="637.0" width="1.0" height="1.0" fill="#3c28e6"/>
<rect x="274.0" y="630.0" width="1.0" height="1.0" fill="#1e46e6"/>
<rect x="272.0" y="636.0" width="1.0" height="1.0" fill="#6414f0"/>
<rect x="278.0" y="637.0" width="1.0" height="1.0" fill="#0078e6"/>
<rect x="274.0" y="634.0" width="1.0" height="1.0" fill="#6414f0"/>
<rect x="279.0" y="631.0" width="1.0" height="1.0" fill="#6414f0"/>
<rect x="275.0" y="634.0" width="1.0" height="1.0" fill="#6414f0"/>
<rect x="274.0" y="636.0" width="1.0" height="1.0" fill="#6414f0"/>
<rect x="270.0" y="642.0" width="1.0" height="1.0" fill="#3c28e6"/>
<rect x="263.0" y="622.0" width="1.0" height="1.0" fill="#3c28e6"/>
<rect x="278.0" y="631.0" width="1.0" height="1.0" fill="#3c28e6"/>
<rect x="271.0" y="632.0" width="1.0" height="1.0" fill="#0078e6"/>
<rect x="268.0" y="640.0" width="1.0" height="1.0" fill="#3c28e6"/>
<rect x="261.0" y="617.0" width="1.0" height="1.0" fill="#6414f0"/>
<rect x="275.0" y="635.0" width="1.0" height="1.0" fill="#1e46e6"/>
<rect x="272.0" y="631.0" width="1.0" height="1.0" fill="#6414f0"/>
<rect x="273.0" y="635.0" width="1.0" height="1.0" fill="#1e46e6"/>
<rect x="279.0" y="629.0" width="1.0" height="1.0" fill="#6414f0"/>
<rect x="279" y="640" width="1" height="1" fill="#00b4e6"/>
<rect x="280" y="640" width="1" height="1" fill="#00b4e6"/>
<rect x="281" y="640" width="1" height="1" fill="#0078e6"/>
<rect x="278" y="641" width="1" height="1" fill="#0078e6"/>
<rect x="280" y="641" width="1" height="1" fill="#0078e6"/>
<rect x="281" y="641" width="1" height="1" fill="#00b4e6"/>
<rect x="278" y="642" width="1" height="1" fill="#0078e6"/>
<rect x="280" y="642" width="1" height="1" fill="#00e696"/>
<rect x="281" y="642" width="1" height="1" fill="#00b4e6"/>
<rect x="278" y="643" width="1" height="1" fill="#00b4e6"/>
<rect x="279" y="643" width="1" height="1" fill="#00b4e6"/>
<rect x="280" y="643" width="1" height="1" fill="#0078e6"/>
<rect x="281" y="643" width="1" height="1" fill="#00b4e6"/>
<rect x="279" y="644" width="1" height="1" fill="#00b4e6"/>
<rect x="280" y="644" width="1" height="1" fill="#00b4e6"/>
<rect x="281" y="644" width="1" height="1" fill="#00b4e6"/>
<rect x="279" y="645" width="1" height="1" fill="#00b4e6"/>
<rect x="280" y="645" width="1" height="1" fill="#00b4e6"/>
<rect x="282" y="645" width="1" height="1" fill="#00b4e6"/>
<rect x="279" y="646" width="1" height="1" fill="#00e696"/>
<rect x="280" y="646" width="1" height="1" fill="#0078e6"/>
<rect x="281" y="646" width="1" height="1" fill="#00e696"/>
<rect x="282" y="646" width="1" height="1" fill="#00b4e6"/>
<rect x="280" y="647" width="1" height="1" fill="#00e696"/>
<rect x="281" y="647" width="1" height="1" fill="#0078e6"/>
<rect x="282" y="647" width="1" height="1" fill="#00b4e6"/>
<rect x="283" y="647" width="1" height="1" fill="#0078e6"/>
<rect x="280" y="648" width="1" height="1" fill="#0078e6"/>
<rect x="281" y="648" width="1" height="1" fill="#00b4e6"/>
<rect x="282" y="648" width="1" height="1" fill="#00b4e6"/>
<rect x="281" y="649" width="1" height="1" fill="#00e696"/>
<rect x="282" y="649" width="1" height="1" fill="#00e696"/>
<rect x="283" y="649" width="1" height="1" fill="#00e696"/>
<rect x="281" y="650" width="1" height="1" fill="#00e696"/>
<rect x="281" y="651" width="1" height="1" fill="#00e696"/>
<rect x="282" y="651" width="1" height="1" fill="#00b4e6"/>
<rect x="284" y="651" width="1" height="1" fill="#00e696"/>
<rect x="281" y="652" width="1" height="1" fill="#00b4e6"/>
<rect x="282" y="652" width="1" height="1" fill="#00b4e6"/>
<rect x="283" y="652" width="1" height="1" fill="#00e696"/>
<rect x="281" y="653" width="1" height="1" fill="#00b4e6"/>
<rect x="284" y="653" width="1" height="1" fill="#00e696"/>
<rect x="282" y="654" width="1" height="1" fill="#00e696"/>
<rect x="284" y="654" width="1" height="1" fill="#00b4e6"/>
<rect x="285" y="654" width="1" height="1" fill="#0078e6"/>
<rect x="282" y="655" width="1" height="1" fill="#00e696"/>
<rect x="284" y="656" width="1" height="1" fill="#00e696"/>
<rect x="285" y="656" width="1" height="1" fill="#0078e6"/>
<rect x="282" y="657" width="1" height="1" fill="#00e696"/>
<rect x="283" y="657" width="1" height="1" fill="#00b4e6"/>
<rect x="284" y="657" width="1" height="1" fill="#0078e6"/>
<rect x="285" y="657" width="1" height="1" fill="#00e696"/>
<rect x="283" y="658" width="1" height="1" fill="#0078e6"/>
<rect x="285" y="658" width="1" height="1" fill="#0078e6"/>
<rect x="286" y="658" width="1" height="1" fill="#00e696"/>
<rect x="284" y="659" width="1" height="1" fill="#00b4e6"/>
<rect x="285" y="659" width="1" height="1" fill="#0078e6"/>
<rect x="286" y="659" width="1" height="1" fill="#00b4e6"/>
<rect x="283" y="660" width="1" height="1" fill="#00b4e6"/>
<rect x="284" y="660" width="1" height="1" fill="#00e696"/>
<rect x="285" y="660" width="1" height="1" fill="#00e696"/>
<rect x="284" y="661" width="1" height="1" fill="#00b4e6"/>
<rect x="285" y="661" width="1" height="1" fill="#00b4e6"/>
<rect x="287" y="661" width="1" height="1" fill="#0078e6"/>
<rect x="284" y="662" width="1" height="1" fill="#0078e6"/>
<rect x="285" y="662" width="1" height="1" fill="#00b4e6"/>
<rect x="286" y="662" width="1" height="1" fill="#00b4e6"/>
<rect x="284" y="663" width="1" height="1" fill="#00b4e6"/>
<rect x="287" y="663" width="1" height="1" fill="#00e696"/>
<rect x="284" y="664" width="1" height="1" fill="#0078e6"/>
<rect x="285" y="664" width="1" height="1" fill="#00b4e6"/>
<rect x="286" y="664" width="1" height="1" fill="#0078e6"/>
<rect x="287" y="664" width="1" height="1" fill="#0078e6"/>
<rect x="285" y="665" width="1" height="1" fill="#00b4e6"/>
<rect x="287" y="665" width="1" height="1" fill="#00b4e6"/>
<rect x="288" y="665" width="1" height="1" fill="#0078e6"/>
<rect x="287" y="666" width="1" height="1" fill="#0078e6"/>
<rect x="288" y="666" width="1" height="1" fill="#00b4e6"/>
<rect x="285" y="667" width="1" height="1" fill="#00b4e6"/>
<rect x="286" y="667" width="1" height="1" fill="#00b4e6"/>
<rect x="287" y="667" width="1" height="1" fill="#00b4e6"/>
<rect x="288" y="667" width="1" height="1" fill="#00b4e6"/>
<rect x="280" y="657" width="1" height="1" fill="#00b4e6"/>
<rect x="282" y="657" width="1" height="1" fill="#00b4e6"/>
<rect x="284" y="657" width="1" height="1" fill="#0078e6"/>
<rect x="285" y="657" width="1" height="1" fill="#0078e6"/>
<rect x="286" y="657" width="1" height="1" fill="#0078e6"/>
<rect x="288" y="657" width="1" height="1" fill="#00b4e6"/>
<rect x="280" y="658" width="1" height="1" fill="#0078e6"/>
<rect x="282" y="658" width="1" height="1" fill="#0078e6"/>
<rect x="283" y="658" width="1" height="1" fill="#00b4e6"/>
<rect x="284" y="658" width="1" height="1" fill="#00b4e6"/>
<rect x="286" y="658" width="1" height="1" fill="#0078e6"/>
<rect x="287" y="658" width="1" height="1" fill="#0078e6"/>
<rect x="288" y="658" width="1" height="1" fill="#00b4e6"/>
<rect x="289" y="658" width="1" height="1" fill="#00b4e6"/>
<rect x="280" y="659" width="1" height="1" fill="#00b4e6"/>
<rect x="283" y="659" width="1" height="1" fill="#00b4e6"/>
<rect x="284" y="659" width="1" height="1" fill="#00b4e6"/>
<rect x="285" y="659" width="1" height="1" fill="#0078e6"/>
<rect x="286" y="659" width="1" height="1" fill="#0078e6"/>
<rect x="287" y="659" width="1" height="1" fill="#0078e6"/>
<rect x="288" y="659" width="1" height="1" fill="#0078e6"/>
<rect x="289" y="659" width="1" height="1" fill="#00b4e6"/>
<rect x="280" y="660" width="1" height="1" fill="#00b4e6"/>
<rect x="282" y="660" width="1" height="1" fill="#0078e6"/>
<rect x="284" y="660" width="1" height="1" fill="#0078e6"/>
<rect x="285" y="660" width="1" height="1" fill="#0078e6"/>
<rect x="286" y="660" width="1" height="1" fill="#0078e6"/>
<rect x="287" y="660" width="1" height="1" fill="#00b4e6"/>
<rect x="289" y="660" width="1" height="1" fill="#0078e6"/>
<rect x="280" y="661" width="1" height="1" fill="#0078e6"/>
<rect x="281" y="661" width="1" height="1" fill="#00b4e6"/>
<rect x="282" y="661" width="1" height="1" fill="#00b4e6"/>
<rect x="283" y="661" width="1" height="1" fill="#0078e6"/>
<rect x="286" y="661" width="1" height="1" fill="#0078e6"/>
<rect x="287" y="661" width="1" height="1" fill="#00b4e6"/>
<rect x="288" y="661" width="1" height="1" fill="#0078e6"/>
<rect x="289" y="661" width="1" height="1" fill="#00b4e6"/>
<rect x="281" y="662" width="1" height="1" fill="#00b4e6"/>
<rect x="282" y="662" width="1" height="1" fill="#00b4e6"/>
<rect x="283" y="662" width="1" height="1" fill="#0078e6"/>
<rect x="285" y="662" width="1" height="1" fill="#0078e6"/>
<rect x="286" y="662" width="1" height="1" fill="#0078e6"/>
<rect x="287" y="662" width="1" height="1" fill="#0078e6"/>
<rect x="288" y="662" width="1" height="1" fill="#0078e6"/>
<rect x="280" y="663" width="1" height="1" fill="#00b4e6"/>
<rect x="283" y="663" width="1" height="1" fill="#0078e6"/>
<rect x="284" y="663" width="1" height="1" fill="#0078e6"/>
<rect x="286" y="663" width="1" height="1" fill="#0078e6"/>
<rect x="287" y="663" width="1" height="1" fill="#00b4e6"/>
<rect x="289" y="663" width="1" height="1" fill="#00b4e6"/>
<rect x="281" y="664" width="1" height="1" fill="#00b4e6"/>
<rect x="282" y="664" width="1" height="1" fill="#0078e6"/>
<rect x="283" y="664" width="1" height="1" fill="#00b4e6"/>
<rect x="284" y="664" width="1" height="1" fill="#00b4e6"/>
<rect x="286" y="664" width="1" height="1" fill="#00b4e6"/>
<rect x="288" y="664" width="1" height="1" fill="#00b4e6"/>
<rect x="289" y="664" width="1" height="1" fill="#00b4e6"/>
<rect x="280" y="665" width="1" height="1" fill="#0078e6"/>
<rect x="281" y="665" width="1" height="1" fill="#00b4e6"/>
<rect x="283" y="665" width="1" height="1" fill="#0078e6"/>
<rect x="285" y="665" width="1" height="1" fill="#0078e6"/>
<rect x="286" y="665" width="1" height="1" fill="#00b4e6"/>
<rect x="287" y="665" width="1" height="1" fill="#00b4e6"/>
<rect x="288" y="665" width="1" height="1" fill="#0078e6"/>
<rect x="281" y="666" width="1" height="1" fill="#00b4e6"/>
<rect x="283" y="666" width="1" height="1" fill="#00b4e6"/>
<rect x="284" y="666" width="1" height="1" fill="#0078e6"/>
<rect x="285" y="666" width="1" height="1" fill="#0078e6"/>
<rect x="286" y="666" width="1" height="1" fill="#0078e6"/>
<rect x="287" y="666" width="1" height="1" fill="#0078e6"/>
<rect x="288" y="666" width="1" height="1" fill="#00b4e6"/>
<rect x="289" y="666" width="1" height="1" fill="#00b4e6"/>
<rect x="280" y="667" width="1" height="1" fill="#0078e6"/>
<rect x="281" y="667" width="1" height="1" fill="#00b4e6"/>
<rect x="282" y="667" width="1" height="1" fill="#00b4e6"/>
<rect x="283" y="667" width="1" height="1" fill="#0078e6"/>
<rect x="286" y="667" width="1" height="1" fill="#00b4e6"/>
<rect x="287" y="667" width="1" height="1" fill="#00b4e6"/>
<rect x="288" y="667" width="1" height="1" fill="#00b4e6"/>
<rect x="289" y="667" width="1" height="1" fill="#00b4e6"/>
<rect x="280" y="668" width="1" height="1" fill="#0078e6"/>
<rect x="281" y="668" width="1" height="1" fill="#0078e6"/>
<rect x="283" y="668" width="1" height="1" fill="#0078e6"/>
<rect x="286" y="668" width="1" height="1" fill="#0078e6"/>
<rect x="288" y="668" width="1" height="1" fill="#00b4e6"/>
<rect x="289" y="668" width="1" height="1" fill="#00b4e6"/>
</g>
<defs><clipPath id="radclip"><rect x="55" y="458" width="432" height="337"/></clipPath></defs>
<g clip-path="url(#radclip)" stroke="#fff" fill="none" stroke-width="1" shape-rendering="crispEdges">
<circle cx="275.5" cy="629.5" r="28"/>
<circle cx="275.5" cy="629.5" r="56"/>
<circle cx="275.5" cy="629.5" r="84"/>
<circle cx="275.5" cy="629.5" r="112"/>
<circle cx="275.5" cy="629.5" r="140"/>
<circle cx="275.5" cy="629.5" r="168"/>
<circle cx="275.5" cy="629.5" r="196"/>
<circle cx="275.5" cy="629.5" r="224"/>
<path d="M55 629.5H247.5M303.5 629.5H487M275.5 458V601.5M275.5 657.5V795"/>
<path d="M255.7 609.7L118.5 472.5M295.3 609.7L432.5 472.5M255.7 649.3L118.5 786.5M295.3 649.3L432.5 786.5"/>
</g>
<path d="M275 630L437 640" stroke="#ff0000" stroke-width="3" shape-rendering="auto"/>
<path d="M268 630.5h14l-3 3h-8z" stroke="#ff0000" fill="none"/><path d="M272 627l4-2 4 2" stroke="#ff0000" fill="none"/>
<path d="M144 517.5h11M149.5 512v11" stroke="#faf096" fill="none"/>
<text x="41" y="517" font-size="6" fill="#faf096">10</text>
<text x="144" y="807" font-size="6" fill="#faf096">-105</text>
<text x="16" y="447" font-size="24" fill="#ffff00" textLength="230" lengthAdjust="spacingAndGlyphs">2-aug-1997,15:05:00</text>
<text x="260.5" y="447" font-size="24" fill="#fff" textLength="257.5" lengthAdjust="spacingAndGlyphs" style="white-space:pre">maxdz plot.  maxdz plot.</text>
<text x="16" y="479.7" font-size="24" fill="#fff" textLength="154.5" lengthAdjust="spacingAndGlyphs">rhb_met track.</text>
<rect x="488" y="458" width="85" height="1" fill="#a0a0a0"/>
<text x="490.5" y="470.6" font-size="16" fill="#fff" textLength="51.5" lengthAdjust="spacingAndGlyphs">maxdz</text>
<rect x="490.0" y="485.0" width="10.0" height="7.0" fill="#ff7f7f"/>
<rect x="490.0" y="492.0" width="10.0" height="7.0" fill="#ff8c8c"/>
<rect x="490.0" y="499.0" width="10.0" height="7.0" fill="#ffaa64"/>
<rect x="490.0" y="506.0" width="10.0" height="7.0" fill="#ffdab0"/>
<rect x="490.0" y="513.0" width="10.0" height="7.0" fill="#f8d818"/>
<rect x="490.0" y="520.0" width="10.0" height="7.0" fill="#eab428"/>
<rect x="490.0" y="527.0" width="10.0" height="7.0" fill="#d89438"/>
<rect x="490.0" y="534.0" width="10.0" height="7.0" fill="#c8c8c8"/>
<rect x="490.0" y="541.0" width="10.0" height="7.0" fill="#006e4b"/>
<rect x="490.0" y="548.0" width="10.0" height="7.0" fill="#00e696"/>
<rect x="490.0" y="555.0" width="10.0" height="7.0" fill="#00b4e6"/>
<rect x="490.0" y="562.0" width="10.0" height="7.0" fill="#0078e6"/>
<rect x="490.0" y="569.0" width="10.0" height="7.0" fill="#1e46e6"/>
<rect x="490.0" y="576.0" width="10.0" height="7.0" fill="#3c28e6"/>
<rect x="490.0" y="583.0" width="10.0" height="7.0" fill="#6414f0"/>
<rect x="490.0" y="590.0" width="10.0" height="7.0" fill="#8c00ff"/>
<text x="505.5" y="492.5" font-size="16" fill="#fff">65.0</text>
<text x="505.5" y="520.5" font-size="16" fill="#fff">45.0</text>
<text x="505.5" y="548.5" font-size="16" fill="#fff">25.0</text>
<text x="505.5" y="576.5" font-size="16" fill="#fff">5.0</text>
<text x="505" y="604.5" font-size="16" fill="#fff">&#8211;15.0</text>
<rect x="488" y="626" width="85" height="1" fill="#a0a0a0"/>
<text x="490.5" y="638.6" font-size="16" fill="#fff" textLength="51.5" lengthAdjust="spacingAndGlyphs">maxdz</text>
<rect x="490.0" y="653.0" width="10.0" height="7.0" fill="#ff7f7f"/>
<rect x="490.0" y="660.0" width="10.0" height="7.0" fill="#ff8c8c"/>
<rect x="490.0" y="667.0" width="10.0" height="7.0" fill="#ffaa64"/>
<rect x="490.0" y="674.0" width="10.0" height="7.0" fill="#ffdab0"/>
<rect x="490.0" y="681.0" width="10.0" height="7.0" fill="#f8d818"/>
<rect x="490.0" y="688.0" width="10.0" height="7.0" fill="#eab428"/>
<rect x="490.0" y="695.0" width="10.0" height="7.0" fill="#d89438"/>
<rect x="490.0" y="702.0" width="10.0" height="7.0" fill="#c8c8c8"/>
<rect x="490.0" y="709.0" width="10.0" height="7.0" fill="#006e4b"/>
<rect x="490.0" y="716.0" width="10.0" height="7.0" fill="#00e696"/>
<rect x="490.0" y="723.0" width="10.0" height="7.0" fill="#00b4e6"/>
<rect x="490.0" y="730.0" width="10.0" height="7.0" fill="#0078e6"/>
<rect x="490.0" y="737.0" width="10.0" height="7.0" fill="#1e46e6"/>
<rect x="490.0" y="744.0" width="10.0" height="7.0" fill="#3c28e6"/>
<rect x="490.0" y="751.0" width="10.0" height="7.0" fill="#6414f0"/>
<rect x="490.0" y="758.0" width="10.0" height="7.0" fill="#8c00ff"/>
<text x="505.5" y="660.5" font-size="16" fill="#fff">65.0</text>
<text x="505.5" y="688.5" font-size="16" fill="#fff">45.0</text>
<text x="505.5" y="716.5" font-size="16" fill="#fff">25.0</text>
<text x="505.5" y="744.5" font-size="16" fill="#fff">5.0</text>
<text x="505" y="772.5" font-size="16" fill="#fff">&#8211;15.0</text>
<rect x="488" y="794" width="85" height="1" fill="#a0a0a0"/>
<text x="489" y="808" font-size="10" fill="#ff0000">rhb_met</text>
<rect x="488" y="819" width="85" height="1" fill="#a0a0a0"/>
<text x="381" y="861" font-size="26" fill="#fff" textLength="181" lengthAdjust="spacingAndGlyphs">Alt: 0.50 km MSL</text>
<g transform="translate(10,821)"><rect x="0.5" y="0.5" width="45" height="47" fill="#191970" stroke="#a0a0a0" stroke-width="1"/><path d="M7 13.5C11 7,20 8,27 11.5S35 11,38 9.5C28 19,14 30,6.5 40C12 34,20 37,28 40S36 37,39 35" stroke="#ffff00" stroke-width="2" fill="none" shape-rendering="auto"/></g>
<g transform="translate(57,821)"><rect x="0.5" y="0.5" width="45" height="47" fill="#6a6a6a" stroke="#a0a0a0" stroke-width="1"/><text x="3" y="15" font-size="13" font-weight="bold" fill="#e0e0e0" textLength="30" lengthAdjust="spacingAndGlyphs" style="font-family:Liberation Mono">GOES</text><path d="M3 17 C12 17,23 23,24 33 C24 38,23 42,22 44 H3Z" fill="url(#dith_w)"/><path d="M3 37 C7 36,12 38,12 44H3Z M3 17h4v5h-4z M14 22 C19 23,23 28,24 33 L19 32 C17 28,15 26,14 22Z" fill="#e0e0e0"/><path d="M24 24 L42 20 M22 31 L42 21" stroke="#e0e0e0" stroke-dasharray="1 2" fill="none"/><path d="M39 19l3 -2 3 2 -3 3z" fill="#e0e0e0"/><text x="25" y="43" font-size="10" fill="#e0e0e0" textLength="14" lengthAdjust="spacingAndGlyphs">.IR</text></g>
<g transform="translate(104,821)"><rect x="0.5" y="0.5" width="45" height="47" fill="#191970" stroke="#a0a0a0" stroke-width="1"/><path d="M4.7 8.9 C7 16,10 21,15 25 S22 30,26.6 30.7" stroke="#ffff00" stroke-width="2" fill="none" shape-rendering="auto"/><path d="M10 25 L8.4 39 H15.5 L13 25Z" fill="#ffff00"/><path d="M11 21 L14 19 L16 25" stroke="#ffff00" fill="none"/><g fill="none" stroke="#ffff00" stroke-width="1.3" shape-rendering="auto"><path d="M38 6.5C34 5,32 7,33 10S38 12,38 14.5 34 17,32.5 15"/><path d="M32.8 18V25C32.8 27,38.3 27,38.3 25V18"/><path d="M32.8 39V29H36.5C38.5 29,38.5 34,36.5 34H32.8M35.5 34L38.5 39"/></g></g>
<g transform="translate(151,821)"><rect x="0.5" y="0.5" width="45" height="47" fill="#191970" stroke="#a0a0a0" stroke-width="1"/><g stroke="#ffff00" fill="none" stroke-width="1.2"><rect x="5.5" y="5.5" width="35" height="37"/><line x1="14.2" y1="5.5" x2="14.2" y2="42.5"/><line x1="5.5" y1="14.8" x2="40.5" y2="14.8"/><line x1="23.0" y1="5.5" x2="23.0" y2="42.5"/><line x1="5.5" y1="24.0" x2="40.5" y2="24.0"/><line x1="31.8" y1="5.5" x2="31.8" y2="42.5"/><line x1="5.5" y1="33.2" x2="40.5" y2="33.2"/></g><path d="M11 10C13 18,17 24,22 29S30 34,34 35" stroke="#ffff00" stroke-width="2" fill="none" shape-rendering="auto"/><path d="M17 27L15.5 41H22.5L20.5 27Z" fill="#ffff00"/></g>
<g transform="translate(198,821)"><rect x="0.5" y="0.5" width="13" height="47" fill="#191970" stroke="#a0a0a0" stroke-width="1"/><g fill="#ffff00" font-size="7" text-anchor="middle"><text x="7" y="10.0">B</text><text x="7" y="16.3">O</text><text x="7" y="22.6">U</text><text x="7" y="28.9">N</text><text x="7" y="35.2">D</text><text x="7" y="41.5">S</text></g></g>
<g transform="translate(213,845)"><rect x="0.5" y="0.5" width="21" height="23" fill="#191970" stroke="#a0a0a0" stroke-width="1"/><g stroke="#ffff00" fill="none" stroke-width="1"><rect x="4.5" y="4.5" width="14" height="15"/><path d="M9.5 4.5V19.5M14 4.5V19.5M4.5 9.5H18.5M4.5 14.5H18.5"/></g></g>
<g transform="translate(236,821)"><rect x="0.5" y="0.5" width="20" height="47" fill="#191970" stroke="#a0a0a0" stroke-width="1"/><path d="M3 9 L7 5 L9 6 L7 9 L9 12 L6 14 L4 12Z M11 5 L17 4 L16 7 L14 8 L15 11 L13 12 L12 9Z" fill="#ffff00"/><g fill="#ffff00" font-size="9" text-anchor="middle"><text x="10.5" y="24">M</text><text x="10.5" y="33">A</text><text x="10.5" y="42">P</text></g></g>
<g transform="translate(258,821)"><rect x="0.5" y="0.5" width="21" height="47" fill="#191970" stroke="#a0a0a0" stroke-width="1"/><g stroke="#ffff00" fill="none" stroke-width="1.2" shape-rendering="auto"><circle cx="10.5" cy="23" r="6.5"/><circle cx="10.5" cy="23" r="2.5"/><path d="M10.5 15V31M2.5 23H18.5M5 17.5L16 28.5M16 17.5L5 28.5"/></g></g>
<g transform="translate(280,845)"><rect x="0.5" y="0.5" width="21" height="23" fill="#191970" stroke="#a0a0a0" stroke-width="1"/><circle cx="11" cy="13" r="6" stroke="#ffff00" fill="none" stroke-width="1.2"/></g>
<g transform="translate(303,821)"><rect x="0.5" y="0.5" width="45" height="47" fill="#191970" stroke="#a0a0a0" stroke-width="1"/><g stroke="#ffff00" fill="none" stroke-width="1.2" shape-rendering="auto"><path d="M6 32H39L36 39H10Z"/><path d="M8 32V26H12L14 32"/><circle cx="22" cy="23" r="2.5"/><path d="M22 25.5V32M34 16V32"/></g><path d="M3 40L6 38 9 40 12 38 15 40 18 38 21 40 24 38 27 40 30 38 33 40 36 38 39 40 42 38V43H3Z" fill="#ffff00"/></g>
<!-- tw -->
<rect x="1087" y="787" width="65" height="113" fill="#5f9ea0"/>
<rect x="1087" y="787" width="65" height="1" fill="#c0c0c0"/>
<rect x="1087" y="787" width="1" height="113" fill="#c0c0c0"/>
<rect x="1088" y="788" width="64" height="19" fill="#006400"/>
<rect x="1090.5" y="790.5" width="14" height="14" fill="none" stroke="#d0d0d0"/>
<circle cx="1097.5" cy="797.5" r="4.5" fill="#d8d8d8"/>
<rect x="1109.5" y="790.5" width="14" height="14" fill="none" stroke="#d0d0d0"/>
<path d="M1112.5 793.5h8v9h-8z M1114 796h5M1114 798h5M1114 800h5" stroke="#d0d0d0" fill="none"/>
<text x="1132.5" y="801.5" font-size="13" font-weight="bold" fill="#e0e0e0">time</text>
<rect x="1092" y="813" width="60" height="87" fill="#000"/>
<rect x="1094" y="815" width="58" height="85" fill="#e6e6e6"/>
<text x="1103.5" y="839" font-size="16.5" font-weight="bold" fill="#000" textLength="58" lengthAdjust="spacingAndGlyphs">System</text>
<path d="M1100 900V862H1152" stroke="#000" stroke-width="2" fill="none"/>
<path d="M1107 900V869H1152" stroke="#000" stroke-width="2" fill="none"/>
<path d="M1107 891H1152" stroke="#000" stroke-width="2" fill="none"/>
<path d="M1109.5 889V871.5H1152" stroke="#fff" stroke-width="1" fill="none"/>
<text x="1130" y="885.5" font-size="14" font-weight="bold" fill="#000">Day</text>
<rect x="1107" y="897" width="45" height="3" fill="#000"/>

</svg>
</body></html>
